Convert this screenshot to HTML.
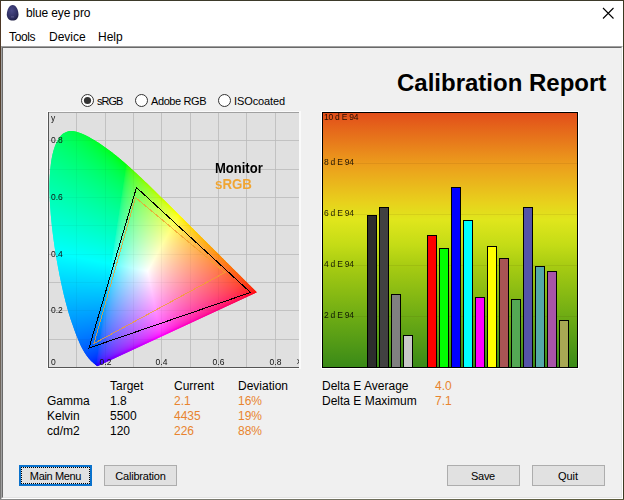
<!DOCTYPE html>
<html><head><meta charset="utf-8">
<style>
html,body{margin:0;padding:0;width:624px;height:500px;overflow:hidden;background:#f0f0f0;font-family:"Liberation Sans",sans-serif;}
.a{position:absolute;white-space:pre;line-height:1;}
.b{position:absolute;}
.t12{font-size:12px;color:#000;}
.or{color:#e8842e;}
.btn{position:absolute;top:465px;height:19px;width:71px;background:#e1e1e1;border:1px solid #adadad;}
.btn span{position:absolute;left:0;right:0;top:5px;text-align:center;font-size:11px;line-height:1;color:#000;}
</style></head><body>
<!-- window chrome -->
<div class="b" style="left:0;top:0;width:624px;height:46px;background:#fff"></div>
<div class="b" style="left:0;top:0;width:1px;height:500px;background:linear-gradient(#4a3422,#6b5a4a 60%,#777)"></div>
<div class="b" style="left:0;top:0;width:624px;height:1px;background:#3d3a2a"></div>
<div class="b" style="left:623px;top:0;width:1px;height:500px;background:#3a3a22"></div>
<div class="b" style="left:0;top:499px;width:624px;height:1px;background:linear-gradient(90deg,#8a8a8a,#5a5a3a)"></div>
<!-- client edge -->
<div class="b" style="left:1px;top:46px;width:621px;height:452px;border-top:1px solid #a0a0a0;border-left:1px solid #a0a0a0;border-right:1px solid #fff;border-bottom:1px solid #fff;box-sizing:border-box;width:622px;height:453px"></div>
<div class="b" style="left:2px;top:47px;box-sizing:border-box;width:620px;height:451px;border-top:1px solid #696969;border-left:1px solid #696969;border-right:1px solid #e3e3e3;border-bottom:1px solid #e3e3e3"></div>

<!-- title -->
<svg class="b" style="left:6px;top:4px" width="14" height="19" viewBox="0 0 14 19">
<defs><radialGradient id="eg" cx="0.42" cy="0.35" r="0.7"><stop offset="0" stop-color="#4a4a88"/><stop offset="0.7" stop-color="#2e2e62"/><stop offset="1" stop-color="#1c1c40"/></radialGradient></defs>
<path d="M6.65 0.9C10 0.9 12.5 6 12.5 10.5C12.5 14.2 10 16.6 6.65 16.6C3.3 16.6 0.8 14.2 0.8 10.5C0.8 6 3.3 0.9 6.65 0.9Z" fill="url(#eg)"/>
<rect x="5" y="12.5" width="3" height="0.8" fill="#8a8ab0" opacity="0.6"/>
</svg>
<div class="a t12" style="left:26px;top:7px;color:#000;letter-spacing:-0.15px">blue eye pro</div>
<svg class="b" style="left:602px;top:7px" width="13" height="13"><path d="M1 1L11.5 11.5M11.5 1L1 11.5" stroke="#000" stroke-width="1.1"/></svg>
<!-- menu -->
<div class="a t12" style="left:9px;top:31px;letter-spacing:-0.35px">Tools</div>
<div class="a t12" style="left:49px;top:31px">Device</div>
<div class="a t12" style="left:98px;top:31px">Help</div>

<!-- heading -->
<div class="a" style="left:397px;top:71px;font-size:24px;font-weight:bold;color:#000">Calibration Report</div>

<!-- radios -->
<svg class="b" style="left:80px;top:93px" width="16" height="16"><circle cx="7.5" cy="7.5" r="6" fill="#fff" stroke="#333" stroke-width="1"/><circle cx="7.5" cy="7.5" r="3.6" fill="#333"/></svg>
<div class="a" style="left:97px;top:96px;font-size:11px;letter-spacing:-1px">sRGB</div>
<svg class="b" style="left:134px;top:93px" width="16" height="16"><circle cx="7.5" cy="7.5" r="6" fill="#fff" stroke="#333" stroke-width="1"/></svg>
<div class="a" style="left:151px;top:96px;font-size:11px;letter-spacing:-0.4px">Adobe RGB</div>
<svg class="b" style="left:217px;top:93px" width="16" height="16"><circle cx="7.5" cy="7.5" r="6" fill="#fff" stroke="#333" stroke-width="1"/></svg>
<div class="a" style="left:234px;top:96px;font-size:11px;letter-spacing:-0.1px">ISOcoated</div>


<!-- CIE chart -->
<div class="b" style="left:47px;top:111px;width:254px;height:258px;background:#fafafa"></div>
<div class="b" style="left:48px;top:112px;width:251px;height:256px;overflow:hidden;background:#e0e0e0">
<svg class="b" style="left:0;top:0" width="251" height="256"><g fill="#cacaca"><rect x="28" y="1" width="1" height="254"/><rect x="1" y="227" width="251" height="1"/><rect x="57" y="1" width="1" height="254"/><rect x="1" y="198" width="251" height="1"/><rect x="85" y="1" width="1" height="254"/><rect x="1" y="170" width="251" height="1"/><rect x="113" y="1" width="1" height="254"/><rect x="1" y="142" width="251" height="1"/><rect x="142" y="1" width="1" height="254"/><rect x="1" y="113" width="251" height="1"/><rect x="170" y="1" width="1" height="254"/><rect x="1" y="85" width="251" height="1"/><rect x="198" y="1" width="1" height="254"/><rect x="1" y="57" width="251" height="1"/><rect x="227" y="1" width="1" height="254"/><rect x="1" y="28" width="251" height="1"/></g></svg>
<svg class="b" style="left:0;top:0" width="251" height="256"><clipPath id="lc"><path d="M49.9 254.1 49.9 254.1 49.8 254.1 49.8 254.1 49.8 254.1 49.8 254.1 49.8 254.1 49.8 254.1 49.8 254.1 49.8 254.1 49.8 254.1 49.8 254.1 49.7 254.1 49.7 254.1 49.7 254.1 49.7 254.1 49.7 254.1 49.7 254.1 49.7 254.1 49.6 254.1 49.6 254.1 49.6 254.1 49.6 254.1 49.6 254.1 49.6 254.1 49.5 254.1 49.5 254.1 49.5 254.1 49.5 254.1 49.5 254.1 49.4 254.1 49.4 254.1 49.4 254.1 49.4 254.1 49.3 254.1 49.3 254.1 49.3 254.1 49.2 254.1 49.2 254.1 49.1 254.1 49.1 254.1 49.0 254.0 49.0 254.0 48.9 254.0 48.9 253.9 48.8 253.9 48.7 253.8 48.6 253.8 48.6 253.7 48.5 253.6 48.4 253.5 48.3 253.5 48.2 253.4 48.1 253.3 48.0 253.2 47.8 253.1 47.7 253.0 47.6 252.8 47.4 252.7 47.3 252.6 47.1 252.4 46.9 252.3 46.7 252.1 46.6 251.9 46.4 251.8 46.1 251.6 45.9 251.4 45.7 251.2 45.4 251.0 45.2 250.7 44.9 250.5 44.6 250.2 44.3 250.0 44.0 249.7 43.7 249.4 43.3 249.2 43.0 248.8 42.6 248.5 42.2 248.1 41.8 247.6 41.3 247.1 40.8 246.5 40.3 245.8 39.7 245.0 39.1 244.2 38.5 243.4 37.9 242.5 37.3 241.7 36.7 240.8 36.2 239.9 35.7 239.1 35.2 238.3 34.8 237.6 34.4 236.8 34.0 236.1 33.6 235.3 33.2 234.5 32.8 233.7 32.4 232.8 32.0 231.9 31.6 230.9 31.1 229.8 30.6 228.7 30.1 227.5 29.6 226.3 29.1 225.1 28.6 223.8 28.1 222.4 27.5 221.0 27.0 219.5 26.4 217.9 25.8 216.2 25.2 214.5 24.6 212.8 23.9 211.0 23.3 209.1 22.6 207.2 22.0 205.1 21.3 203.0 20.6 200.9 20.0 198.6 19.3 196.3 18.7 193.8 18.0 191.3 17.3 188.8 16.7 186.1 16.0 183.4 15.3 180.6 14.7 177.8 14.0 174.8 13.4 171.9 12.7 168.8 12.1 165.7 11.4 162.4 10.8 159.1 10.1 155.7 9.5 152.3 8.9 148.9 8.3 145.4 7.7 142.0 7.2 138.5 6.6 135.0 6.1 131.5 5.6 127.9 5.1 124.3 4.7 120.7 4.2 117.0 3.8 113.4 3.5 109.9 3.1 106.3 2.8 102.9 2.6 99.4 2.3 96.0 2.1 92.6 1.9 89.2 1.8 85.8 1.7 82.5 1.6 79.2 1.5 76.0 1.5 72.9 1.6 69.9 1.7 66.9 1.8 63.9 2.0 61.0 2.2 58.2 2.5 55.4 2.8 52.7 3.1 50.0 3.5 47.5 4.0 45.1 4.4 42.8 5.0 40.6 5.5 38.5 6.2 36.5 6.8 34.6 7.5 32.8 8.3 31.0 9.1 29.4 9.9 27.9 10.7 26.5 11.5 25.3 12.4 24.2 13.3 23.2 14.3 22.3 15.3 21.6 16.3 21.0 17.3 20.4 18.4 20.0 19.4 19.6 20.5 19.3 21.6 19.1 22.6 19.0 23.7 19.0 24.9 19.0 26.0 19.2 27.1 19.4 28.3 19.8 29.4 20.1 30.6 20.5 31.7 20.9 32.9 21.3 34.0 21.7 35.2 22.2 36.3 22.7 37.5 23.3 38.6 23.9 39.8 24.5 41.0 25.1 42.1 25.7 43.2 26.4 44.4 27.0 45.5 27.7 46.6 28.3 47.7 29.0 48.8 29.7 49.8 30.3 50.9 31.0 52.0 31.8 53.1 32.5 54.1 33.2 55.2 33.9 56.2 34.7 57.3 35.4 58.3 36.2 59.4 36.9 60.4 37.7 61.5 38.5 62.5 39.3 63.5 40.0 64.6 40.8 65.6 41.7 66.6 42.5 67.7 43.3 68.7 44.1 69.7 45.0 70.7 45.8 71.8 46.7 72.8 47.5 73.8 48.4 74.8 49.3 75.9 50.2 76.9 51.0 77.9 51.9 78.9 52.8 79.9 53.7 80.9 54.6 82.0 55.5 83.0 56.5 84.0 57.4 85.0 58.3 86.0 59.2 87.0 60.2 88.0 61.1 89.0 62.0 90.1 63.0 91.1 63.9 92.1 64.9 93.1 65.8 94.1 66.8 95.1 67.7 96.1 68.7 97.1 69.7 98.2 70.6 99.2 71.6 100.2 72.6 101.2 73.6 102.2 74.5 103.2 75.5 104.2 76.5 105.3 77.5 106.3 78.5 107.3 79.4 108.3 80.4 109.3 81.4 110.3 82.4 111.3 83.4 112.3 84.4 113.3 85.4 114.4 86.4 115.4 87.4 116.4 88.3 117.4 89.3 118.4 90.3 119.4 91.3 120.4 92.3 121.4 93.3 122.4 94.3 123.4 95.3 124.4 96.3 125.4 97.3 126.4 98.2 127.4 99.2 128.4 100.2 129.4 101.2 130.4 102.2 131.4 103.2 132.3 104.1 133.3 105.1 134.3 106.1 135.3 107.1 136.2 108.0 137.2 109.0 138.2 110.0 139.1 110.9 140.1 111.9 141.1 112.8 142.0 113.8 143.0 114.7 143.9 115.7 144.9 116.6 145.8 117.5 146.7 118.5 147.7 119.4 148.6 120.3 149.5 121.3 150.4 122.2 151.3 123.1 152.3 124.0 153.2 124.9 154.1 125.8 155.0 126.7 155.8 127.6 156.7 128.4 157.6 129.3 158.5 130.2 159.3 131.0 160.2 131.9 161.1 132.7 161.9 133.6 162.7 134.4 163.6 135.2 164.4 136.1 165.2 136.9 166.0 137.7 166.8 138.5 167.6 139.3 168.4 140.1 169.2 140.8 169.9 141.6 170.7 142.4 171.4 143.1 172.2 143.8 172.9 144.5 173.6 145.2 174.3 145.9 175.0 146.6 175.6 147.3 176.3 147.9 177.0 148.6 177.6 149.3 178.3 149.9 178.9 150.5 179.5 151.2 180.2 151.8 180.8 152.4 181.4 153.0 182.0 153.6 182.6 154.2 183.1 154.8 183.7 155.3 184.3 155.9 184.8 156.4 185.3 156.9 185.9 157.5 186.4 158.0 186.9 158.5 187.4 159.0 187.9 159.4 188.3 159.9 188.8 160.4 189.3 160.8 189.7 161.3 190.1 161.7 190.6 162.1 191.0 162.5 191.4 162.9 191.8 163.3 192.2 163.7 192.6 164.1 192.9 164.5 193.3 164.9 193.7 165.2 194.0 165.6 194.4 165.9 194.7 166.2 195.0 166.6 195.3 166.9 195.6 167.2 195.9 167.5 196.2 167.8 196.5 168.1 196.8 168.4 197.1 168.7 197.4 168.9 197.6 169.2 197.9 169.4 198.2 169.7 198.4 169.9 198.6 170.2 198.9 170.4 199.1 170.6 199.3 170.9 199.6 171.1 199.8 171.3 200.0 171.5 200.2 171.7 200.4 171.9 200.6 172.1 200.8 172.3 201.0 172.5 201.2 172.7 201.4 172.9 201.6 173.1 201.7 173.3 201.9 173.4 202.1 173.6 202.3 173.8 202.4 174.0 202.6 174.1 202.8 174.3 202.9 174.4 203.1 174.6 203.2 174.8 203.4 174.9 203.5 175.1 203.7 175.2 203.8 175.3 203.9 175.5 204.1 175.6 204.2 175.7 204.3 175.9 204.5 176.0 204.6 176.1 204.7 176.2 204.8 176.3 204.9 176.5 205.1 176.6 205.2 176.7 205.3 176.8 205.4 176.9 205.5 177.0 205.6 177.1 205.7 177.2 205.8 177.3 205.8 177.3 205.9 177.4 206.0 177.5 206.1 177.6 206.2 177.7 206.2 177.7 206.3 177.8 206.4 177.9 206.5 178.0 206.5 178.0 206.6 178.1 206.7 178.2 206.7 178.2 206.8 178.3 206.9 178.4 206.9 178.4 207.0 178.5 207.0 178.5 207.1 178.6 207.1 178.6 207.2 178.7 207.2 178.7 207.3 178.8 207.3 178.8 207.4 178.9 207.4 178.9 207.5 179.0 207.5 179.0 207.5 179.0 207.6 179.1 207.6 179.1 207.6 179.1 207.7 179.2 207.7 179.2 207.7 179.2 207.7 179.2 207.8 179.3 207.8 179.3 207.8 179.3 207.8 179.3 207.9 179.4 207.9 179.4 207.9 179.4 208.0 179.5 208.0 179.5 208.0 179.5 208.0 179.5 208.0 179.5 208.1 179.6 208.1 179.6 208.1 179.6 208.1 179.6 208.1 179.6 208.2 179.7 208.2 179.7 208.2 179.7 208.2 179.7 208.2 179.7 208.3 179.8 208.3 179.8 208.3 179.8 208.3 179.8 208.3 179.8 208.4 179.9 208.4 179.9 208.4 179.9 208.4 179.9 208.4 179.9 208.5 180.0 208.5 180.0 208.5 180.0 208.5 180.0 208.5 180.0 208.5 180.0 208.6 180.1 208.6 180.1 208.6 180.1 208.6 180.1 208.6 180.1 208.6 180.1 208.6 180.1 208.7 180.2 208.7 180.2 208.7 180.2 208.7 180.2 208.7 180.2 208.7 180.2 208.7 180.2 208.7 180.2 208.7 180.2 208.7 180.2 208.7 180.2 208.7 180.2 208.7 180.2 208.8 180.3 208.8 180.3 208.8 180.3 208.8 180.3 208.8 180.3 208.8 180.3 208.8 180.3 208.8 180.3 208.8 180.3 208.8 180.3 208.8 180.3 208.8 180.3 208.8 180.3Z"/></clipPath><g clip-path="url(#lc)" shape-rendering="crispEdges"><path fill="#0f5" d="M16 18h2v2h-2zM18 18h2v2h-2zM20 18h2v2h-2zM12 20h2v2h-2zM14 20h2v2h-2zM16 20h2v2h-2zM18 20h2v2h-2zM20 20h2v2h-2zM22 20h2v2h-2zM14 22h2v2h-2zM16 22h2v2h-2zM18 22h2v2h-2zM20 22h2v2h-2zM22 22h2v2h-2zM24 22h2v2h-2zM18 24h2v2h-2zM20 24h2v2h-2zM22 24h2v2h-2zM24 24h2v2h-2zM26 24h2v2h-2zM20 26h2v2h-2zM22 26h2v2h-2zM24 26h2v2h-2zM26 26h2v2h-2zM28 26h2v2h-2zM30 26h2v2h-2zM22 28h2v2h-2zM24 28h2v2h-2zM26 28h2v2h-2zM28 28h2v2h-2zM30 28h2v2h-2zM32 28h2v2h-2zM24 30h2v2h-2zM26 30h2v2h-2zM28 30h2v2h-2zM30 30h2v2h-2zM32 30h2v2h-2zM34 30h2v2h-2zM28 32h2v2h-2zM30 32h2v2h-2zM32 32h2v2h-2zM34 32h2v2h-2zM36 32h2v2h-2zM30 34h2v2h-2zM32 34h2v2h-2zM34 34h2v2h-2zM36 34h2v2h-2zM38 34h2v2h-2zM32 36h2v2h-2zM34 36h2v2h-2zM36 36h2v2h-2zM38 36h2v2h-2zM40 36h2v2h-2zM34 38h2v2h-2zM36 38h2v2h-2zM38 38h2v2h-2zM40 38h2v2h-2zM42 38h2v2h-2zM44 38h2v2h-2zM36 40h2v2h-2zM38 40h2v2h-2zM40 40h2v2h-2zM42 40h2v2h-2zM44 40h2v2h-2zM46 40h2v2h-2zM40 42h2v2h-2zM42 42h2v2h-2zM44 42h2v2h-2zM46 42h2v2h-2zM48 42h2v2h-2zM42 44h2v2h-2zM44 44h2v2h-2zM46 44h2v2h-2zM48 44h2v2h-2zM50 44h2v2h-2zM44 46h2v2h-2zM46 46h2v2h-2zM48 46h2v2h-2zM50 46h2v2h-2zM52 46h2v2h-2zM46 48h2v2h-2zM48 48h2v2h-2zM50 48h2v2h-2zM52 48h2v2h-2zM54 48h2v2h-2zM50 50h2v2h-2zM52 50h2v2h-2zM54 50h2v2h-2zM56 50h2v2h-2zM58 50h2v2h-2zM52 52h2v2h-2zM54 52h2v2h-2zM56 52h2v2h-2zM58 52h2v2h-2zM60 52h2v2h-2zM54 54h2v2h-2zM56 54h2v2h-2zM58 54h2v2h-2zM60 54h2v2h-2zM62 54h2v2h-2zM56 56h2v2h-2zM58 56h2v2h-2zM60 56h2v2h-2zM62 56h2v2h-2zM64 56h2v2h-2zM60 58h2v2h-2zM62 58h2v2h-2zM64 58h2v2h-2zM66 58h2v2h-2zM62 60h2v2h-2zM64 60h2v2h-2zM66 60h2v2h-2zM68 60h2v2h-2zM64 62h2v2h-2zM66 62h2v2h-2zM68 62h2v2h-2zM70 62h2v2h-2zM66 64h2v2h-2zM68 64h2v2h-2zM70 64h2v2h-2zM72 64h2v2h-2zM74 64h2v2h-2zM70 66h2v2h-2zM72 66h2v2h-2zM74 66h2v2h-2zM72 68h2v2h-2zM74 68h2v2h-2zM74 70h2v2h-2z"/><path fill="#0f4" d="M22 18h2v2h-2zM24 18h2v2h-2zM26 18h2v2h-2zM28 18h2v2h-2zM30 18h2v2h-2zM24 20h2v2h-2zM26 20h2v2h-2zM28 20h2v2h-2zM30 20h2v2h-2zM32 20h2v2h-2zM26 22h2v2h-2zM28 22h2v2h-2zM30 22h2v2h-2zM32 22h2v2h-2zM34 22h2v2h-2zM28 24h2v2h-2zM30 24h2v2h-2zM32 24h2v2h-2zM34 24h2v2h-2zM36 24h2v2h-2zM32 26h2v2h-2zM34 26h2v2h-2zM36 26h2v2h-2zM38 26h2v2h-2zM34 28h2v2h-2zM36 28h2v2h-2zM38 28h2v2h-2zM40 28h2v2h-2zM36 30h2v2h-2zM38 30h2v2h-2zM40 30h2v2h-2zM42 30h2v2h-2zM38 32h2v2h-2zM40 32h2v2h-2zM42 32h2v2h-2zM44 32h2v2h-2zM40 34h2v2h-2zM42 34h2v2h-2zM44 34h2v2h-2zM46 34h2v2h-2zM42 36h2v2h-2zM44 36h2v2h-2zM46 36h2v2h-2zM48 36h2v2h-2zM46 38h2v2h-2zM48 38h2v2h-2zM50 38h2v2h-2zM52 38h2v2h-2zM48 40h2v2h-2zM50 40h2v2h-2zM52 40h2v2h-2zM54 40h2v2h-2zM50 42h2v2h-2zM52 42h2v2h-2zM54 42h2v2h-2zM56 42h2v2h-2zM52 44h2v2h-2zM54 44h2v2h-2zM56 44h2v2h-2zM58 44h2v2h-2zM54 46h2v2h-2zM56 46h2v2h-2zM58 46h2v2h-2zM60 46h2v2h-2zM56 48h2v2h-2zM58 48h2v2h-2zM60 48h2v2h-2zM62 48h2v2h-2zM60 50h2v2h-2zM62 50h2v2h-2zM64 50h2v2h-2zM62 52h2v2h-2zM64 52h2v2h-2zM66 52h2v2h-2zM64 54h2v2h-2zM66 54h2v2h-2zM68 54h2v2h-2zM66 56h2v2h-2zM68 56h2v2h-2zM70 56h2v2h-2zM68 58h2v2h-2zM70 58h2v2h-2zM72 58h2v2h-2zM74 58h2v2h-2zM70 60h2v2h-2zM72 60h2v2h-2zM74 60h2v2h-2zM76 60h2v2h-2zM72 62h2v2h-2zM74 62h2v2h-2z"/><path fill="#0f3" d="M34 20h2v2h-2zM36 20h2v2h-2zM36 22h2v2h-2zM38 22h2v2h-2zM40 22h2v2h-2zM38 24h2v2h-2zM40 24h2v2h-2zM42 24h2v2h-2zM40 26h2v2h-2zM42 26h2v2h-2zM44 26h2v2h-2zM42 28h2v2h-2zM44 28h2v2h-2zM46 28h2v2h-2zM44 30h2v2h-2zM46 30h2v2h-2zM48 30h2v2h-2zM46 32h2v2h-2zM48 32h2v2h-2zM50 32h2v2h-2zM48 34h2v2h-2zM50 34h2v2h-2zM52 34h2v2h-2zM50 36h2v2h-2zM52 36h2v2h-2zM54 36h2v2h-2zM54 38h2v2h-2zM56 38h2v2h-2zM56 40h2v2h-2zM58 40h2v2h-2zM58 42h2v2h-2zM60 42h2v2h-2zM60 44h2v2h-2zM62 44h2v2h-2zM62 46h2v2h-2zM64 46h2v2h-2zM66 46h2v2h-2zM64 48h2v2h-2zM66 48h2v2h-2zM68 48h2v2h-2zM66 50h2v2h-2zM68 50h2v2h-2zM70 50h2v2h-2zM68 52h2v2h-2zM70 52h2v2h-2zM72 52h2v2h-2zM70 54h2v2h-2zM72 54h2v2h-2zM74 54h2v2h-2zM72 56h2v2h-2zM74 56h2v2h-2zM76 56h2v2h-2zM76 58h2v2h-2z"/><path fill="#0f6" d="M10 22h2v2h-2zM12 22h2v2h-2zM10 24h2v2h-2zM12 24h2v2h-2zM14 24h2v2h-2zM16 24h2v2h-2zM8 26h2v2h-2zM10 26h2v2h-2zM12 26h2v2h-2zM14 26h2v2h-2zM16 26h2v2h-2zM18 26h2v2h-2zM8 28h2v2h-2zM10 28h2v2h-2zM12 28h2v2h-2zM14 28h2v2h-2zM16 28h2v2h-2zM18 28h2v2h-2zM20 28h2v2h-2zM10 30h2v2h-2zM12 30h2v2h-2zM14 30h2v2h-2zM16 30h2v2h-2zM18 30h2v2h-2zM20 30h2v2h-2zM22 30h2v2h-2zM12 32h2v2h-2zM14 32h2v2h-2zM16 32h2v2h-2zM18 32h2v2h-2zM20 32h2v2h-2zM22 32h2v2h-2zM24 32h2v2h-2zM26 32h2v2h-2zM16 34h2v2h-2zM18 34h2v2h-2zM20 34h2v2h-2zM22 34h2v2h-2zM24 34h2v2h-2zM26 34h2v2h-2zM28 34h2v2h-2zM18 36h2v2h-2zM20 36h2v2h-2zM22 36h2v2h-2zM24 36h2v2h-2zM26 36h2v2h-2zM28 36h2v2h-2zM30 36h2v2h-2zM20 38h2v2h-2zM22 38h2v2h-2zM24 38h2v2h-2zM26 38h2v2h-2zM28 38h2v2h-2zM30 38h2v2h-2zM32 38h2v2h-2zM24 40h2v2h-2zM26 40h2v2h-2zM28 40h2v2h-2zM30 40h2v2h-2zM32 40h2v2h-2zM34 40h2v2h-2zM26 42h2v2h-2zM28 42h2v2h-2zM30 42h2v2h-2zM32 42h2v2h-2zM34 42h2v2h-2zM36 42h2v2h-2zM38 42h2v2h-2zM28 44h2v2h-2zM30 44h2v2h-2zM32 44h2v2h-2zM34 44h2v2h-2zM36 44h2v2h-2zM38 44h2v2h-2zM40 44h2v2h-2zM32 46h2v2h-2zM34 46h2v2h-2zM36 46h2v2h-2zM38 46h2v2h-2zM40 46h2v2h-2zM42 46h2v2h-2zM34 48h2v2h-2zM36 48h2v2h-2zM38 48h2v2h-2zM40 48h2v2h-2zM42 48h2v2h-2zM44 48h2v2h-2zM36 50h2v2h-2zM38 50h2v2h-2zM40 50h2v2h-2zM42 50h2v2h-2zM44 50h2v2h-2zM46 50h2v2h-2zM48 50h2v2h-2zM40 52h2v2h-2zM42 52h2v2h-2zM44 52h2v2h-2zM46 52h2v2h-2zM48 52h2v2h-2zM50 52h2v2h-2zM42 54h2v2h-2zM44 54h2v2h-2zM46 54h2v2h-2zM48 54h2v2h-2zM50 54h2v2h-2zM52 54h2v2h-2zM44 56h2v2h-2zM46 56h2v2h-2zM48 56h2v2h-2zM50 56h2v2h-2zM52 56h2v2h-2zM54 56h2v2h-2zM48 58h2v2h-2zM50 58h2v2h-2zM52 58h2v2h-2zM54 58h2v2h-2zM56 58h2v2h-2zM58 58h2v2h-2zM50 60h2v2h-2zM52 60h2v2h-2zM54 60h2v2h-2zM56 60h2v2h-2zM58 60h2v2h-2zM60 60h2v2h-2zM52 62h2v2h-2zM54 62h2v2h-2zM56 62h2v2h-2zM58 62h2v2h-2zM60 62h2v2h-2zM62 62h2v2h-2zM56 64h2v2h-2zM58 64h2v2h-2zM60 64h2v2h-2zM62 64h2v2h-2zM64 64h2v2h-2zM58 66h2v2h-2zM60 66h2v2h-2zM62 66h2v2h-2zM64 66h2v2h-2zM66 66h2v2h-2zM68 66h2v2h-2zM60 68h2v2h-2zM62 68h2v2h-2zM64 68h2v2h-2zM66 68h2v2h-2zM68 68h2v2h-2zM70 68h2v2h-2zM64 70h2v2h-2zM66 70h2v2h-2zM68 70h2v2h-2zM70 70h2v2h-2zM72 70h2v2h-2zM66 72h2v2h-2zM68 72h2v2h-2zM70 72h2v2h-2zM72 72h2v2h-2zM74 72h2v2h-2zM68 74h2v2h-2zM70 74h2v2h-2zM72 74h2v2h-2zM72 76h2v2h-2z"/><path fill="#0f2" d="M44 24h2v2h-2zM46 26h2v2h-2zM48 28h2v2h-2zM50 28h2v2h-2zM50 30h2v2h-2zM52 30h2v2h-2zM52 32h2v2h-2zM54 32h2v2h-2zM54 34h2v2h-2zM56 34h2v2h-2zM56 36h2v2h-2zM58 36h2v2h-2zM58 38h2v2h-2zM60 38h2v2h-2zM60 40h2v2h-2zM62 40h2v2h-2zM62 42h2v2h-2zM64 42h2v2h-2zM64 44h2v2h-2zM66 44h2v2h-2zM68 46h2v2h-2zM70 48h2v2h-2zM72 50h2v2h-2zM74 52h2v2h-2zM76 54h2v2h-2z"/><path fill="#0f7" d="M6 28h2v2h-2zM6 30h2v2h-2zM8 30h2v2h-2zM6 32h2v2h-2zM8 32h2v2h-2zM10 32h2v2h-2zM4 34h2v2h-2zM6 34h2v2h-2zM8 34h2v2h-2zM10 34h2v2h-2zM12 34h2v2h-2zM14 34h2v2h-2zM4 36h2v2h-2zM6 36h2v2h-2zM8 36h2v2h-2zM10 36h2v2h-2zM12 36h2v2h-2zM14 36h2v2h-2zM16 36h2v2h-2zM4 38h2v2h-2zM6 38h2v2h-2zM8 38h2v2h-2zM10 38h2v2h-2zM12 38h2v2h-2zM14 38h2v2h-2zM16 38h2v2h-2zM18 38h2v2h-2zM6 40h2v2h-2zM8 40h2v2h-2zM10 40h2v2h-2zM12 40h2v2h-2zM14 40h2v2h-2zM16 40h2v2h-2zM18 40h2v2h-2zM20 40h2v2h-2zM22 40h2v2h-2zM8 42h2v2h-2zM10 42h2v2h-2zM12 42h2v2h-2zM14 42h2v2h-2zM16 42h2v2h-2zM18 42h2v2h-2zM20 42h2v2h-2zM22 42h2v2h-2zM24 42h2v2h-2zM12 44h2v2h-2zM14 44h2v2h-2zM16 44h2v2h-2zM18 44h2v2h-2zM20 44h2v2h-2zM22 44h2v2h-2zM24 44h2v2h-2zM26 44h2v2h-2zM14 46h2v2h-2zM16 46h2v2h-2zM18 46h2v2h-2zM20 46h2v2h-2zM22 46h2v2h-2zM24 46h2v2h-2zM26 46h2v2h-2zM28 46h2v2h-2zM30 46h2v2h-2zM18 48h2v2h-2zM20 48h2v2h-2zM22 48h2v2h-2zM24 48h2v2h-2zM26 48h2v2h-2zM28 48h2v2h-2zM30 48h2v2h-2zM32 48h2v2h-2zM20 50h2v2h-2zM22 50h2v2h-2zM24 50h2v2h-2zM26 50h2v2h-2zM28 50h2v2h-2zM30 50h2v2h-2zM32 50h2v2h-2zM34 50h2v2h-2zM22 52h2v2h-2zM24 52h2v2h-2zM26 52h2v2h-2zM28 52h2v2h-2zM30 52h2v2h-2zM32 52h2v2h-2zM34 52h2v2h-2zM36 52h2v2h-2zM38 52h2v2h-2zM26 54h2v2h-2zM28 54h2v2h-2zM30 54h2v2h-2zM32 54h2v2h-2zM34 54h2v2h-2zM36 54h2v2h-2zM38 54h2v2h-2zM40 54h2v2h-2zM28 56h2v2h-2zM30 56h2v2h-2zM32 56h2v2h-2zM34 56h2v2h-2zM36 56h2v2h-2zM38 56h2v2h-2zM40 56h2v2h-2zM42 56h2v2h-2zM32 58h2v2h-2zM34 58h2v2h-2zM36 58h2v2h-2zM38 58h2v2h-2zM40 58h2v2h-2zM42 58h2v2h-2zM44 58h2v2h-2zM46 58h2v2h-2zM34 60h2v2h-2zM36 60h2v2h-2zM38 60h2v2h-2zM40 60h2v2h-2zM42 60h2v2h-2zM44 60h2v2h-2zM46 60h2v2h-2zM48 60h2v2h-2zM38 62h2v2h-2zM40 62h2v2h-2zM42 62h2v2h-2zM44 62h2v2h-2zM46 62h2v2h-2zM48 62h2v2h-2zM50 62h2v2h-2zM40 64h2v2h-2zM42 64h2v2h-2zM44 64h2v2h-2zM46 64h2v2h-2zM48 64h2v2h-2zM50 64h2v2h-2zM52 64h2v2h-2zM54 64h2v2h-2zM44 66h2v2h-2zM46 66h2v2h-2zM48 66h2v2h-2zM50 66h2v2h-2zM52 66h2v2h-2zM54 66h2v2h-2zM56 66h2v2h-2zM46 68h2v2h-2zM48 68h2v2h-2zM50 68h2v2h-2zM52 68h2v2h-2zM54 68h2v2h-2zM56 68h2v2h-2zM58 68h2v2h-2zM50 70h2v2h-2zM52 70h2v2h-2zM54 70h2v2h-2zM56 70h2v2h-2zM58 70h2v2h-2zM60 70h2v2h-2zM62 70h2v2h-2zM52 72h2v2h-2zM54 72h2v2h-2zM56 72h2v2h-2zM58 72h2v2h-2zM60 72h2v2h-2zM62 72h2v2h-2zM64 72h2v2h-2zM54 74h2v2h-2zM56 74h2v2h-2zM58 74h2v2h-2zM60 74h2v2h-2zM62 74h2v2h-2zM64 74h2v2h-2zM66 74h2v2h-2zM58 76h2v2h-2zM60 76h2v2h-2zM62 76h2v2h-2zM64 76h2v2h-2zM66 76h2v2h-2zM68 76h2v2h-2zM70 76h2v2h-2zM60 78h2v2h-2zM62 78h2v2h-2zM64 78h2v2h-2zM66 78h2v2h-2zM68 78h2v2h-2zM70 78h2v2h-2zM72 78h2v2h-2zM64 80h2v2h-2zM66 80h2v2h-2zM68 80h2v2h-2zM70 80h2v2h-2zM72 80h2v2h-2zM66 82h2v2h-2zM68 82h2v2h-2zM70 82h2v2h-2zM72 82h2v2h-2zM70 84h2v2h-2zM72 84h2v2h-2zM72 86h2v2h-2z"/><path fill="#0f1" d="M56 32h2v2h-2zM58 34h2v2h-2zM60 36h2v2h-2zM62 38h2v2h-2zM64 40h2v2h-2zM66 42h2v2h-2zM68 44h2v2h-2zM70 46h2v2h-2zM72 48h2v2h-2zM74 50h2v2h-2zM76 52h2v2h-2z"/><path fill="#0f0" d="M62 36h2v2h-2zM64 38h2v2h-2zM66 40h2v2h-2zM68 42h2v2h-2zM70 44h2v2h-2zM72 44h2v2h-2zM72 46h2v2h-2zM74 46h2v2h-2zM74 48h2v2h-2zM76 48h2v2h-2zM76 50h2v2h-2z"/><path fill="#0f8" d="M2 40h2v2h-2zM4 40h2v2h-2zM2 42h2v2h-2zM4 42h2v2h-2zM6 42h2v2h-2zM2 44h2v2h-2zM4 44h2v2h-2zM6 44h2v2h-2zM8 44h2v2h-2zM10 44h2v2h-2zM2 46h2v2h-2zM4 46h2v2h-2zM6 46h2v2h-2zM8 46h2v2h-2zM10 46h2v2h-2zM12 46h2v2h-2zM2 48h2v2h-2zM4 48h2v2h-2zM6 48h2v2h-2zM8 48h2v2h-2zM10 48h2v2h-2zM12 48h2v2h-2zM14 48h2v2h-2zM16 48h2v2h-2zM2 50h2v2h-2zM4 50h2v2h-2zM6 50h2v2h-2zM8 50h2v2h-2zM10 50h2v2h-2zM12 50h2v2h-2zM14 50h2v2h-2zM16 50h2v2h-2zM18 50h2v2h-2zM2 52h2v2h-2zM4 52h2v2h-2zM6 52h2v2h-2zM8 52h2v2h-2zM10 52h2v2h-2zM12 52h2v2h-2zM14 52h2v2h-2zM16 52h2v2h-2zM18 52h2v2h-2zM20 52h2v2h-2zM6 54h2v2h-2zM8 54h2v2h-2zM10 54h2v2h-2zM12 54h2v2h-2zM14 54h2v2h-2zM16 54h2v2h-2zM18 54h2v2h-2zM20 54h2v2h-2zM22 54h2v2h-2zM24 54h2v2h-2zM8 56h2v2h-2zM10 56h2v2h-2zM12 56h2v2h-2zM14 56h2v2h-2zM16 56h2v2h-2zM18 56h2v2h-2zM20 56h2v2h-2zM22 56h2v2h-2zM24 56h2v2h-2zM26 56h2v2h-2zM12 58h2v2h-2zM14 58h2v2h-2zM16 58h2v2h-2zM18 58h2v2h-2zM20 58h2v2h-2zM22 58h2v2h-2zM24 58h2v2h-2zM26 58h2v2h-2zM28 58h2v2h-2zM30 58h2v2h-2zM14 60h2v2h-2zM16 60h2v2h-2zM18 60h2v2h-2zM20 60h2v2h-2zM22 60h2v2h-2zM24 60h2v2h-2zM26 60h2v2h-2zM28 60h2v2h-2zM30 60h2v2h-2zM32 60h2v2h-2zM18 62h2v2h-2zM20 62h2v2h-2zM22 62h2v2h-2zM24 62h2v2h-2zM26 62h2v2h-2zM28 62h2v2h-2zM30 62h2v2h-2zM32 62h2v2h-2zM34 62h2v2h-2zM36 62h2v2h-2zM22 64h2v2h-2zM24 64h2v2h-2zM26 64h2v2h-2zM28 64h2v2h-2zM30 64h2v2h-2zM32 64h2v2h-2zM34 64h2v2h-2zM36 64h2v2h-2zM38 64h2v2h-2zM24 66h2v2h-2zM26 66h2v2h-2zM28 66h2v2h-2zM30 66h2v2h-2zM32 66h2v2h-2zM34 66h2v2h-2zM36 66h2v2h-2zM38 66h2v2h-2zM40 66h2v2h-2zM42 66h2v2h-2zM28 68h2v2h-2zM30 68h2v2h-2zM32 68h2v2h-2zM34 68h2v2h-2zM36 68h2v2h-2zM38 68h2v2h-2zM40 68h2v2h-2zM42 68h2v2h-2zM44 68h2v2h-2zM32 70h2v2h-2zM34 70h2v2h-2zM36 70h2v2h-2zM38 70h2v2h-2zM40 70h2v2h-2zM42 70h2v2h-2zM44 70h2v2h-2zM46 70h2v2h-2zM48 70h2v2h-2zM34 72h2v2h-2zM36 72h2v2h-2zM38 72h2v2h-2zM40 72h2v2h-2zM42 72h2v2h-2zM44 72h2v2h-2zM46 72h2v2h-2zM48 72h2v2h-2zM50 72h2v2h-2zM38 74h2v2h-2zM40 74h2v2h-2zM42 74h2v2h-2zM44 74h2v2h-2zM46 74h2v2h-2zM48 74h2v2h-2zM50 74h2v2h-2zM52 74h2v2h-2zM40 76h2v2h-2zM42 76h2v2h-2zM44 76h2v2h-2zM46 76h2v2h-2zM48 76h2v2h-2zM50 76h2v2h-2zM52 76h2v2h-2zM54 76h2v2h-2zM56 76h2v2h-2zM44 78h2v2h-2zM46 78h2v2h-2zM48 78h2v2h-2zM50 78h2v2h-2zM52 78h2v2h-2zM54 78h2v2h-2zM56 78h2v2h-2zM58 78h2v2h-2zM48 80h2v2h-2zM50 80h2v2h-2zM52 80h2v2h-2zM54 80h2v2h-2zM56 80h2v2h-2zM58 80h2v2h-2zM60 80h2v2h-2zM62 80h2v2h-2zM50 82h2v2h-2zM52 82h2v2h-2zM54 82h2v2h-2zM56 82h2v2h-2zM58 82h2v2h-2zM60 82h2v2h-2zM62 82h2v2h-2zM64 82h2v2h-2zM54 84h2v2h-2zM56 84h2v2h-2zM58 84h2v2h-2zM60 84h2v2h-2zM62 84h2v2h-2zM64 84h2v2h-2zM66 84h2v2h-2zM68 84h2v2h-2zM58 86h2v2h-2zM60 86h2v2h-2zM62 86h2v2h-2zM64 86h2v2h-2zM66 86h2v2h-2zM68 86h2v2h-2zM70 86h2v2h-2zM60 88h2v2h-2zM62 88h2v2h-2zM64 88h2v2h-2zM66 88h2v2h-2zM68 88h2v2h-2zM70 88h2v2h-2zM64 90h2v2h-2zM66 90h2v2h-2zM68 90h2v2h-2zM70 90h2v2h-2zM66 92h2v2h-2zM68 92h2v2h-2zM70 92h2v2h-2zM70 94h2v2h-2z"/><path fill="#1f0" d="M78 50h2v2h-2z"/><path fill="#0f9" d="M0 52h2v2h-2zM0 54h2v2h-2zM2 54h2v2h-2zM4 54h2v2h-2zM0 56h2v2h-2zM2 56h2v2h-2zM4 56h2v2h-2zM6 56h2v2h-2zM0 58h2v2h-2zM2 58h2v2h-2zM4 58h2v2h-2zM6 58h2v2h-2zM8 58h2v2h-2zM10 58h2v2h-2zM0 60h2v2h-2zM2 60h2v2h-2zM4 60h2v2h-2zM6 60h2v2h-2zM8 60h2v2h-2zM10 60h2v2h-2zM12 60h2v2h-2zM0 62h2v2h-2zM2 62h2v2h-2zM4 62h2v2h-2zM6 62h2v2h-2zM8 62h2v2h-2zM10 62h2v2h-2zM12 62h2v2h-2zM14 62h2v2h-2zM16 62h2v2h-2zM0 64h2v2h-2zM2 64h2v2h-2zM4 64h2v2h-2zM6 64h2v2h-2zM8 64h2v2h-2zM10 64h2v2h-2zM12 64h2v2h-2zM14 64h2v2h-2zM16 64h2v2h-2zM18 64h2v2h-2zM20 64h2v2h-2zM0 66h2v2h-2zM2 66h2v2h-2zM4 66h2v2h-2zM6 66h2v2h-2zM8 66h2v2h-2zM10 66h2v2h-2zM12 66h2v2h-2zM14 66h2v2h-2zM16 66h2v2h-2zM18 66h2v2h-2zM20 66h2v2h-2zM22 66h2v2h-2zM4 68h2v2h-2zM6 68h2v2h-2zM8 68h2v2h-2zM10 68h2v2h-2zM12 68h2v2h-2zM14 68h2v2h-2zM16 68h2v2h-2zM18 68h2v2h-2zM20 68h2v2h-2zM22 68h2v2h-2zM24 68h2v2h-2zM26 68h2v2h-2zM8 70h2v2h-2zM10 70h2v2h-2zM12 70h2v2h-2zM14 70h2v2h-2zM16 70h2v2h-2zM18 70h2v2h-2zM20 70h2v2h-2zM22 70h2v2h-2zM24 70h2v2h-2zM26 70h2v2h-2zM28 70h2v2h-2zM30 70h2v2h-2zM12 72h2v2h-2zM14 72h2v2h-2zM16 72h2v2h-2zM18 72h2v2h-2zM20 72h2v2h-2zM22 72h2v2h-2zM24 72h2v2h-2zM26 72h2v2h-2zM28 72h2v2h-2zM30 72h2v2h-2zM32 72h2v2h-2zM16 74h2v2h-2zM18 74h2v2h-2zM20 74h2v2h-2zM22 74h2v2h-2zM24 74h2v2h-2zM26 74h2v2h-2zM28 74h2v2h-2zM30 74h2v2h-2zM32 74h2v2h-2zM34 74h2v2h-2zM36 74h2v2h-2zM20 76h2v2h-2zM22 76h2v2h-2zM24 76h2v2h-2zM26 76h2v2h-2zM28 76h2v2h-2zM30 76h2v2h-2zM32 76h2v2h-2zM34 76h2v2h-2zM36 76h2v2h-2zM38 76h2v2h-2zM22 78h2v2h-2zM24 78h2v2h-2zM26 78h2v2h-2zM28 78h2v2h-2zM30 78h2v2h-2zM32 78h2v2h-2zM34 78h2v2h-2zM36 78h2v2h-2zM38 78h2v2h-2zM40 78h2v2h-2zM42 78h2v2h-2zM26 80h2v2h-2zM28 80h2v2h-2zM30 80h2v2h-2zM32 80h2v2h-2zM34 80h2v2h-2zM36 80h2v2h-2zM38 80h2v2h-2zM40 80h2v2h-2zM42 80h2v2h-2zM44 80h2v2h-2zM46 80h2v2h-2zM30 82h2v2h-2zM32 82h2v2h-2zM34 82h2v2h-2zM36 82h2v2h-2zM38 82h2v2h-2zM40 82h2v2h-2zM42 82h2v2h-2zM44 82h2v2h-2zM46 82h2v2h-2zM48 82h2v2h-2zM34 84h2v2h-2zM36 84h2v2h-2zM38 84h2v2h-2zM40 84h2v2h-2zM42 84h2v2h-2zM44 84h2v2h-2zM46 84h2v2h-2zM48 84h2v2h-2zM50 84h2v2h-2zM52 84h2v2h-2zM38 86h2v2h-2zM40 86h2v2h-2zM42 86h2v2h-2zM44 86h2v2h-2zM46 86h2v2h-2zM48 86h2v2h-2zM50 86h2v2h-2zM52 86h2v2h-2zM54 86h2v2h-2zM56 86h2v2h-2zM42 88h2v2h-2zM44 88h2v2h-2zM46 88h2v2h-2zM48 88h2v2h-2zM50 88h2v2h-2zM52 88h2v2h-2zM54 88h2v2h-2zM56 88h2v2h-2zM58 88h2v2h-2zM44 90h2v2h-2zM46 90h2v2h-2zM48 90h2v2h-2zM50 90h2v2h-2zM52 90h2v2h-2zM54 90h2v2h-2zM56 90h2v2h-2zM58 90h2v2h-2zM60 90h2v2h-2zM62 90h2v2h-2zM48 92h2v2h-2zM50 92h2v2h-2zM52 92h2v2h-2zM54 92h2v2h-2zM56 92h2v2h-2zM58 92h2v2h-2zM60 92h2v2h-2zM62 92h2v2h-2zM64 92h2v2h-2zM52 94h2v2h-2zM54 94h2v2h-2zM56 94h2v2h-2zM58 94h2v2h-2zM60 94h2v2h-2zM62 94h2v2h-2zM64 94h2v2h-2zM66 94h2v2h-2zM68 94h2v2h-2zM56 96h2v2h-2zM58 96h2v2h-2zM60 96h2v2h-2zM62 96h2v2h-2zM64 96h2v2h-2zM66 96h2v2h-2zM68 96h2v2h-2zM70 96h2v2h-2zM60 98h2v2h-2zM62 98h2v2h-2zM64 98h2v2h-2zM66 98h2v2h-2zM68 98h2v2h-2zM70 98h2v2h-2zM64 100h2v2h-2zM66 100h2v2h-2zM68 100h2v2h-2zM68 102h2v2h-2z"/><path fill="#2f0" d="M78 52h2v2h-2z"/><path fill="#3f0" d="M80 52h2v2h-2zM80 54h2v2h-2z"/><path fill="#2f1" d="M78 54h2v2h-2z"/><path fill="#4f0" d="M82 54h2v2h-2zM82 56h2v2h-2z"/><path fill="#2f2" d="M78 56h2v2h-2z"/><path fill="#3f1" d="M80 56h2v2h-2z"/><path fill="#5f0" d="M84 56h2v2h-2zM84 58h2v2h-2zM86 58h2v2h-2zM86 60h2v2h-2z"/><path fill="#2f3" d="M78 58h2v2h-2zM78 60h2v2h-2z"/><path fill="#3f2" d="M80 58h2v2h-2z"/><path fill="#4f1" d="M82 58h2v2h-2z"/><path fill="#3f3" d="M80 60h2v2h-2z"/><path fill="#4f2" d="M82 60h2v2h-2z"/><path fill="#5f1" d="M84 60h2v2h-2z"/><path fill="#6f0" d="M88 60h2v2h-2zM90 60h2v2h-2zM88 62h2v2h-2z"/><path fill="#1f4" d="M76 62h2v2h-2zM76 64h2v2h-2z"/><path fill="#3f4" d="M78 62h2v2h-2zM78 64h2v2h-2zM78 66h2v2h-2z"/><path fill="#4f3" d="M80 62h2v2h-2zM82 62h2v2h-2z"/><path fill="#5f2" d="M84 62h2v2h-2z"/><path fill="#6f2" d="M86 62h2v2h-2zM86 64h2v2h-2zM88 64h2v2h-2zM88 66h2v2h-2z"/><path fill="#7f0" d="M90 62h2v2h-2zM92 62h2v2h-2zM90 64h2v2h-2zM92 64h2v2h-2zM94 64h2v2h-2zM92 66h2v2h-2z"/><path fill="#4f4" d="M80 64h2v2h-2zM80 66h2v2h-2zM80 68h2v2h-2z"/><path fill="#5f3" d="M82 64h2v2h-2zM84 64h2v2h-2zM84 66h2v2h-2z"/><path fill="#2f5" d="M76 66h2v2h-2zM76 68h2v2h-2zM76 70h2v2h-2zM76 72h2v2h-2z"/><path fill="#5f4" d="M82 66h2v2h-2zM82 68h2v2h-2zM84 68h2v2h-2zM82 70h2v2h-2zM84 70h2v2h-2z"/><path fill="#6f3" d="M86 66h2v2h-2zM86 68h2v2h-2zM88 68h2v2h-2zM88 70h2v2h-2z"/><path fill="#7f2" d="M90 66h2v2h-2zM90 68h2v2h-2zM92 68h2v2h-2zM92 70h2v2h-2z"/><path fill="#8f0" d="M94 66h2v2h-2zM96 66h2v2h-2zM94 68h2v2h-2zM96 68h2v2h-2zM98 68h2v2h-2zM96 70h2v2h-2zM98 70h2v2h-2z"/><path fill="#0fa" d="M0 68h2v2h-2zM2 68h2v2h-2zM0 70h2v2h-2zM2 70h2v2h-2zM4 70h2v2h-2zM6 70h2v2h-2zM0 72h2v2h-2zM2 72h2v2h-2zM4 72h2v2h-2zM6 72h2v2h-2zM8 72h2v2h-2zM10 72h2v2h-2zM0 74h2v2h-2zM2 74h2v2h-2zM4 74h2v2h-2zM6 74h2v2h-2zM8 74h2v2h-2zM10 74h2v2h-2zM12 74h2v2h-2zM14 74h2v2h-2zM0 76h2v2h-2zM2 76h2v2h-2zM4 76h2v2h-2zM6 76h2v2h-2zM8 76h2v2h-2zM10 76h2v2h-2zM12 76h2v2h-2zM14 76h2v2h-2zM16 76h2v2h-2zM18 76h2v2h-2zM0 78h2v2h-2zM2 78h2v2h-2zM4 78h2v2h-2zM6 78h2v2h-2zM8 78h2v2h-2zM10 78h2v2h-2zM12 78h2v2h-2zM14 78h2v2h-2zM16 78h2v2h-2zM18 78h2v2h-2zM20 78h2v2h-2zM0 80h2v2h-2zM2 80h2v2h-2zM4 80h2v2h-2zM6 80h2v2h-2zM8 80h2v2h-2zM10 80h2v2h-2zM12 80h2v2h-2zM14 80h2v2h-2zM16 80h2v2h-2zM18 80h2v2h-2zM20 80h2v2h-2zM22 80h2v2h-2zM24 80h2v2h-2zM4 82h2v2h-2zM6 82h2v2h-2zM8 82h2v2h-2zM10 82h2v2h-2zM12 82h2v2h-2zM14 82h2v2h-2zM16 82h2v2h-2zM18 82h2v2h-2zM20 82h2v2h-2zM22 82h2v2h-2zM24 82h2v2h-2zM26 82h2v2h-2zM28 82h2v2h-2zM8 84h2v2h-2zM10 84h2v2h-2zM12 84h2v2h-2zM14 84h2v2h-2zM16 84h2v2h-2zM18 84h2v2h-2zM20 84h2v2h-2zM22 84h2v2h-2zM24 84h2v2h-2zM26 84h2v2h-2zM28 84h2v2h-2zM30 84h2v2h-2zM32 84h2v2h-2zM12 86h2v2h-2zM14 86h2v2h-2zM16 86h2v2h-2zM18 86h2v2h-2zM20 86h2v2h-2zM22 86h2v2h-2zM24 86h2v2h-2zM26 86h2v2h-2zM28 86h2v2h-2zM30 86h2v2h-2zM32 86h2v2h-2zM34 86h2v2h-2zM36 86h2v2h-2zM16 88h2v2h-2zM18 88h2v2h-2zM20 88h2v2h-2zM22 88h2v2h-2zM24 88h2v2h-2zM26 88h2v2h-2zM28 88h2v2h-2zM30 88h2v2h-2zM32 88h2v2h-2zM34 88h2v2h-2zM36 88h2v2h-2zM38 88h2v2h-2zM40 88h2v2h-2zM20 90h2v2h-2zM22 90h2v2h-2zM24 90h2v2h-2zM26 90h2v2h-2zM28 90h2v2h-2zM30 90h2v2h-2zM32 90h2v2h-2zM34 90h2v2h-2zM36 90h2v2h-2zM38 90h2v2h-2zM40 90h2v2h-2zM42 90h2v2h-2zM26 92h2v2h-2zM28 92h2v2h-2zM30 92h2v2h-2zM32 92h2v2h-2zM34 92h2v2h-2zM36 92h2v2h-2zM38 92h2v2h-2zM40 92h2v2h-2zM42 92h2v2h-2zM44 92h2v2h-2zM46 92h2v2h-2zM30 94h2v2h-2zM32 94h2v2h-2zM34 94h2v2h-2zM36 94h2v2h-2zM38 94h2v2h-2zM40 94h2v2h-2zM42 94h2v2h-2zM44 94h2v2h-2zM46 94h2v2h-2zM48 94h2v2h-2zM50 94h2v2h-2zM34 96h2v2h-2zM36 96h2v2h-2zM38 96h2v2h-2zM40 96h2v2h-2zM42 96h2v2h-2zM44 96h2v2h-2zM46 96h2v2h-2zM48 96h2v2h-2zM50 96h2v2h-2zM52 96h2v2h-2zM54 96h2v2h-2zM38 98h2v2h-2zM40 98h2v2h-2zM42 98h2v2h-2zM44 98h2v2h-2zM46 98h2v2h-2zM48 98h2v2h-2zM50 98h2v2h-2zM52 98h2v2h-2zM54 98h2v2h-2zM56 98h2v2h-2zM58 98h2v2h-2zM42 100h2v2h-2zM44 100h2v2h-2zM46 100h2v2h-2zM48 100h2v2h-2zM50 100h2v2h-2zM52 100h2v2h-2zM54 100h2v2h-2zM56 100h2v2h-2zM58 100h2v2h-2zM60 100h2v2h-2zM62 100h2v2h-2zM46 102h2v2h-2zM48 102h2v2h-2zM50 102h2v2h-2zM52 102h2v2h-2zM54 102h2v2h-2zM56 102h2v2h-2zM58 102h2v2h-2zM60 102h2v2h-2zM62 102h2v2h-2zM64 102h2v2h-2zM66 102h2v2h-2zM50 104h2v2h-2zM52 104h2v2h-2zM54 104h2v2h-2zM56 104h2v2h-2zM58 104h2v2h-2zM60 104h2v2h-2zM62 104h2v2h-2zM64 104h2v2h-2zM66 104h2v2h-2zM68 104h2v2h-2zM54 106h2v2h-2zM56 106h2v2h-2zM58 106h2v2h-2zM60 106h2v2h-2zM62 106h2v2h-2zM64 106h2v2h-2zM66 106h2v2h-2zM68 106h2v2h-2zM58 108h2v2h-2zM60 108h2v2h-2zM62 108h2v2h-2zM64 108h2v2h-2zM66 108h2v2h-2zM68 108h2v2h-2zM62 110h2v2h-2zM64 110h2v2h-2zM66 110h2v2h-2zM68 110h2v2h-2zM68 112h2v2h-2z"/><path fill="#3f5" d="M78 68h2v2h-2zM78 70h2v2h-2z"/><path fill="#4f5" d="M80 70h2v2h-2zM78 72h2v2h-2zM80 72h2v2h-2zM78 74h2v2h-2zM80 74h2v2h-2z"/><path fill="#6f4" d="M86 70h2v2h-2zM84 72h2v2h-2zM86 72h2v2h-2zM86 74h2v2h-2z"/><path fill="#7f3" d="M90 70h2v2h-2zM90 72h2v2h-2zM92 72h2v2h-2z"/><path fill="#8f2" d="M94 70h2v2h-2zM94 72h2v2h-2zM96 72h2v2h-2zM96 74h2v2h-2z"/><path fill="#9f0" d="M100 70h2v2h-2zM98 72h2v2h-2zM100 72h2v2h-2zM102 72h2v2h-2zM100 74h2v2h-2zM102 74h2v2h-2z"/><path fill="#5f5" d="M82 72h2v2h-2zM82 74h2v2h-2zM82 76h2v2h-2z"/><path fill="#7f4" d="M88 72h2v2h-2zM88 74h2v2h-2zM90 74h2v2h-2zM90 76h2v2h-2z"/><path fill="#1f6" d="M74 74h2v2h-2zM74 76h2v2h-2z"/><path fill="#3f6" d="M76 74h2v2h-2zM76 76h2v2h-2zM76 78h2v2h-2zM76 80h2v2h-2z"/><path fill="#6f5" d="M84 74h2v2h-2zM84 76h2v2h-2zM86 76h2v2h-2zM84 78h2v2h-2zM86 78h2v2h-2z"/><path fill="#8f3" d="M92 74h2v2h-2zM94 74h2v2h-2zM94 76h2v2h-2zM96 76h2v2h-2z"/><path fill="#9f2" d="M98 74h2v2h-2zM98 76h2v2h-2zM100 76h2v2h-2z"/><path fill="#af0" d="M104 74h2v2h-2zM104 76h2v2h-2zM106 76h2v2h-2zM106 78h2v2h-2zM108 78h2v2h-2z"/><path fill="#4f6" d="M78 76h2v2h-2zM78 78h2v2h-2zM78 80h2v2h-2z"/><path fill="#5f6" d="M80 76h2v2h-2zM80 78h2v2h-2zM82 78h2v2h-2zM80 80h2v2h-2zM82 80h2v2h-2zM80 82h2v2h-2z"/><path fill="#7f5" d="M88 76h2v2h-2zM88 78h2v2h-2zM90 78h2v2h-2zM86 80h2v2h-2zM88 80h2v2h-2zM90 80h2v2h-2zM88 82h2v2h-2z"/><path fill="#8f4" d="M92 76h2v2h-2zM92 78h2v2h-2zM94 78h2v2h-2zM94 80h2v2h-2z"/><path fill="#9f1" d="M102 76h2v2h-2z"/><path fill="#2f6" d="M74 78h2v2h-2z"/><path fill="#9f4" d="M96 78h2v2h-2zM96 80h2v2h-2zM98 80h2v2h-2zM96 82h2v2h-2zM98 82h2v2h-2zM100 82h2v2h-2zM98 84h2v2h-2z"/><path fill="#9f3" d="M98 78h2v2h-2zM100 78h2v2h-2zM100 80h2v2h-2z"/><path fill="#af2" d="M102 78h2v2h-2zM104 80h2v2h-2zM106 82h2v2h-2z"/><path fill="#af1" d="M104 78h2v2h-2zM106 80h2v2h-2z"/><path fill="#2f7" d="M74 80h2v2h-2zM74 82h2v2h-2zM74 84h2v2h-2z"/><path fill="#6f6" d="M84 80h2v2h-2zM82 82h2v2h-2zM84 82h2v2h-2zM82 84h2v2h-2zM84 84h2v2h-2zM84 86h2v2h-2z"/><path fill="#8f5" d="M92 80h2v2h-2zM90 82h2v2h-2zM92 82h2v2h-2zM94 82h2v2h-2zM92 84h2v2h-2zM94 84h2v2h-2z"/><path fill="#af3" d="M102 80h2v2h-2zM102 82h2v2h-2zM104 82h2v2h-2zM104 84h2v2h-2zM106 84h2v2h-2z"/><path fill="#bf0" d="M108 80h2v2h-2zM110 80h2v2h-2zM110 82h2v2h-2zM112 82h2v2h-2zM112 84h2v2h-2z"/><path fill="#0fb" d="M0 82h2v2h-2zM2 82h2v2h-2zM0 84h2v2h-2zM2 84h2v2h-2zM4 84h2v2h-2zM6 84h2v2h-2zM0 86h2v2h-2zM2 86h2v2h-2zM4 86h2v2h-2zM6 86h2v2h-2zM8 86h2v2h-2zM10 86h2v2h-2zM0 88h2v2h-2zM2 88h2v2h-2zM4 88h2v2h-2zM6 88h2v2h-2zM8 88h2v2h-2zM10 88h2v2h-2zM12 88h2v2h-2zM14 88h2v2h-2zM0 90h2v2h-2zM2 90h2v2h-2zM4 90h2v2h-2zM6 90h2v2h-2zM8 90h2v2h-2zM10 90h2v2h-2zM12 90h2v2h-2zM14 90h2v2h-2zM16 90h2v2h-2zM18 90h2v2h-2zM0 92h2v2h-2zM2 92h2v2h-2zM4 92h2v2h-2zM6 92h2v2h-2zM8 92h2v2h-2zM10 92h2v2h-2zM12 92h2v2h-2zM14 92h2v2h-2zM16 92h2v2h-2zM18 92h2v2h-2zM20 92h2v2h-2zM22 92h2v2h-2zM24 92h2v2h-2zM0 94h2v2h-2zM2 94h2v2h-2zM4 94h2v2h-2zM6 94h2v2h-2zM8 94h2v2h-2zM10 94h2v2h-2zM12 94h2v2h-2zM14 94h2v2h-2zM16 94h2v2h-2zM18 94h2v2h-2zM20 94h2v2h-2zM22 94h2v2h-2zM24 94h2v2h-2zM26 94h2v2h-2zM28 94h2v2h-2zM4 96h2v2h-2zM6 96h2v2h-2zM8 96h2v2h-2zM10 96h2v2h-2zM12 96h2v2h-2zM14 96h2v2h-2zM16 96h2v2h-2zM18 96h2v2h-2zM20 96h2v2h-2zM22 96h2v2h-2zM24 96h2v2h-2zM26 96h2v2h-2zM28 96h2v2h-2zM30 96h2v2h-2zM32 96h2v2h-2zM8 98h2v2h-2zM10 98h2v2h-2zM12 98h2v2h-2zM14 98h2v2h-2zM16 98h2v2h-2zM18 98h2v2h-2zM20 98h2v2h-2zM22 98h2v2h-2zM24 98h2v2h-2zM26 98h2v2h-2zM28 98h2v2h-2zM30 98h2v2h-2zM32 98h2v2h-2zM34 98h2v2h-2zM36 98h2v2h-2zM14 100h2v2h-2zM16 100h2v2h-2zM18 100h2v2h-2zM20 100h2v2h-2zM22 100h2v2h-2zM24 100h2v2h-2zM26 100h2v2h-2zM28 100h2v2h-2zM30 100h2v2h-2zM32 100h2v2h-2zM34 100h2v2h-2zM36 100h2v2h-2zM38 100h2v2h-2zM40 100h2v2h-2zM18 102h2v2h-2zM20 102h2v2h-2zM22 102h2v2h-2zM24 102h2v2h-2zM26 102h2v2h-2zM28 102h2v2h-2zM30 102h2v2h-2zM32 102h2v2h-2zM34 102h2v2h-2zM36 102h2v2h-2zM38 102h2v2h-2zM40 102h2v2h-2zM42 102h2v2h-2zM44 102h2v2h-2zM24 104h2v2h-2zM26 104h2v2h-2zM28 104h2v2h-2zM30 104h2v2h-2zM32 104h2v2h-2zM34 104h2v2h-2zM36 104h2v2h-2zM38 104h2v2h-2zM40 104h2v2h-2zM42 104h2v2h-2zM44 104h2v2h-2zM46 104h2v2h-2zM48 104h2v2h-2zM28 106h2v2h-2zM30 106h2v2h-2zM32 106h2v2h-2zM34 106h2v2h-2zM36 106h2v2h-2zM38 106h2v2h-2zM40 106h2v2h-2zM42 106h2v2h-2zM44 106h2v2h-2zM46 106h2v2h-2zM48 106h2v2h-2zM50 106h2v2h-2zM52 106h2v2h-2zM34 108h2v2h-2zM36 108h2v2h-2zM38 108h2v2h-2zM40 108h2v2h-2zM42 108h2v2h-2zM44 108h2v2h-2zM46 108h2v2h-2zM48 108h2v2h-2zM50 108h2v2h-2zM52 108h2v2h-2zM54 108h2v2h-2zM56 108h2v2h-2zM38 110h2v2h-2zM40 110h2v2h-2zM42 110h2v2h-2zM44 110h2v2h-2zM46 110h2v2h-2zM48 110h2v2h-2zM50 110h2v2h-2zM52 110h2v2h-2zM54 110h2v2h-2zM56 110h2v2h-2zM58 110h2v2h-2zM60 110h2v2h-2zM44 112h2v2h-2zM46 112h2v2h-2zM48 112h2v2h-2zM50 112h2v2h-2zM52 112h2v2h-2zM54 112h2v2h-2zM56 112h2v2h-2zM58 112h2v2h-2zM60 112h2v2h-2zM62 112h2v2h-2zM64 112h2v2h-2zM66 112h2v2h-2zM48 114h2v2h-2zM50 114h2v2h-2zM52 114h2v2h-2zM54 114h2v2h-2zM56 114h2v2h-2zM58 114h2v2h-2zM60 114h2v2h-2zM62 114h2v2h-2zM64 114h2v2h-2zM66 114h2v2h-2zM54 116h2v2h-2zM56 116h2v2h-2zM58 116h2v2h-2zM60 116h2v2h-2zM62 116h2v2h-2zM64 116h2v2h-2zM66 116h2v2h-2zM58 118h2v2h-2zM60 118h2v2h-2zM62 118h2v2h-2zM64 118h2v2h-2zM66 118h2v2h-2zM64 120h2v2h-2zM66 120h2v2h-2z"/><path fill="#3f7" d="M76 82h2v2h-2zM74 86h2v2h-2z"/><path fill="#4f7" d="M78 82h2v2h-2zM76 84h2v2h-2zM78 84h2v2h-2zM76 86h2v2h-2zM76 88h2v2h-2z"/><path fill="#7f6" d="M86 82h2v2h-2zM86 84h2v2h-2zM88 84h2v2h-2zM86 86h2v2h-2zM88 86h2v2h-2zM88 88h2v2h-2z"/><path fill="#bf1" d="M108 82h2v2h-2zM110 84h2v2h-2zM112 86h2v2h-2z"/><path fill="#5f7" d="M80 84h2v2h-2zM78 86h2v2h-2zM80 86h2v2h-2zM78 88h2v2h-2zM80 88h2v2h-2zM78 90h2v2h-2z"/><path fill="#8f6" d="M90 84h2v2h-2zM90 86h2v2h-2zM92 86h2v2h-2zM90 88h2v2h-2zM92 88h2v2h-2zM90 90h2v2h-2zM92 90h2v2h-2z"/><path fill="#9f5" d="M96 84h2v2h-2zM94 86h2v2h-2zM96 86h2v2h-2zM98 86h2v2h-2zM96 88h2v2h-2zM98 88h2v2h-2z"/><path fill="#af4" d="M100 84h2v2h-2zM102 84h2v2h-2zM100 86h2v2h-2zM102 86h2v2h-2zM104 86h2v2h-2zM104 88h2v2h-2z"/><path fill="#bf2" d="M108 84h2v2h-2zM110 86h2v2h-2z"/><path fill="#cf0" d="M114 84h2v2h-2zM114 86h2v2h-2zM116 86h2v2h-2zM116 88h2v2h-2zM118 88h2v2h-2z"/><path fill="#6f7" d="M82 86h2v2h-2zM82 88h2v2h-2zM80 90h2v2h-2zM82 90h2v2h-2zM82 92h2v2h-2z"/><path fill="#bf3" d="M106 86h2v2h-2zM108 86h2v2h-2zM108 88h2v2h-2zM110 88h2v2h-2zM110 90h2v2h-2z"/><path fill="#1f8" d="M72 88h2v2h-2zM72 90h2v2h-2z"/><path fill="#3f8" d="M74 88h2v2h-2zM74 90h2v2h-2zM74 92h2v2h-2zM74 94h2v2h-2z"/><path fill="#7f7" d="M84 88h2v2h-2zM86 88h2v2h-2zM84 90h2v2h-2zM86 90h2v2h-2zM84 92h2v2h-2zM86 92h2v2h-2zM84 94h2v2h-2zM86 94h2v2h-2z"/><path fill="#9f6" d="M94 88h2v2h-2zM94 90h2v2h-2zM96 90h2v2h-2zM92 92h2v2h-2zM94 92h2v2h-2zM96 92h2v2h-2zM96 94h2v2h-2z"/><path fill="#af5" d="M100 88h2v2h-2zM102 88h2v2h-2zM98 90h2v2h-2zM100 90h2v2h-2zM102 90h2v2h-2zM102 92h2v2h-2z"/><path fill="#bf4" d="M106 88h2v2h-2zM106 90h2v2h-2zM108 90h2v2h-2zM108 92h2v2h-2z"/><path fill="#cf2" d="M112 88h2v2h-2zM114 90h2v2h-2zM116 92h2v2h-2z"/><path fill="#cf1" d="M114 88h2v2h-2zM116 90h2v2h-2z"/><path fill="#4f8" d="M76 90h2v2h-2zM76 92h2v2h-2zM76 94h2v2h-2zM74 96h2v2h-2z"/><path fill="#8f7" d="M88 90h2v2h-2zM88 92h2v2h-2zM90 92h2v2h-2zM88 94h2v2h-2zM90 94h2v2h-2zM88 96h2v2h-2zM90 96h2v2h-2zM90 98h2v2h-2z"/><path fill="#bf5" d="M104 90h2v2h-2zM104 92h2v2h-2zM106 92h2v2h-2zM104 94h2v2h-2zM106 94h2v2h-2zM108 94h2v2h-2zM106 96h2v2h-2zM108 96h2v2h-2z"/><path fill="#cf3" d="M112 90h2v2h-2zM112 92h2v2h-2zM114 92h2v2h-2zM114 94h2v2h-2z"/><path fill="#df0" d="M118 90h2v2h-2zM120 90h2v2h-2zM120 92h2v2h-2zM122 92h2v2h-2zM122 94h2v2h-2z"/><path fill="#2f8" d="M72 92h2v2h-2zM72 94h2v2h-2z"/><path fill="#5f8" d="M78 92h2v2h-2zM78 94h2v2h-2zM76 96h2v2h-2zM78 96h2v2h-2zM76 98h2v2h-2zM78 98h2v2h-2z"/><path fill="#6f8" d="M80 92h2v2h-2zM80 94h2v2h-2zM82 94h2v2h-2zM80 96h2v2h-2zM82 96h2v2h-2zM80 98h2v2h-2zM80 100h2v2h-2z"/><path fill="#af6" d="M98 92h2v2h-2zM100 92h2v2h-2zM98 94h2v2h-2zM100 94h2v2h-2zM102 94h2v2h-2zM98 96h2v2h-2zM100 96h2v2h-2zM100 98h2v2h-2z"/><path fill="#cf4" d="M110 92h2v2h-2zM110 94h2v2h-2zM112 94h2v2h-2zM112 96h2v2h-2zM114 96h2v2h-2z"/><path fill="#df1" d="M118 92h2v2h-2zM120 94h2v2h-2z"/><path fill="#9f7" d="M92 94h2v2h-2zM94 94h2v2h-2zM92 96h2v2h-2zM94 96h2v2h-2zM96 96h2v2h-2zM92 98h2v2h-2zM94 98h2v2h-2zM92 100h2v2h-2zM94 100h2v2h-2z"/><path fill="#df3" d="M116 94h2v2h-2zM116 96h2v2h-2zM118 96h2v2h-2zM120 98h2v2h-2z"/><path fill="#df2" d="M118 94h2v2h-2zM120 96h2v2h-2z"/><path fill="#ef0" d="M124 94h2v2h-2zM124 96h2v2h-2zM126 96h2v2h-2zM126 98h2v2h-2zM128 98h2v2h-2z"/><path fill="#0fc" d="M0 96h2v2h-2zM2 96h2v2h-2zM0 98h2v2h-2zM2 98h2v2h-2zM4 98h2v2h-2zM6 98h2v2h-2zM0 100h2v2h-2zM2 100h2v2h-2zM4 100h2v2h-2zM6 100h2v2h-2zM8 100h2v2h-2zM10 100h2v2h-2zM12 100h2v2h-2zM2 102h2v2h-2zM4 102h2v2h-2zM6 102h2v2h-2zM8 102h2v2h-2zM10 102h2v2h-2zM12 102h2v2h-2zM14 102h2v2h-2zM16 102h2v2h-2zM2 104h2v2h-2zM4 104h2v2h-2zM6 104h2v2h-2zM8 104h2v2h-2zM10 104h2v2h-2zM12 104h2v2h-2zM14 104h2v2h-2zM16 104h2v2h-2zM18 104h2v2h-2zM20 104h2v2h-2zM22 104h2v2h-2zM2 106h2v2h-2zM4 106h2v2h-2zM6 106h2v2h-2zM8 106h2v2h-2zM10 106h2v2h-2zM12 106h2v2h-2zM14 106h2v2h-2zM16 106h2v2h-2zM18 106h2v2h-2zM20 106h2v2h-2zM22 106h2v2h-2zM24 106h2v2h-2zM26 106h2v2h-2zM2 108h2v2h-2zM4 108h2v2h-2zM6 108h2v2h-2zM8 108h2v2h-2zM10 108h2v2h-2zM12 108h2v2h-2zM14 108h2v2h-2zM16 108h2v2h-2zM18 108h2v2h-2zM20 108h2v2h-2zM22 108h2v2h-2zM24 108h2v2h-2zM26 108h2v2h-2zM28 108h2v2h-2zM30 108h2v2h-2zM32 108h2v2h-2zM6 110h2v2h-2zM8 110h2v2h-2zM10 110h2v2h-2zM12 110h2v2h-2zM14 110h2v2h-2zM16 110h2v2h-2zM18 110h2v2h-2zM20 110h2v2h-2zM22 110h2v2h-2zM24 110h2v2h-2zM26 110h2v2h-2zM28 110h2v2h-2zM30 110h2v2h-2zM32 110h2v2h-2zM34 110h2v2h-2zM36 110h2v2h-2zM12 112h2v2h-2zM14 112h2v2h-2zM16 112h2v2h-2zM18 112h2v2h-2zM20 112h2v2h-2zM22 112h2v2h-2zM24 112h2v2h-2zM26 112h2v2h-2zM28 112h2v2h-2zM30 112h2v2h-2zM32 112h2v2h-2zM34 112h2v2h-2zM36 112h2v2h-2zM38 112h2v2h-2zM40 112h2v2h-2zM42 112h2v2h-2zM18 114h2v2h-2zM20 114h2v2h-2zM22 114h2v2h-2zM24 114h2v2h-2zM26 114h2v2h-2zM28 114h2v2h-2zM30 114h2v2h-2zM32 114h2v2h-2zM34 114h2v2h-2zM36 114h2v2h-2zM38 114h2v2h-2zM40 114h2v2h-2zM42 114h2v2h-2zM44 114h2v2h-2zM46 114h2v2h-2zM24 116h2v2h-2zM26 116h2v2h-2zM28 116h2v2h-2zM30 116h2v2h-2zM32 116h2v2h-2zM34 116h2v2h-2zM36 116h2v2h-2zM38 116h2v2h-2zM40 116h2v2h-2zM42 116h2v2h-2zM44 116h2v2h-2zM46 116h2v2h-2zM48 116h2v2h-2zM50 116h2v2h-2zM52 116h2v2h-2zM30 118h2v2h-2zM32 118h2v2h-2zM34 118h2v2h-2zM36 118h2v2h-2zM38 118h2v2h-2zM40 118h2v2h-2zM42 118h2v2h-2zM44 118h2v2h-2zM46 118h2v2h-2zM48 118h2v2h-2zM50 118h2v2h-2zM52 118h2v2h-2zM54 118h2v2h-2zM56 118h2v2h-2zM36 120h2v2h-2zM38 120h2v2h-2zM40 120h2v2h-2zM42 120h2v2h-2zM44 120h2v2h-2zM46 120h2v2h-2zM48 120h2v2h-2zM50 120h2v2h-2zM52 120h2v2h-2zM54 120h2v2h-2zM56 120h2v2h-2zM58 120h2v2h-2zM60 120h2v2h-2zM62 120h2v2h-2zM40 122h2v2h-2zM42 122h2v2h-2zM44 122h2v2h-2zM46 122h2v2h-2zM48 122h2v2h-2zM50 122h2v2h-2zM52 122h2v2h-2zM54 122h2v2h-2zM56 122h2v2h-2zM58 122h2v2h-2zM60 122h2v2h-2zM62 122h2v2h-2zM64 122h2v2h-2zM66 122h2v2h-2zM46 124h2v2h-2zM48 124h2v2h-2zM50 124h2v2h-2zM52 124h2v2h-2zM54 124h2v2h-2zM56 124h2v2h-2zM58 124h2v2h-2zM60 124h2v2h-2zM62 124h2v2h-2zM64 124h2v2h-2zM66 124h2v2h-2zM52 126h2v2h-2zM54 126h2v2h-2zM56 126h2v2h-2zM58 126h2v2h-2zM60 126h2v2h-2zM62 126h2v2h-2zM64 126h2v2h-2zM58 128h2v2h-2zM60 128h2v2h-2zM62 128h2v2h-2zM64 128h2v2h-2zM64 130h2v2h-2z"/><path fill="#2f9" d="M72 96h2v2h-2zM70 104h2v2h-2z"/><path fill="#7f8" d="M84 96h2v2h-2zM86 96h2v2h-2zM82 98h2v2h-2zM84 98h2v2h-2zM82 100h2v2h-2zM84 100h2v2h-2zM84 102h2v2h-2z"/><path fill="#bf6" d="M102 96h2v2h-2zM104 96h2v2h-2zM102 98h2v2h-2zM104 98h2v2h-2zM106 98h2v2h-2zM104 100h2v2h-2zM106 100h2v2h-2z"/><path fill="#cf5" d="M110 96h2v2h-2zM108 98h2v2h-2zM110 98h2v2h-2zM112 98h2v2h-2zM110 100h2v2h-2zM112 100h2v2h-2z"/><path fill="#ef1" d="M122 96h2v2h-2zM124 98h2v2h-2zM126 100h2v2h-2z"/><path fill="#3f9" d="M72 98h2v2h-2zM72 100h2v2h-2zM72 102h2v2h-2zM72 104h2v2h-2z"/><path fill="#4f9" d="M74 98h2v2h-2zM74 100h2v2h-2zM74 102h2v2h-2zM74 104h2v2h-2zM74 106h2v2h-2z"/><path fill="#8f8" d="M86 98h2v2h-2zM88 98h2v2h-2zM86 100h2v2h-2zM88 100h2v2h-2zM86 102h2v2h-2zM88 102h2v2h-2zM86 104h2v2h-2zM88 104h2v2h-2z"/><path fill="#af7" d="M96 98h2v2h-2zM98 98h2v2h-2zM96 100h2v2h-2zM98 100h2v2h-2zM100 100h2v2h-2zM96 102h2v2h-2zM98 102h2v2h-2zM98 104h2v2h-2z"/><path fill="#df4" d="M114 98h2v2h-2zM116 98h2v2h-2zM118 98h2v2h-2zM116 100h2v2h-2zM118 100h2v2h-2z"/><path fill="#ef2" d="M122 98h2v2h-2zM124 100h2v2h-2zM126 102h2v2h-2z"/><path fill="#1f9" d="M70 100h2v2h-2zM70 102h2v2h-2z"/><path fill="#5f9" d="M76 100h2v2h-2zM76 102h2v2h-2zM76 104h2v2h-2zM76 106h2v2h-2z"/><path fill="#6f9" d="M78 100h2v2h-2zM78 102h2v2h-2zM80 102h2v2h-2zM78 104h2v2h-2zM80 104h2v2h-2zM78 106h2v2h-2zM78 108h2v2h-2z"/><path fill="#9f8" d="M90 100h2v2h-2zM90 102h2v2h-2zM92 102h2v2h-2zM94 102h2v2h-2zM90 104h2v2h-2zM92 104h2v2h-2zM90 106h2v2h-2zM92 106h2v2h-2zM92 108h2v2h-2z"/><path fill="#bf7" d="M102 100h2v2h-2zM100 102h2v2h-2zM102 102h2v2h-2zM104 102h2v2h-2zM100 104h2v2h-2zM102 104h2v2h-2zM104 104h2v2h-2zM102 106h2v2h-2zM104 106h2v2h-2z"/><path fill="#cf6" d="M108 100h2v2h-2zM106 102h2v2h-2zM108 102h2v2h-2zM110 102h2v2h-2zM112 102h2v2h-2zM108 104h2v2h-2zM110 104h2v2h-2z"/><path fill="#df5" d="M114 100h2v2h-2zM114 102h2v2h-2zM116 102h2v2h-2zM118 102h2v2h-2zM116 104h2v2h-2zM118 104h2v2h-2z"/><path fill="#ef4" d="M120 100h2v2h-2zM120 102h2v2h-2zM122 102h2v2h-2zM122 104h2v2h-2zM124 104h2v2h-2zM124 106h2v2h-2z"/><path fill="#ef3" d="M122 100h2v2h-2zM124 102h2v2h-2z"/><path fill="#ff0" d="M128 100h2v2h-2zM130 100h2v2h-2zM130 102h2v2h-2zM132 102h2v2h-2zM132 104h2v2h-2z"/><path fill="#7f9" d="M82 102h2v2h-2zM82 104h2v2h-2zM84 104h2v2h-2zM80 106h2v2h-2zM82 106h2v2h-2zM80 108h2v2h-2zM82 108h2v2h-2zM82 110h2v2h-2z"/><path fill="#ff1" d="M128 102h2v2h-2zM130 104h2v2h-2z"/><path fill="#af8" d="M94 104h2v2h-2zM96 104h2v2h-2zM94 106h2v2h-2zM96 106h2v2h-2zM98 106h2v2h-2zM94 108h2v2h-2zM96 108h2v2h-2zM96 110h2v2h-2z"/><path fill="#cf7" d="M106 104h2v2h-2zM106 106h2v2h-2zM108 106h2v2h-2zM110 106h2v2h-2zM104 108h2v2h-2zM106 108h2v2h-2zM108 108h2v2h-2zM108 110h2v2h-2z"/><path fill="#df6" d="M112 104h2v2h-2zM114 104h2v2h-2zM112 106h2v2h-2zM114 106h2v2h-2zM116 106h2v2h-2zM114 108h2v2h-2zM116 108h2v2h-2z"/><path fill="#ef5" d="M120 104h2v2h-2zM118 106h2v2h-2zM120 106h2v2h-2zM122 106h2v2h-2zM120 108h2v2h-2zM122 108h2v2h-2z"/><path fill="#ff3" d="M126 104h2v2h-2zM128 106h2v2h-2zM130 108h2v2h-2z"/><path fill="#ff2" d="M128 104h2v2h-2zM130 106h2v2h-2z"/><path fill="#fe0" d="M134 104h2v2h-2zM134 106h2v2h-2zM136 106h2v2h-2zM136 108h2v2h-2zM138 108h2v2h-2z"/><path fill="#2fa" d="M70 106h2v2h-2zM70 108h2v2h-2z"/><path fill="#3fa" d="M72 106h2v2h-2zM70 110h2v2h-2zM70 112h2v2h-2z"/><path fill="#8f9" d="M84 106h2v2h-2zM86 106h2v2h-2zM88 106h2v2h-2zM84 108h2v2h-2zM86 108h2v2h-2zM84 110h2v2h-2zM86 110h2v2h-2zM86 112h2v2h-2z"/><path fill="#bf8" d="M100 106h2v2h-2zM98 108h2v2h-2zM100 108h2v2h-2zM102 108h2v2h-2zM98 110h2v2h-2zM100 110h2v2h-2zM102 110h2v2h-2zM100 112h2v2h-2z"/><path fill="#ff4" d="M126 106h2v2h-2zM126 108h2v2h-2zM128 108h2v2h-2zM128 110h2v2h-2z"/><path fill="#fe1" d="M132 106h2v2h-2zM134 108h2v2h-2zM136 110h2v2h-2z"/><path fill="#4fa" d="M72 108h2v2h-2zM72 110h2v2h-2zM72 112h2v2h-2zM72 114h2v2h-2z"/><path fill="#5fa" d="M74 108h2v2h-2zM76 108h2v2h-2zM74 110h2v2h-2zM74 112h2v2h-2zM74 114h2v2h-2z"/><path fill="#9f9" d="M88 108h2v2h-2zM90 108h2v2h-2zM88 110h2v2h-2zM90 110h2v2h-2zM88 112h2v2h-2zM90 112h2v2h-2zM90 114h2v2h-2z"/><path fill="#df7" d="M110 108h2v2h-2zM112 108h2v2h-2zM110 110h2v2h-2zM112 110h2v2h-2zM114 110h2v2h-2zM110 112h2v2h-2zM112 112h2v2h-2zM114 112h2v2h-2z"/><path fill="#ef6" d="M118 108h2v2h-2zM116 110h2v2h-2zM118 110h2v2h-2zM120 110h2v2h-2zM120 112h2v2h-2z"/><path fill="#ff5" d="M124 108h2v2h-2zM124 110h2v2h-2zM126 110h2v2h-2zM126 112h2v2h-2z"/><path fill="#fe2" d="M132 108h2v2h-2zM134 110h2v2h-2z"/><path fill="#0fd" d="M2 110h2v2h-2zM4 110h2v2h-2zM2 112h2v2h-2zM4 112h2v2h-2zM6 112h2v2h-2zM8 112h2v2h-2zM10 112h2v2h-2zM2 114h2v2h-2zM4 114h2v2h-2zM6 114h2v2h-2zM8 114h2v2h-2zM10 114h2v2h-2zM12 114h2v2h-2zM14 114h2v2h-2zM16 114h2v2h-2zM2 116h2v2h-2zM4 116h2v2h-2zM6 116h2v2h-2zM8 116h2v2h-2zM10 116h2v2h-2zM12 116h2v2h-2zM14 116h2v2h-2zM16 116h2v2h-2zM18 116h2v2h-2zM20 116h2v2h-2zM22 116h2v2h-2zM2 118h2v2h-2zM4 118h2v2h-2zM6 118h2v2h-2zM8 118h2v2h-2zM10 118h2v2h-2zM12 118h2v2h-2zM14 118h2v2h-2zM16 118h2v2h-2zM18 118h2v2h-2zM20 118h2v2h-2zM22 118h2v2h-2zM24 118h2v2h-2zM26 118h2v2h-2zM28 118h2v2h-2zM2 120h2v2h-2zM4 120h2v2h-2zM6 120h2v2h-2zM8 120h2v2h-2zM10 120h2v2h-2zM12 120h2v2h-2zM14 120h2v2h-2zM16 120h2v2h-2zM18 120h2v2h-2zM20 120h2v2h-2zM22 120h2v2h-2zM24 120h2v2h-2zM26 120h2v2h-2zM28 120h2v2h-2zM30 120h2v2h-2zM32 120h2v2h-2zM34 120h2v2h-2zM4 122h2v2h-2zM6 122h2v2h-2zM8 122h2v2h-2zM10 122h2v2h-2zM12 122h2v2h-2zM14 122h2v2h-2zM16 122h2v2h-2zM18 122h2v2h-2zM20 122h2v2h-2zM22 122h2v2h-2zM24 122h2v2h-2zM26 122h2v2h-2zM28 122h2v2h-2zM30 122h2v2h-2zM32 122h2v2h-2zM34 122h2v2h-2zM36 122h2v2h-2zM38 122h2v2h-2zM10 124h2v2h-2zM12 124h2v2h-2zM14 124h2v2h-2zM16 124h2v2h-2zM18 124h2v2h-2zM20 124h2v2h-2zM22 124h2v2h-2zM24 124h2v2h-2zM26 124h2v2h-2zM28 124h2v2h-2zM30 124h2v2h-2zM32 124h2v2h-2zM34 124h2v2h-2zM36 124h2v2h-2zM38 124h2v2h-2zM40 124h2v2h-2zM42 124h2v2h-2zM44 124h2v2h-2zM18 126h2v2h-2zM20 126h2v2h-2zM22 126h2v2h-2zM24 126h2v2h-2zM26 126h2v2h-2zM28 126h2v2h-2zM30 126h2v2h-2zM32 126h2v2h-2zM34 126h2v2h-2zM36 126h2v2h-2zM38 126h2v2h-2zM40 126h2v2h-2zM42 126h2v2h-2zM44 126h2v2h-2zM46 126h2v2h-2zM48 126h2v2h-2zM50 126h2v2h-2zM26 128h2v2h-2zM28 128h2v2h-2zM30 128h2v2h-2zM32 128h2v2h-2zM34 128h2v2h-2zM36 128h2v2h-2zM38 128h2v2h-2zM40 128h2v2h-2zM42 128h2v2h-2zM44 128h2v2h-2zM46 128h2v2h-2zM48 128h2v2h-2zM50 128h2v2h-2zM52 128h2v2h-2zM54 128h2v2h-2zM56 128h2v2h-2zM32 130h2v2h-2zM34 130h2v2h-2zM36 130h2v2h-2zM38 130h2v2h-2zM40 130h2v2h-2zM42 130h2v2h-2zM44 130h2v2h-2zM46 130h2v2h-2zM48 130h2v2h-2zM50 130h2v2h-2zM52 130h2v2h-2zM54 130h2v2h-2zM56 130h2v2h-2zM58 130h2v2h-2zM60 130h2v2h-2zM62 130h2v2h-2zM40 132h2v2h-2zM42 132h2v2h-2zM44 132h2v2h-2zM46 132h2v2h-2zM48 132h2v2h-2zM50 132h2v2h-2zM52 132h2v2h-2zM54 132h2v2h-2zM56 132h2v2h-2zM58 132h2v2h-2zM60 132h2v2h-2zM62 132h2v2h-2zM64 132h2v2h-2zM46 134h2v2h-2zM48 134h2v2h-2zM50 134h2v2h-2zM52 134h2v2h-2zM54 134h2v2h-2zM56 134h2v2h-2zM58 134h2v2h-2zM60 134h2v2h-2zM62 134h2v2h-2zM64 134h2v2h-2zM54 136h2v2h-2zM56 136h2v2h-2zM58 136h2v2h-2zM60 136h2v2h-2zM62 136h2v2h-2zM64 136h2v2h-2zM62 138h2v2h-2zM64 138h2v2h-2z"/><path fill="#6fa" d="M76 110h2v2h-2zM78 110h2v2h-2zM76 112h2v2h-2zM78 112h2v2h-2zM76 114h2v2h-2zM78 114h2v2h-2zM76 116h2v2h-2z"/><path fill="#7fa" d="M80 110h2v2h-2zM80 112h2v2h-2zM82 112h2v2h-2zM80 114h2v2h-2zM78 116h2v2h-2zM80 116h2v2h-2zM80 118h2v2h-2z"/><path fill="#af9" d="M92 110h2v2h-2zM94 110h2v2h-2zM92 112h2v2h-2zM94 112h2v2h-2zM96 112h2v2h-2zM92 114h2v2h-2zM94 114h2v2h-2zM92 116h2v2h-2zM94 116h2v2h-2z"/><path fill="#cf8" d="M104 110h2v2h-2zM106 110h2v2h-2zM102 112h2v2h-2zM104 112h2v2h-2zM106 112h2v2h-2zM102 114h2v2h-2zM104 114h2v2h-2zM106 114h2v2h-2zM106 116h2v2h-2z"/><path fill="#ff6" d="M122 110h2v2h-2zM122 112h2v2h-2zM124 112h2v2h-2zM122 114h2v2h-2zM124 114h2v2h-2zM126 114h2v2h-2zM124 116h2v2h-2z"/><path fill="#fe4" d="M130 110h2v2h-2zM130 112h2v2h-2zM132 112h2v2h-2zM132 114h2v2h-2zM134 114h2v2h-2z"/><path fill="#fe3" d="M132 110h2v2h-2zM134 112h2v2h-2z"/><path fill="#fd0" d="M138 110h2v2h-2zM140 110h2v2h-2zM140 112h2v2h-2zM142 112h2v2h-2zM142 114h2v2h-2z"/><path fill="#8fa" d="M84 112h2v2h-2zM82 114h2v2h-2zM84 114h2v2h-2zM82 116h2v2h-2zM84 116h2v2h-2zM82 118h2v2h-2zM84 118h2v2h-2zM84 120h2v2h-2z"/><path fill="#bf9" d="M98 112h2v2h-2zM96 114h2v2h-2zM98 114h2v2h-2zM100 114h2v2h-2zM96 116h2v2h-2zM98 116h2v2h-2zM100 116h2v2h-2zM96 118h2v2h-2zM98 118h2v2h-2z"/><path fill="#df8" d="M108 112h2v2h-2zM108 114h2v2h-2zM110 114h2v2h-2zM112 114h2v2h-2zM108 116h2v2h-2zM110 116h2v2h-2zM112 116h2v2h-2zM110 118h2v2h-2z"/><path fill="#ef7" d="M116 112h2v2h-2zM118 112h2v2h-2zM114 114h2v2h-2zM116 114h2v2h-2zM118 114h2v2h-2zM116 116h2v2h-2zM118 116h2v2h-2z"/><path fill="#fe5" d="M128 112h2v2h-2zM128 114h2v2h-2zM130 114h2v2h-2zM128 116h2v2h-2zM130 116h2v2h-2zM132 116h2v2h-2zM130 118h2v2h-2zM132 118h2v2h-2z"/><path fill="#fd2" d="M136 112h2v2h-2zM138 114h2v2h-2zM140 116h2v2h-2z"/><path fill="#fd1" d="M138 112h2v2h-2zM140 114h2v2h-2zM142 116h2v2h-2z"/><path fill="#1fb" d="M68 114h2v2h-2z"/><path fill="#3fb" d="M70 114h2v2h-2zM70 116h2v2h-2zM68 122h2v2h-2z"/><path fill="#9fa" d="M86 114h2v2h-2zM88 114h2v2h-2zM86 116h2v2h-2zM88 116h2v2h-2zM86 118h2v2h-2zM88 118h2v2h-2zM86 120h2v2h-2zM88 120h2v2h-2z"/><path fill="#ff7" d="M120 114h2v2h-2zM120 116h2v2h-2zM122 116h2v2h-2zM120 118h2v2h-2zM122 118h2v2h-2zM124 118h2v2h-2zM122 120h2v2h-2zM122 122h2v2h-2z"/><path fill="#fd3" d="M136 114h2v2h-2zM138 116h2v2h-2zM140 118h2v2h-2z"/><path fill="#fc0" d="M144 114h2v2h-2zM144 116h2v2h-2zM146 116h2v2h-2zM146 118h2v2h-2zM148 118h2v2h-2zM148 120h2v2h-2zM150 120h2v2h-2z"/><path fill="#2fb" d="M68 116h2v2h-2zM68 118h2v2h-2zM68 120h2v2h-2z"/><path fill="#4fb" d="M72 116h2v2h-2zM70 118h2v2h-2zM70 120h2v2h-2zM70 122h2v2h-2z"/><path fill="#5fb" d="M74 116h2v2h-2zM72 118h2v2h-2zM74 118h2v2h-2zM72 120h2v2h-2zM72 122h2v2h-2zM72 124h2v2h-2z"/><path fill="#afa" d="M90 116h2v2h-2zM90 118h2v2h-2zM92 118h2v2h-2zM94 118h2v2h-2zM90 120h2v2h-2zM92 120h2v2h-2zM88 122h2v2h-2zM90 122h2v2h-2zM92 122h2v2h-2z"/><path fill="#cf9" d="M102 116h2v2h-2zM104 116h2v2h-2zM100 118h2v2h-2zM102 118h2v2h-2zM104 118h2v2h-2zM100 120h2v2h-2zM102 120h2v2h-2zM104 120h2v2h-2z"/><path fill="#ef8" d="M114 116h2v2h-2zM112 118h2v2h-2zM114 118h2v2h-2zM116 118h2v2h-2zM112 120h2v2h-2zM114 120h2v2h-2zM116 120h2v2h-2z"/><path fill="#fe6" d="M126 116h2v2h-2zM126 118h2v2h-2zM128 118h2v2h-2zM126 120h2v2h-2zM128 120h2v2h-2zM130 120h2v2h-2zM128 122h2v2h-2z"/><path fill="#fd4" d="M134 116h2v2h-2zM136 116h2v2h-2zM134 118h2v2h-2zM136 118h2v2h-2zM138 118h2v2h-2zM136 120h2v2h-2zM138 120h2v2h-2zM138 122h2v2h-2z"/><path fill="#6fb" d="M76 118h2v2h-2zM74 120h2v2h-2zM76 120h2v2h-2zM74 122h2v2h-2zM76 122h2v2h-2zM74 124h2v2h-2z"/><path fill="#7fb" d="M78 118h2v2h-2zM78 120h2v2h-2zM80 120h2v2h-2zM78 122h2v2h-2zM76 124h2v2h-2zM78 124h2v2h-2zM78 126h2v2h-2z"/><path fill="#df9" d="M106 118h2v2h-2zM108 118h2v2h-2zM106 120h2v2h-2zM108 120h2v2h-2zM110 120h2v2h-2zM104 122h2v2h-2zM106 122h2v2h-2zM108 122h2v2h-2zM108 124h2v2h-2z"/><path fill="#ff8" d="M118 118h2v2h-2zM118 120h2v2h-2zM120 120h2v2h-2zM116 122h2v2h-2zM118 122h2v2h-2zM120 122h2v2h-2zM118 124h2v2h-2zM120 124h2v2h-2z"/><path fill="#fc2" d="M142 118h2v2h-2zM144 120h2v2h-2zM146 122h2v2h-2z"/><path fill="#fc1" d="M144 118h2v2h-2zM146 120h2v2h-2zM148 122h2v2h-2z"/><path fill="#8fb" d="M82 120h2v2h-2zM80 122h2v2h-2zM82 122h2v2h-2zM80 124h2v2h-2zM82 124h2v2h-2zM80 126h2v2h-2zM82 126h2v2h-2z"/><path fill="#bfa" d="M94 120h2v2h-2zM96 120h2v2h-2zM98 120h2v2h-2zM94 122h2v2h-2zM96 122h2v2h-2zM92 124h2v2h-2zM94 124h2v2h-2zM96 124h2v2h-2zM96 126h2v2h-2z"/><path fill="#fe7" d="M124 120h2v2h-2zM124 122h2v2h-2zM126 122h2v2h-2zM124 124h2v2h-2zM126 124h2v2h-2zM128 124h2v2h-2zM126 126h2v2h-2z"/><path fill="#fd5" d="M132 120h2v2h-2zM134 120h2v2h-2zM134 122h2v2h-2zM136 122h2v2h-2zM136 124h2v2h-2z"/><path fill="#fc3" d="M140 120h2v2h-2zM142 120h2v2h-2zM142 122h2v2h-2zM144 122h2v2h-2zM144 124h2v2h-2zM146 124h2v2h-2z"/><path fill="#9fb" d="M84 122h2v2h-2zM86 122h2v2h-2zM84 124h2v2h-2zM86 124h2v2h-2zM84 126h2v2h-2zM86 126h2v2h-2zM82 128h2v2h-2zM84 128h2v2h-2z"/><path fill="#cfa" d="M98 122h2v2h-2zM100 122h2v2h-2zM102 122h2v2h-2zM98 124h2v2h-2zM100 124h2v2h-2zM102 124h2v2h-2zM98 126h2v2h-2zM100 126h2v2h-2zM100 128h2v2h-2z"/><path fill="#ef9" d="M110 122h2v2h-2zM112 122h2v2h-2zM114 122h2v2h-2zM110 124h2v2h-2zM112 124h2v2h-2zM114 124h2v2h-2zM112 126h2v2h-2z"/><path fill="#fd6" d="M130 122h2v2h-2zM132 122h2v2h-2zM130 124h2v2h-2zM132 124h2v2h-2zM134 124h2v2h-2zM132 126h2v2h-2zM134 126h2v2h-2zM132 128h2v2h-2zM134 128h2v2h-2z"/><path fill="#fc4" d="M140 122h2v2h-2zM140 124h2v2h-2zM142 124h2v2h-2zM142 126h2v2h-2zM144 126h2v2h-2z"/><path fill="#fb0" d="M150 122h2v2h-2zM152 122h2v2h-2zM152 124h2v2h-2zM154 124h2v2h-2zM154 126h2v2h-2zM156 126h2v2h-2z"/><path fill="#0fe" d="M4 124h2v2h-2zM6 124h2v2h-2zM8 124h2v2h-2zM4 126h2v2h-2zM6 126h2v2h-2zM8 126h2v2h-2zM10 126h2v2h-2zM12 126h2v2h-2zM14 126h2v2h-2zM16 126h2v2h-2zM4 128h2v2h-2zM6 128h2v2h-2zM8 128h2v2h-2zM10 128h2v2h-2zM12 128h2v2h-2zM14 128h2v2h-2zM16 128h2v2h-2zM18 128h2v2h-2zM20 128h2v2h-2zM22 128h2v2h-2zM24 128h2v2h-2zM4 130h2v2h-2zM6 130h2v2h-2zM8 130h2v2h-2zM10 130h2v2h-2zM12 130h2v2h-2zM14 130h2v2h-2zM16 130h2v2h-2zM18 130h2v2h-2zM20 130h2v2h-2zM22 130h2v2h-2zM24 130h2v2h-2zM26 130h2v2h-2zM28 130h2v2h-2zM30 130h2v2h-2zM4 132h2v2h-2zM6 132h2v2h-2zM8 132h2v2h-2zM10 132h2v2h-2zM12 132h2v2h-2zM14 132h2v2h-2zM16 132h2v2h-2zM18 132h2v2h-2zM20 132h2v2h-2zM22 132h2v2h-2zM24 132h2v2h-2zM26 132h2v2h-2zM28 132h2v2h-2zM30 132h2v2h-2zM32 132h2v2h-2zM34 132h2v2h-2zM36 132h2v2h-2zM38 132h2v2h-2zM4 134h2v2h-2zM6 134h2v2h-2zM8 134h2v2h-2zM10 134h2v2h-2zM12 134h2v2h-2zM14 134h2v2h-2zM16 134h2v2h-2zM18 134h2v2h-2zM20 134h2v2h-2zM22 134h2v2h-2zM24 134h2v2h-2zM26 134h2v2h-2zM28 134h2v2h-2zM30 134h2v2h-2zM32 134h2v2h-2zM34 134h2v2h-2zM36 134h2v2h-2zM38 134h2v2h-2zM40 134h2v2h-2zM42 134h2v2h-2zM44 134h2v2h-2zM14 136h2v2h-2zM16 136h2v2h-2zM18 136h2v2h-2zM20 136h2v2h-2zM22 136h2v2h-2zM24 136h2v2h-2zM26 136h2v2h-2zM28 136h2v2h-2zM30 136h2v2h-2zM32 136h2v2h-2zM34 136h2v2h-2zM36 136h2v2h-2zM38 136h2v2h-2zM40 136h2v2h-2zM42 136h2v2h-2zM44 136h2v2h-2zM46 136h2v2h-2zM48 136h2v2h-2zM50 136h2v2h-2zM52 136h2v2h-2zM22 138h2v2h-2zM24 138h2v2h-2zM26 138h2v2h-2zM28 138h2v2h-2zM30 138h2v2h-2zM32 138h2v2h-2zM34 138h2v2h-2zM36 138h2v2h-2zM38 138h2v2h-2zM40 138h2v2h-2zM42 138h2v2h-2zM44 138h2v2h-2zM46 138h2v2h-2zM48 138h2v2h-2zM50 138h2v2h-2zM52 138h2v2h-2zM54 138h2v2h-2zM56 138h2v2h-2zM58 138h2v2h-2zM60 138h2v2h-2zM32 140h2v2h-2zM34 140h2v2h-2zM36 140h2v2h-2zM38 140h2v2h-2zM40 140h2v2h-2zM42 140h2v2h-2zM44 140h2v2h-2zM46 140h2v2h-2zM48 140h2v2h-2zM50 140h2v2h-2zM52 140h2v2h-2zM54 140h2v2h-2zM56 140h2v2h-2zM58 140h2v2h-2zM60 140h2v2h-2zM62 140h2v2h-2zM40 142h2v2h-2zM42 142h2v2h-2zM44 142h2v2h-2zM46 142h2v2h-2zM48 142h2v2h-2zM50 142h2v2h-2zM52 142h2v2h-2zM54 142h2v2h-2zM56 142h2v2h-2zM58 142h2v2h-2zM60 142h2v2h-2zM62 142h2v2h-2zM50 144h2v2h-2zM52 144h2v2h-2zM54 144h2v2h-2zM56 144h2v2h-2zM58 144h2v2h-2zM60 144h2v2h-2zM62 144h2v2h-2zM58 146h2v2h-2zM60 146h2v2h-2zM62 146h2v2h-2z"/><path fill="#3fc" d="M68 124h2v2h-2zM68 126h2v2h-2zM68 128h2v2h-2z"/><path fill="#4fc" d="M70 124h2v2h-2zM70 126h2v2h-2zM68 130h2v2h-2z"/><path fill="#afb" d="M88 124h2v2h-2zM90 124h2v2h-2zM88 126h2v2h-2zM90 126h2v2h-2zM86 128h2v2h-2zM88 128h2v2h-2zM90 128h2v2h-2zM88 130h2v2h-2z"/><path fill="#dfa" d="M104 124h2v2h-2zM106 124h2v2h-2zM102 126h2v2h-2zM104 126h2v2h-2zM106 126h2v2h-2zM102 128h2v2h-2zM104 128h2v2h-2zM106 128h2v2h-2z"/><path fill="#ff9" d="M116 124h2v2h-2zM114 126h2v2h-2zM116 126h2v2h-2zM118 126h2v2h-2zM114 128h2v2h-2zM116 128h2v2h-2zM118 128h2v2h-2zM116 130h2v2h-2z"/><path fill="#fe8" d="M122 124h2v2h-2zM120 126h2v2h-2zM122 126h2v2h-2zM124 126h2v2h-2zM122 128h2v2h-2zM124 128h2v2h-2zM122 130h2v2h-2zM124 130h2v2h-2z"/><path fill="#fc5" d="M138 124h2v2h-2zM136 126h2v2h-2zM138 126h2v2h-2zM140 126h2v2h-2zM138 128h2v2h-2zM140 128h2v2h-2zM142 128h2v2h-2zM140 130h2v2h-2zM142 130h2v2h-2z"/><path fill="#fb2" d="M148 124h2v2h-2zM150 126h2v2h-2zM152 128h2v2h-2z"/><path fill="#fb1" d="M150 124h2v2h-2zM152 126h2v2h-2zM154 128h2v2h-2z"/><path fill="#1fc" d="M66 126h2v2h-2zM66 128h2v2h-2z"/><path fill="#5fc" d="M72 126h2v2h-2zM70 128h2v2h-2zM72 128h2v2h-2zM70 130h2v2h-2zM70 132h2v2h-2z"/><path fill="#6fc" d="M74 126h2v2h-2zM74 128h2v2h-2zM72 130h2v2h-2zM74 130h2v2h-2zM72 132h2v2h-2z"/><path fill="#7fc" d="M76 126h2v2h-2zM76 128h2v2h-2zM78 128h2v2h-2zM76 130h2v2h-2zM74 132h2v2h-2zM76 132h2v2h-2zM76 134h2v2h-2z"/><path fill="#bfb" d="M92 126h2v2h-2zM94 126h2v2h-2zM92 128h2v2h-2zM94 128h2v2h-2zM90 130h2v2h-2zM92 130h2v2h-2zM94 130h2v2h-2zM92 132h2v2h-2z"/><path fill="#efa" d="M108 126h2v2h-2zM110 126h2v2h-2zM108 128h2v2h-2zM110 128h2v2h-2zM112 128h2v2h-2zM106 130h2v2h-2zM108 130h2v2h-2zM110 130h2v2h-2zM110 132h2v2h-2z"/><path fill="#fd7" d="M128 126h2v2h-2zM130 126h2v2h-2zM126 128h2v2h-2zM128 128h2v2h-2zM130 128h2v2h-2zM128 130h2v2h-2zM130 130h2v2h-2zM132 130h2v2h-2zM130 132h2v2h-2z"/><path fill="#fb3" d="M146 126h2v2h-2zM148 126h2v2h-2zM148 128h2v2h-2zM150 128h2v2h-2zM150 130h2v2h-2zM152 130h2v2h-2z"/><path fill="#8fc" d="M80 128h2v2h-2zM78 130h2v2h-2zM80 130h2v2h-2zM78 132h2v2h-2zM80 132h2v2h-2zM78 134h2v2h-2zM80 134h2v2h-2z"/><path fill="#cfb" d="M96 128h2v2h-2zM98 128h2v2h-2zM96 130h2v2h-2zM98 130h2v2h-2zM94 132h2v2h-2zM96 132h2v2h-2zM98 132h2v2h-2zM98 134h2v2h-2z"/><path fill="#fe9" d="M120 128h2v2h-2zM118 130h2v2h-2zM120 130h2v2h-2zM118 132h2v2h-2zM120 132h2v2h-2zM122 132h2v2h-2zM118 134h2v2h-2zM120 134h2v2h-2zM120 136h2v2h-2z"/><path fill="#fc6" d="M136 128h2v2h-2zM134 130h2v2h-2zM136 130h2v2h-2zM138 130h2v2h-2zM136 132h2v2h-2zM138 132h2v2h-2zM140 132h2v2h-2zM136 134h2v2h-2zM138 134h2v2h-2z"/><path fill="#fb4" d="M144 128h2v2h-2zM146 128h2v2h-2zM146 130h2v2h-2zM148 130h2v2h-2zM146 132h2v2h-2zM148 132h2v2h-2zM150 132h2v2h-2zM148 134h2v2h-2zM150 134h2v2h-2z"/><path fill="#fa0" d="M156 128h2v2h-2zM158 128h2v2h-2zM158 130h2v2h-2zM160 130h2v2h-2zM160 132h2v2h-2zM162 132h2v2h-2zM162 134h2v2h-2z"/><path fill="#2fc" d="M66 130h2v2h-2z"/><path fill="#9fc" d="M82 130h2v2h-2zM84 130h2v2h-2zM82 132h2v2h-2zM84 132h2v2h-2zM82 134h2v2h-2zM84 134h2v2h-2zM82 136h2v2h-2z"/><path fill="#afc" d="M86 130h2v2h-2zM86 132h2v2h-2zM88 132h2v2h-2zM86 134h2v2h-2zM88 134h2v2h-2zM84 136h2v2h-2zM86 136h2v2h-2z"/><path fill="#dfb" d="M100 130h2v2h-2zM102 130h2v2h-2zM104 130h2v2h-2zM100 132h2v2h-2zM102 132h2v2h-2zM104 132h2v2h-2zM100 134h2v2h-2zM102 134h2v2h-2zM102 136h2v2h-2z"/><path fill="#ffa" d="M112 130h2v2h-2zM114 130h2v2h-2zM112 132h2v2h-2zM114 132h2v2h-2zM116 132h2v2h-2zM114 134h2v2h-2z"/><path fill="#fd8" d="M126 130h2v2h-2zM124 132h2v2h-2zM126 132h2v2h-2zM128 132h2v2h-2zM124 134h2v2h-2zM126 134h2v2h-2zM128 134h2v2h-2zM126 136h2v2h-2zM128 136h2v2h-2zM126 138h2v2h-2z"/><path fill="#fb5" d="M144 130h2v2h-2zM142 132h2v2h-2zM144 132h2v2h-2zM142 134h2v2h-2zM144 134h2v2h-2zM146 134h2v2h-2zM144 136h2v2h-2zM146 136h2v2h-2zM148 136h2v2h-2zM146 138h2v2h-2z"/><path fill="#fa2" d="M154 130h2v2h-2zM156 132h2v2h-2zM158 134h2v2h-2zM160 136h2v2h-2z"/><path fill="#fa1" d="M156 130h2v2h-2zM158 132h2v2h-2zM160 134h2v2h-2z"/><path fill="#2fd" d="M66 132h2v2h-2z"/><path fill="#4fd" d="M68 132h2v2h-2zM68 134h2v2h-2zM68 136h2v2h-2zM68 138h2v2h-2z"/><path fill="#bfc" d="M90 132h2v2h-2zM90 134h2v2h-2zM92 134h2v2h-2zM88 136h2v2h-2zM90 136h2v2h-2zM92 136h2v2h-2zM88 138h2v2h-2zM90 138h2v2h-2z"/><path fill="#efb" d="M106 132h2v2h-2zM108 132h2v2h-2zM104 134h2v2h-2zM106 134h2v2h-2zM108 134h2v2h-2zM104 136h2v2h-2zM106 136h2v2h-2zM108 136h2v2h-2z"/><path fill="#fc7" d="M132 132h2v2h-2zM134 132h2v2h-2zM130 134h2v2h-2zM132 134h2v2h-2zM134 134h2v2h-2zM132 136h2v2h-2zM134 136h2v2h-2zM136 136h2v2h-2zM132 138h2v2h-2zM134 138h2v2h-2zM136 138h2v2h-2zM134 140h2v2h-2z"/><path fill="#fa3" d="M152 132h2v2h-2zM154 132h2v2h-2zM154 134h2v2h-2zM156 134h2v2h-2zM156 136h2v2h-2zM158 136h2v2h-2zM158 138h2v2h-2z"/><path fill="#3fd" d="M66 134h2v2h-2zM66 136h2v2h-2zM66 138h2v2h-2z"/><path fill="#5fd" d="M70 134h2v2h-2zM70 136h2v2h-2zM70 138h2v2h-2zM68 140h2v2h-2z"/><path fill="#6fd" d="M72 134h2v2h-2zM72 136h2v2h-2zM72 138h2v2h-2zM70 140h2v2h-2zM72 140h2v2h-2z"/><path fill="#7fd" d="M74 134h2v2h-2zM74 136h2v2h-2zM76 136h2v2h-2zM74 138h2v2h-2zM74 140h2v2h-2z"/><path fill="#cfc" d="M94 134h2v2h-2zM96 134h2v2h-2zM94 136h2v2h-2zM96 136h2v2h-2zM92 138h2v2h-2zM94 138h2v2h-2zM96 138h2v2h-2zM94 140h2v2h-2z"/><path fill="#ffb" d="M110 134h2v2h-2zM112 134h2v2h-2zM110 136h2v2h-2zM112 136h2v2h-2zM108 138h2v2h-2zM110 138h2v2h-2zM112 138h2v2h-2zM110 140h2v2h-2z"/><path fill="#fea" d="M116 134h2v2h-2zM114 136h2v2h-2zM116 136h2v2h-2zM118 136h2v2h-2zM114 138h2v2h-2zM116 138h2v2h-2zM118 138h2v2h-2zM116 140h2v2h-2zM118 140h2v2h-2zM116 142h2v2h-2z"/><path fill="#fd9" d="M122 134h2v2h-2zM122 136h2v2h-2zM124 136h2v2h-2zM120 138h2v2h-2zM122 138h2v2h-2zM124 138h2v2h-2zM122 140h2v2h-2zM124 140h2v2h-2zM122 142h2v2h-2zM124 142h2v2h-2z"/><path fill="#fb6" d="M140 134h2v2h-2zM138 136h2v2h-2zM140 136h2v2h-2zM142 136h2v2h-2zM140 138h2v2h-2zM142 138h2v2h-2zM144 138h2v2h-2zM140 140h2v2h-2zM142 140h2v2h-2zM144 140h2v2h-2zM142 142h2v2h-2z"/><path fill="#fa4" d="M152 134h2v2h-2zM150 136h2v2h-2zM152 136h2v2h-2zM154 136h2v2h-2zM152 138h2v2h-2zM154 138h2v2h-2zM156 138h2v2h-2zM154 140h2v2h-2zM156 140h2v2h-2z"/><path fill="#f90" d="M164 134h2v2h-2zM164 136h2v2h-2zM166 136h2v2h-2zM166 138h2v2h-2zM168 138h2v2h-2zM168 140h2v2h-2zM170 140h2v2h-2z"/><path fill="#0ff" d="M6 136h2v2h-2zM8 136h2v2h-2zM10 136h2v2h-2zM12 136h2v2h-2zM6 138h2v2h-2zM8 138h2v2h-2zM10 138h2v2h-2zM12 138h2v2h-2zM14 138h2v2h-2zM16 138h2v2h-2zM18 138h2v2h-2zM20 138h2v2h-2zM6 140h2v2h-2zM8 140h2v2h-2zM10 140h2v2h-2zM12 140h2v2h-2zM14 140h2v2h-2zM16 140h2v2h-2zM18 140h2v2h-2zM20 140h2v2h-2zM22 140h2v2h-2zM24 140h2v2h-2zM26 140h2v2h-2zM28 140h2v2h-2zM30 140h2v2h-2zM6 142h2v2h-2zM8 142h2v2h-2zM10 142h2v2h-2zM12 142h2v2h-2zM14 142h2v2h-2zM16 142h2v2h-2zM18 142h2v2h-2zM20 142h2v2h-2zM22 142h2v2h-2zM24 142h2v2h-2zM26 142h2v2h-2zM28 142h2v2h-2zM30 142h2v2h-2zM32 142h2v2h-2zM34 142h2v2h-2zM36 142h2v2h-2zM38 142h2v2h-2zM6 144h2v2h-2zM8 144h2v2h-2zM10 144h2v2h-2zM12 144h2v2h-2zM14 144h2v2h-2zM16 144h2v2h-2zM18 144h2v2h-2zM20 144h2v2h-2zM22 144h2v2h-2zM24 144h2v2h-2zM26 144h2v2h-2zM28 144h2v2h-2zM30 144h2v2h-2zM32 144h2v2h-2zM34 144h2v2h-2zM36 144h2v2h-2zM38 144h2v2h-2zM40 144h2v2h-2zM42 144h2v2h-2zM44 144h2v2h-2zM46 144h2v2h-2zM48 144h2v2h-2zM10 146h2v2h-2zM12 146h2v2h-2zM14 146h2v2h-2zM16 146h2v2h-2zM18 146h2v2h-2zM20 146h2v2h-2zM22 146h2v2h-2zM24 146h2v2h-2zM26 146h2v2h-2zM28 146h2v2h-2zM30 146h2v2h-2zM32 146h2v2h-2zM34 146h2v2h-2zM36 146h2v2h-2zM38 146h2v2h-2zM40 146h2v2h-2zM42 146h2v2h-2zM44 146h2v2h-2zM46 146h2v2h-2zM48 146h2v2h-2zM50 146h2v2h-2zM52 146h2v2h-2zM54 146h2v2h-2zM56 146h2v2h-2zM22 148h2v2h-2zM24 148h2v2h-2zM26 148h2v2h-2zM28 148h2v2h-2zM30 148h2v2h-2zM32 148h2v2h-2zM34 148h2v2h-2zM36 148h2v2h-2zM38 148h2v2h-2zM40 148h2v2h-2zM42 148h2v2h-2zM44 148h2v2h-2zM46 148h2v2h-2zM48 148h2v2h-2zM50 148h2v2h-2zM52 148h2v2h-2zM54 148h2v2h-2zM56 148h2v2h-2zM58 148h2v2h-2zM60 148h2v2h-2zM62 148h2v2h-2zM34 150h2v2h-2zM36 150h2v2h-2zM38 150h2v2h-2zM40 150h2v2h-2zM42 150h2v2h-2zM44 150h2v2h-2zM46 150h2v2h-2zM48 150h2v2h-2zM50 150h2v2h-2zM52 150h2v2h-2zM54 150h2v2h-2zM56 150h2v2h-2zM58 150h2v2h-2zM60 150h2v2h-2zM62 150h2v2h-2zM46 152h2v2h-2zM48 152h2v2h-2zM50 152h2v2h-2zM52 152h2v2h-2zM54 152h2v2h-2zM56 152h2v2h-2zM58 152h2v2h-2zM60 152h2v2h-2zM58 154h2v2h-2zM60 154h2v2h-2z"/><path fill="#8fd" d="M78 136h2v2h-2zM76 138h2v2h-2zM78 138h2v2h-2zM76 140h2v2h-2zM78 140h2v2h-2zM76 142h2v2h-2z"/><path fill="#9fd" d="M80 136h2v2h-2zM80 138h2v2h-2zM82 138h2v2h-2zM80 140h2v2h-2zM82 140h2v2h-2zM78 142h2v2h-2zM80 142h2v2h-2z"/><path fill="#dfc" d="M98 136h2v2h-2zM100 136h2v2h-2zM98 138h2v2h-2zM100 138h2v2h-2zM96 140h2v2h-2zM98 140h2v2h-2zM100 140h2v2h-2z"/><path fill="#fc8" d="M130 136h2v2h-2zM128 138h2v2h-2zM130 138h2v2h-2zM128 140h2v2h-2zM130 140h2v2h-2zM132 140h2v2h-2zM128 142h2v2h-2zM130 142h2v2h-2zM132 142h2v2h-2zM130 144h2v2h-2z"/><path fill="#f91" d="M162 136h2v2h-2zM164 138h2v2h-2zM166 140h2v2h-2zM168 142h2v2h-2z"/><path fill="#afd" d="M84 138h2v2h-2zM86 138h2v2h-2zM84 140h2v2h-2zM86 140h2v2h-2zM82 142h2v2h-2zM84 142h2v2h-2zM82 144h2v2h-2zM84 144h2v2h-2z"/><path fill="#efc" d="M102 138h2v2h-2zM104 138h2v2h-2zM106 138h2v2h-2zM102 140h2v2h-2zM104 140h2v2h-2zM106 140h2v2h-2zM100 142h2v2h-2zM102 142h2v2h-2zM104 142h2v2h-2z"/><path fill="#fb7" d="M138 138h2v2h-2zM136 140h2v2h-2zM138 140h2v2h-2zM136 142h2v2h-2zM138 142h2v2h-2zM140 142h2v2h-2zM136 144h2v2h-2zM138 144h2v2h-2zM140 144h2v2h-2zM138 146h2v2h-2z"/><path fill="#fa5" d="M148 138h2v2h-2zM150 138h2v2h-2zM148 140h2v2h-2zM150 140h2v2h-2zM152 140h2v2h-2zM150 142h2v2h-2zM152 142h2v2h-2zM154 142h2v2h-2zM150 144h2v2h-2zM152 144h2v2h-2z"/><path fill="#f93" d="M160 138h2v2h-2zM160 140h2v2h-2zM162 140h2v2h-2zM160 142h2v2h-2zM162 142h2v2h-2zM164 142h2v2h-2zM162 144h2v2h-2zM164 144h2v2h-2zM166 144h2v2h-2zM164 146h2v2h-2z"/><path fill="#f92" d="M162 138h2v2h-2zM164 140h2v2h-2zM166 142h2v2h-2z"/><path fill="#1fe" d="M64 140h2v2h-2z"/><path fill="#3fe" d="M66 140h2v2h-2z"/><path fill="#bfd" d="M88 140h2v2h-2zM90 140h2v2h-2zM86 142h2v2h-2zM88 142h2v2h-2zM90 142h2v2h-2zM86 144h2v2h-2zM88 144h2v2h-2z"/><path fill="#cfd" d="M92 140h2v2h-2zM92 142h2v2h-2zM94 142h2v2h-2zM90 144h2v2h-2zM92 144h2v2h-2zM90 146h2v2h-2zM92 146h2v2h-2z"/><path fill="#ffc" d="M108 140h2v2h-2zM106 142h2v2h-2zM108 142h2v2h-2zM110 142h2v2h-2zM106 144h2v2h-2zM108 144h2v2h-2zM108 146h2v2h-2z"/><path fill="#feb" d="M112 140h2v2h-2zM114 140h2v2h-2zM112 142h2v2h-2zM114 142h2v2h-2zM112 144h2v2h-2zM114 144h2v2h-2zM112 146h2v2h-2zM114 146h2v2h-2z"/><path fill="#fda" d="M120 140h2v2h-2zM118 142h2v2h-2zM120 142h2v2h-2zM118 144h2v2h-2zM120 144h2v2h-2zM122 144h2v2h-2zM118 146h2v2h-2zM120 146h2v2h-2z"/><path fill="#fc9" d="M126 140h2v2h-2zM126 142h2v2h-2zM124 144h2v2h-2zM126 144h2v2h-2zM128 144h2v2h-2zM124 146h2v2h-2zM126 146h2v2h-2zM128 146h2v2h-2zM126 148h2v2h-2zM128 148h2v2h-2zM126 150h2v2h-2z"/><path fill="#fa6" d="M146 140h2v2h-2zM144 142h2v2h-2zM146 142h2v2h-2zM148 142h2v2h-2zM144 144h2v2h-2zM146 144h2v2h-2zM148 144h2v2h-2zM146 146h2v2h-2zM148 146h2v2h-2zM150 146h2v2h-2zM146 148h2v2h-2zM148 148h2v2h-2z"/><path fill="#f94" d="M158 140h2v2h-2zM156 142h2v2h-2zM158 142h2v2h-2zM158 144h2v2h-2zM160 144h2v2h-2zM158 146h2v2h-2zM160 146h2v2h-2zM162 146h2v2h-2zM160 148h2v2h-2z"/><path fill="#2fe" d="M64 142h2v2h-2zM64 144h2v2h-2zM64 146h2v2h-2z"/><path fill="#4fe" d="M66 142h2v2h-2zM66 144h2v2h-2zM66 146h2v2h-2z"/><path fill="#5fe" d="M68 142h2v2h-2zM68 144h2v2h-2zM68 146h2v2h-2zM68 148h2v2h-2z"/><path fill="#6fe" d="M70 142h2v2h-2zM70 144h2v2h-2zM70 146h2v2h-2zM70 148h2v2h-2z"/><path fill="#7fe" d="M72 142h2v2h-2zM74 142h2v2h-2zM72 144h2v2h-2zM74 144h2v2h-2zM72 146h2v2h-2zM72 148h2v2h-2z"/><path fill="#dfd" d="M96 142h2v2h-2zM98 142h2v2h-2zM94 144h2v2h-2zM96 144h2v2h-2zM98 144h2v2h-2zM94 146h2v2h-2zM96 146h2v2h-2zM96 148h2v2h-2z"/><path fill="#fb8" d="M134 142h2v2h-2zM132 144h2v2h-2zM134 144h2v2h-2zM132 146h2v2h-2zM134 146h2v2h-2zM136 146h2v2h-2zM132 148h2v2h-2zM134 148h2v2h-2zM136 148h2v2h-2zM134 150h2v2h-2zM136 150h2v2h-2zM134 152h2v2h-2z"/><path fill="#f80" d="M170 142h2v2h-2zM172 142h2v2h-2zM172 144h2v2h-2zM174 144h2v2h-2zM174 146h2v2h-2zM176 146h2v2h-2zM176 148h2v2h-2z"/><path fill="#8fe" d="M76 144h2v2h-2zM74 146h2v2h-2zM76 146h2v2h-2zM74 148h2v2h-2zM76 148h2v2h-2z"/><path fill="#9fe" d="M78 144h2v2h-2zM80 144h2v2h-2zM78 146h2v2h-2zM80 146h2v2h-2zM78 148h2v2h-2zM76 150h2v2h-2zM78 150h2v2h-2z"/><path fill="#efd" d="M100 144h2v2h-2zM102 144h2v2h-2zM98 146h2v2h-2zM100 146h2v2h-2zM102 146h2v2h-2zM98 148h2v2h-2zM100 148h2v2h-2z"/><path fill="#ffd" d="M104 144h2v2h-2zM104 146h2v2h-2zM106 146h2v2h-2zM102 148h2v2h-2zM104 148h2v2h-2zM106 148h2v2h-2zM104 150h2v2h-2zM104 152h2v2h-2z"/><path fill="#fec" d="M110 144h2v2h-2zM110 146h2v2h-2zM108 148h2v2h-2zM110 148h2v2h-2zM112 148h2v2h-2zM108 150h2v2h-2zM110 150h2v2h-2zM110 152h2v2h-2z"/><path fill="#fdb" d="M116 144h2v2h-2zM116 146h2v2h-2zM114 148h2v2h-2zM116 148h2v2h-2zM118 148h2v2h-2zM114 150h2v2h-2zM116 150h2v2h-2zM118 150h2v2h-2zM114 152h2v2h-2zM116 152h2v2h-2z"/><path fill="#fa7" d="M142 144h2v2h-2zM140 146h2v2h-2zM142 146h2v2h-2zM144 146h2v2h-2zM140 148h2v2h-2zM142 148h2v2h-2zM144 148h2v2h-2zM140 150h2v2h-2zM142 150h2v2h-2zM144 150h2v2h-2zM146 150h2v2h-2zM142 152h2v2h-2zM144 152h2v2h-2z"/><path fill="#f95" d="M154 144h2v2h-2zM156 144h2v2h-2zM152 146h2v2h-2zM154 146h2v2h-2zM156 146h2v2h-2zM154 148h2v2h-2zM156 148h2v2h-2zM158 148h2v2h-2zM156 150h2v2h-2zM158 150h2v2h-2zM156 152h2v2h-2z"/><path fill="#f82" d="M168 144h2v2h-2zM170 146h2v2h-2zM172 148h2v2h-2zM172 150h2v2h-2z"/><path fill="#f81" d="M170 144h2v2h-2zM172 146h2v2h-2zM174 148h2v2h-2z"/><path fill="#0ef" d="M6 146h2v2h-2zM8 146h2v2h-2zM6 148h2v2h-2zM8 148h2v2h-2zM10 148h2v2h-2zM12 148h2v2h-2zM14 148h2v2h-2zM16 148h2v2h-2zM18 148h2v2h-2zM20 148h2v2h-2zM8 150h2v2h-2zM10 150h2v2h-2zM12 150h2v2h-2zM14 150h2v2h-2zM16 150h2v2h-2zM18 150h2v2h-2zM20 150h2v2h-2zM22 150h2v2h-2zM24 150h2v2h-2zM26 150h2v2h-2zM28 150h2v2h-2zM30 150h2v2h-2zM32 150h2v2h-2zM8 152h2v2h-2zM10 152h2v2h-2zM12 152h2v2h-2zM14 152h2v2h-2zM16 152h2v2h-2zM18 152h2v2h-2zM20 152h2v2h-2zM22 152h2v2h-2zM24 152h2v2h-2zM26 152h2v2h-2zM28 152h2v2h-2zM30 152h2v2h-2zM32 152h2v2h-2zM34 152h2v2h-2zM36 152h2v2h-2zM38 152h2v2h-2zM40 152h2v2h-2zM42 152h2v2h-2zM44 152h2v2h-2zM8 154h2v2h-2zM10 154h2v2h-2zM12 154h2v2h-2zM14 154h2v2h-2zM16 154h2v2h-2zM18 154h2v2h-2zM20 154h2v2h-2zM22 154h2v2h-2zM24 154h2v2h-2zM26 154h2v2h-2zM28 154h2v2h-2zM30 154h2v2h-2zM32 154h2v2h-2zM34 154h2v2h-2zM36 154h2v2h-2zM38 154h2v2h-2zM40 154h2v2h-2zM42 154h2v2h-2zM44 154h2v2h-2zM46 154h2v2h-2zM48 154h2v2h-2zM50 154h2v2h-2zM52 154h2v2h-2zM54 154h2v2h-2zM56 154h2v2h-2zM8 156h2v2h-2zM10 156h2v2h-2zM12 156h2v2h-2zM14 156h2v2h-2zM16 156h2v2h-2zM18 156h2v2h-2zM20 156h2v2h-2zM22 156h2v2h-2zM24 156h2v2h-2zM26 156h2v2h-2zM28 156h2v2h-2zM30 156h2v2h-2zM32 156h2v2h-2zM34 156h2v2h-2zM36 156h2v2h-2zM38 156h2v2h-2zM40 156h2v2h-2zM42 156h2v2h-2zM44 156h2v2h-2zM46 156h2v2h-2zM48 156h2v2h-2zM50 156h2v2h-2zM52 156h2v2h-2zM54 156h2v2h-2zM56 156h2v2h-2zM58 156h2v2h-2zM60 156h2v2h-2zM16 158h2v2h-2zM18 158h2v2h-2zM20 158h2v2h-2zM22 158h2v2h-2zM24 158h2v2h-2zM26 158h2v2h-2zM28 158h2v2h-2zM30 158h2v2h-2zM32 158h2v2h-2zM34 158h2v2h-2zM36 158h2v2h-2zM38 158h2v2h-2zM40 158h2v2h-2zM42 158h2v2h-2zM44 158h2v2h-2zM46 158h2v2h-2zM48 158h2v2h-2zM50 158h2v2h-2zM52 158h2v2h-2zM54 158h2v2h-2zM56 158h2v2h-2zM58 158h2v2h-2zM60 158h2v2h-2zM34 160h2v2h-2zM36 160h2v2h-2zM38 160h2v2h-2zM40 160h2v2h-2zM42 160h2v2h-2zM44 160h2v2h-2zM46 160h2v2h-2zM48 160h2v2h-2zM50 160h2v2h-2zM52 160h2v2h-2zM54 160h2v2h-2zM56 160h2v2h-2zM58 160h2v2h-2zM60 160h2v2h-2zM52 162h2v2h-2zM54 162h2v2h-2zM56 162h2v2h-2zM58 162h2v2h-2zM60 162h2v2h-2z"/><path fill="#afe" d="M82 146h2v2h-2zM84 146h2v2h-2zM80 148h2v2h-2zM82 148h2v2h-2zM80 150h2v2h-2zM82 150h2v2h-2z"/><path fill="#bfe" d="M86 146h2v2h-2zM88 146h2v2h-2zM84 148h2v2h-2zM86 148h2v2h-2zM84 150h2v2h-2zM86 150h2v2h-2zM86 152h2v2h-2z"/><path fill="#fca" d="M122 146h2v2h-2zM120 148h2v2h-2zM122 148h2v2h-2zM124 148h2v2h-2zM120 150h2v2h-2zM122 150h2v2h-2zM124 150h2v2h-2zM120 152h2v2h-2zM122 152h2v2h-2zM124 152h2v2h-2zM122 154h2v2h-2z"/><path fill="#fb9" d="M130 146h2v2h-2zM130 148h2v2h-2zM128 150h2v2h-2zM130 150h2v2h-2zM132 150h2v2h-2zM128 152h2v2h-2zM130 152h2v2h-2zM132 152h2v2h-2zM128 154h2v2h-2zM130 154h2v2h-2zM132 154h2v2h-2zM130 156h2v2h-2z"/><path fill="#f83" d="M166 146h2v2h-2zM168 146h2v2h-2zM166 148h2v2h-2zM168 148h2v2h-2zM170 148h2v2h-2zM168 150h2v2h-2zM170 150h2v2h-2zM170 152h2v2h-2z"/><path fill="#3ff" d="M64 148h2v2h-2zM64 150h2v2h-2zM64 152h2v2h-2z"/><path fill="#4ff" d="M66 148h2v2h-2zM64 154h2v2h-2z"/><path fill="#cfe" d="M88 148h2v2h-2zM90 148h2v2h-2zM92 148h2v2h-2zM88 150h2v2h-2zM90 150h2v2h-2zM88 152h2v2h-2zM90 152h2v2h-2z"/><path fill="#dfe" d="M94 148h2v2h-2zM92 150h2v2h-2zM94 150h2v2h-2zM92 152h2v2h-2zM94 152h2v2h-2z"/><path fill="#fa8" d="M138 148h2v2h-2zM138 150h2v2h-2zM136 152h2v2h-2zM138 152h2v2h-2zM140 152h2v2h-2zM136 154h2v2h-2zM138 154h2v2h-2zM140 154h2v2h-2zM142 154h2v2h-2zM136 156h2v2h-2zM138 156h2v2h-2zM140 156h2v2h-2zM138 158h2v2h-2z"/><path fill="#f96" d="M150 148h2v2h-2zM152 148h2v2h-2zM148 150h2v2h-2zM150 150h2v2h-2zM152 150h2v2h-2zM154 150h2v2h-2zM150 152h2v2h-2zM152 152h2v2h-2zM154 152h2v2h-2zM150 154h2v2h-2zM152 154h2v2h-2zM154 154h2v2h-2zM152 156h2v2h-2z"/><path fill="#f84" d="M162 148h2v2h-2zM164 148h2v2h-2zM162 150h2v2h-2zM164 150h2v2h-2zM166 150h2v2h-2zM164 152h2v2h-2zM166 152h2v2h-2zM168 152h2v2h-2zM166 154h2v2h-2zM168 154h2v2h-2z"/><path fill="#f70" d="M178 148h2v2h-2zM178 150h2v2h-2zM180 150h2v2h-2zM180 152h2v2h-2zM182 152h2v2h-2zM182 154h2v2h-2zM184 154h2v2h-2z"/><path fill="#5ff" d="M66 150h2v2h-2zM66 152h2v2h-2zM66 154h2v2h-2z"/><path fill="#6ff" d="M68 150h2v2h-2zM68 152h2v2h-2zM68 154h2v2h-2z"/><path fill="#7ff" d="M70 150h2v2h-2zM72 150h2v2h-2zM70 152h2v2h-2zM72 152h2v2h-2zM70 154h2v2h-2zM70 156h2v2h-2z"/><path fill="#8ff" d="M74 150h2v2h-2zM74 152h2v2h-2zM72 154h2v2h-2zM74 154h2v2h-2zM72 156h2v2h-2zM74 156h2v2h-2z"/><path fill="#efe" d="M96 150h2v2h-2zM98 150h2v2h-2zM100 150h2v2h-2zM96 152h2v2h-2zM98 152h2v2h-2zM94 154h2v2h-2zM96 154h2v2h-2zM98 154h2v2h-2z"/><path fill="#ffe" d="M102 150h2v2h-2zM100 152h2v2h-2zM102 152h2v2h-2zM100 154h2v2h-2zM102 154h2v2h-2zM102 156h2v2h-2z"/><path fill="#fed" d="M106 150h2v2h-2zM106 152h2v2h-2zM108 152h2v2h-2zM106 154h2v2h-2zM108 154h2v2h-2zM106 156h2v2h-2zM106 158h2v2h-2z"/><path fill="#fdc" d="M112 150h2v2h-2zM112 152h2v2h-2zM110 154h2v2h-2zM112 154h2v2h-2zM114 154h2v2h-2zM110 156h2v2h-2zM112 156h2v2h-2zM114 156h2v2h-2zM112 158h2v2h-2z"/><path fill="#f85" d="M160 150h2v2h-2zM158 152h2v2h-2zM160 152h2v2h-2zM162 152h2v2h-2zM158 154h2v2h-2zM160 154h2v2h-2zM162 154h2v2h-2zM164 154h2v2h-2zM160 156h2v2h-2zM162 156h2v2h-2zM164 156h2v2h-2zM166 156h2v2h-2zM162 158h2v2h-2z"/><path fill="#f72" d="M174 150h2v2h-2zM174 152h2v2h-2zM176 152h2v2h-2zM176 154h2v2h-2zM178 154h2v2h-2zM178 156h2v2h-2zM180 156h2v2h-2z"/><path fill="#f71" d="M176 150h2v2h-2zM178 152h2v2h-2zM180 154h2v2h-2z"/><path fill="#1ff" d="M62 152h2v2h-2zM62 154h2v2h-2z"/><path fill="#9ff" d="M76 152h2v2h-2zM78 152h2v2h-2zM76 154h2v2h-2zM76 156h2v2h-2z"/><path fill="#aff" d="M80 152h2v2h-2zM82 152h2v2h-2zM78 154h2v2h-2zM80 154h2v2h-2zM78 156h2v2h-2zM80 156h2v2h-2z"/><path fill="#bff" d="M84 152h2v2h-2zM82 154h2v2h-2zM84 154h2v2h-2zM82 156h2v2h-2zM84 156h2v2h-2zM82 158h2v2h-2zM84 158h2v2h-2z"/><path fill="#fcb" d="M118 152h2v2h-2zM116 154h2v2h-2zM118 154h2v2h-2zM120 154h2v2h-2zM116 156h2v2h-2zM118 156h2v2h-2zM120 156h2v2h-2zM118 158h2v2h-2zM120 158h2v2h-2zM118 160h2v2h-2z"/><path fill="#fba" d="M126 152h2v2h-2zM124 154h2v2h-2zM126 154h2v2h-2zM122 156h2v2h-2zM124 156h2v2h-2zM126 156h2v2h-2zM128 156h2v2h-2zM124 158h2v2h-2zM126 158h2v2h-2zM128 158h2v2h-2zM124 160h2v2h-2zM126 160h2v2h-2z"/><path fill="#f97" d="M146 152h2v2h-2zM148 152h2v2h-2zM144 154h2v2h-2zM146 154h2v2h-2zM148 154h2v2h-2zM144 156h2v2h-2zM146 156h2v2h-2zM148 156h2v2h-2zM150 156h2v2h-2zM146 158h2v2h-2zM148 158h2v2h-2zM150 158h2v2h-2zM146 160h2v2h-2zM148 160h2v2h-2z"/><path fill="#f73" d="M172 152h2v2h-2zM172 154h2v2h-2zM174 154h2v2h-2zM174 156h2v2h-2zM176 156h2v2h-2zM176 158h2v2h-2zM178 158h2v2h-2z"/><path fill="#cff" d="M86 154h2v2h-2zM88 154h2v2h-2zM86 156h2v2h-2zM88 156h2v2h-2zM86 158h2v2h-2zM88 158h2v2h-2z"/><path fill="#dff" d="M90 154h2v2h-2zM92 154h2v2h-2zM90 156h2v2h-2zM92 156h2v2h-2zM90 158h2v2h-2zM92 158h2v2h-2z"/><path fill="#fee" d="M104 154h2v2h-2zM104 156h2v2h-2zM102 158h2v2h-2zM104 158h2v2h-2zM102 160h2v2h-2zM104 160h2v2h-2zM102 162h2v2h-2zM104 162h2v2h-2z"/><path fill="#fa9" d="M134 154h2v2h-2zM132 156h2v2h-2zM134 156h2v2h-2zM130 158h2v2h-2zM132 158h2v2h-2zM134 158h2v2h-2zM136 158h2v2h-2zM132 160h2v2h-2zM134 160h2v2h-2zM136 160h2v2h-2zM132 162h2v2h-2zM134 162h2v2h-2z"/><path fill="#f86" d="M156 154h2v2h-2zM154 156h2v2h-2zM156 156h2v2h-2zM158 156h2v2h-2zM154 158h2v2h-2zM156 158h2v2h-2zM158 158h2v2h-2zM160 158h2v2h-2zM156 160h2v2h-2zM158 160h2v2h-2zM160 160h2v2h-2zM156 162h2v2h-2zM158 162h2v2h-2z"/><path fill="#f74" d="M170 154h2v2h-2zM168 156h2v2h-2zM170 156h2v2h-2zM172 156h2v2h-2zM168 158h2v2h-2zM170 158h2v2h-2zM172 158h2v2h-2zM174 158h2v2h-2zM170 160h2v2h-2zM172 160h2v2h-2zM174 160h2v2h-2zM172 162h2v2h-2z"/><path fill="#2ef" d="M62 156h2v2h-2zM62 158h2v2h-2z"/><path fill="#4ef" d="M64 156h2v2h-2zM64 158h2v2h-2zM64 160h2v2h-2zM64 162h2v2h-2z"/><path fill="#5ef" d="M66 156h2v2h-2zM66 158h2v2h-2zM66 160h2v2h-2zM66 162h2v2h-2z"/><path fill="#6ef" d="M68 156h2v2h-2zM68 158h2v2h-2zM68 160h2v2h-2zM68 162h2v2h-2z"/><path fill="#eff" d="M94 156h2v2h-2zM96 156h2v2h-2zM94 158h2v2h-2zM96 158h2v2h-2zM94 160h2v2h-2zM96 160h2v2h-2z"/><path fill="#fff" d="M98 156h2v2h-2zM100 156h2v2h-2zM98 158h2v2h-2zM100 158h2v2h-2zM98 160h2v2h-2zM100 160h2v2h-2z"/><path fill="#fdd" d="M108 156h2v2h-2zM108 158h2v2h-2zM110 158h2v2h-2zM106 160h2v2h-2zM108 160h2v2h-2zM110 160h2v2h-2zM108 162h2v2h-2zM110 162h2v2h-2zM108 164h2v2h-2z"/><path fill="#f98" d="M142 156h2v2h-2zM140 158h2v2h-2zM142 158h2v2h-2zM144 158h2v2h-2zM138 160h2v2h-2zM140 160h2v2h-2zM142 160h2v2h-2zM144 160h2v2h-2zM140 162h2v2h-2zM142 162h2v2h-2zM144 162h2v2h-2zM146 162h2v2h-2zM142 164h2v2h-2zM144 164h2v2h-2z"/><path fill="#f61" d="M182 156h2v2h-2zM184 158h2v2h-2zM186 160h2v2h-2z"/><path fill="#f60" d="M184 156h2v2h-2zM186 156h2v2h-2zM186 158h2v2h-2zM188 158h2v2h-2zM188 160h2v2h-2zM190 160h2v2h-2z"/><path fill="#0df" d="M8 158h2v2h-2zM10 158h2v2h-2zM12 158h2v2h-2zM14 158h2v2h-2zM10 160h2v2h-2zM12 160h2v2h-2zM14 160h2v2h-2zM16 160h2v2h-2zM18 160h2v2h-2zM20 160h2v2h-2zM22 160h2v2h-2zM24 160h2v2h-2zM26 160h2v2h-2zM28 160h2v2h-2zM30 160h2v2h-2zM32 160h2v2h-2zM10 162h2v2h-2zM12 162h2v2h-2zM14 162h2v2h-2zM16 162h2v2h-2zM18 162h2v2h-2zM20 162h2v2h-2zM22 162h2v2h-2zM24 162h2v2h-2zM26 162h2v2h-2zM28 162h2v2h-2zM30 162h2v2h-2zM32 162h2v2h-2zM34 162h2v2h-2zM36 162h2v2h-2zM38 162h2v2h-2zM40 162h2v2h-2zM42 162h2v2h-2zM44 162h2v2h-2zM46 162h2v2h-2zM48 162h2v2h-2zM50 162h2v2h-2zM10 164h2v2h-2zM12 164h2v2h-2zM14 164h2v2h-2zM16 164h2v2h-2zM18 164h2v2h-2zM20 164h2v2h-2zM22 164h2v2h-2zM24 164h2v2h-2zM26 164h2v2h-2zM28 164h2v2h-2zM30 164h2v2h-2zM32 164h2v2h-2zM34 164h2v2h-2zM36 164h2v2h-2zM38 164h2v2h-2zM40 164h2v2h-2zM42 164h2v2h-2zM44 164h2v2h-2zM46 164h2v2h-2zM48 164h2v2h-2zM50 164h2v2h-2zM52 164h2v2h-2zM54 164h2v2h-2zM56 164h2v2h-2zM58 164h2v2h-2zM60 164h2v2h-2zM10 166h2v2h-2zM12 166h2v2h-2zM14 166h2v2h-2zM16 166h2v2h-2zM18 166h2v2h-2zM20 166h2v2h-2zM22 166h2v2h-2zM24 166h2v2h-2zM26 166h2v2h-2zM28 166h2v2h-2zM30 166h2v2h-2zM32 166h2v2h-2zM34 166h2v2h-2zM36 166h2v2h-2zM38 166h2v2h-2zM40 166h2v2h-2zM42 166h2v2h-2zM44 166h2v2h-2zM46 166h2v2h-2zM48 166h2v2h-2zM50 166h2v2h-2zM52 166h2v2h-2zM54 166h2v2h-2zM56 166h2v2h-2zM58 166h2v2h-2zM10 168h2v2h-2zM12 168h2v2h-2zM14 168h2v2h-2zM16 168h2v2h-2zM18 168h2v2h-2zM20 168h2v2h-2zM22 168h2v2h-2zM24 168h2v2h-2zM26 168h2v2h-2zM28 168h2v2h-2zM30 168h2v2h-2zM32 168h2v2h-2zM34 168h2v2h-2zM36 168h2v2h-2zM38 168h2v2h-2zM40 168h2v2h-2zM42 168h2v2h-2zM44 168h2v2h-2zM46 168h2v2h-2zM48 168h2v2h-2zM50 168h2v2h-2zM52 168h2v2h-2zM54 168h2v2h-2zM56 168h2v2h-2zM58 168h2v2h-2zM32 170h2v2h-2zM34 170h2v2h-2zM36 170h2v2h-2zM38 170h2v2h-2zM40 170h2v2h-2zM42 170h2v2h-2zM44 170h2v2h-2zM46 170h2v2h-2zM48 170h2v2h-2zM50 170h2v2h-2zM52 170h2v2h-2zM54 170h2v2h-2zM56 170h2v2h-2zM58 170h2v2h-2z"/><path fill="#7ef" d="M70 158h2v2h-2zM70 160h2v2h-2zM70 162h2v2h-2zM70 164h2v2h-2z"/><path fill="#8ef" d="M72 158h2v2h-2zM74 158h2v2h-2zM72 160h2v2h-2zM74 160h2v2h-2zM72 162h2v2h-2zM74 162h2v2h-2zM72 164h2v2h-2zM74 164h2v2h-2z"/><path fill="#9ef" d="M76 158h2v2h-2zM76 160h2v2h-2zM76 162h2v2h-2zM76 164h2v2h-2z"/><path fill="#aef" d="M78 158h2v2h-2zM80 158h2v2h-2zM78 160h2v2h-2zM80 160h2v2h-2zM78 162h2v2h-2zM80 162h2v2h-2zM78 164h2v2h-2zM80 164h2v2h-2z"/><path fill="#fcc" d="M114 158h2v2h-2zM116 158h2v2h-2zM112 160h2v2h-2zM114 160h2v2h-2zM116 160h2v2h-2zM112 162h2v2h-2zM114 162h2v2h-2zM116 162h2v2h-2zM114 164h2v2h-2zM114 166h2v2h-2z"/><path fill="#fbb" d="M122 158h2v2h-2zM120 160h2v2h-2zM122 160h2v2h-2zM118 162h2v2h-2zM120 162h2v2h-2zM122 162h2v2h-2zM124 162h2v2h-2zM120 164h2v2h-2zM122 164h2v2h-2zM120 166h2v2h-2zM122 166h2v2h-2zM120 168h2v2h-2z"/><path fill="#f87" d="M152 158h2v2h-2zM150 160h2v2h-2zM152 160h2v2h-2zM154 160h2v2h-2zM148 162h2v2h-2zM150 162h2v2h-2zM152 162h2v2h-2zM154 162h2v2h-2zM150 164h2v2h-2zM152 164h2v2h-2zM154 164h2v2h-2zM156 164h2v2h-2zM150 166h2v2h-2zM152 166h2v2h-2z"/><path fill="#f75" d="M164 158h2v2h-2zM166 158h2v2h-2zM164 160h2v2h-2zM166 160h2v2h-2zM168 160h2v2h-2zM164 162h2v2h-2zM166 162h2v2h-2zM168 162h2v2h-2zM170 162h2v2h-2zM166 164h2v2h-2zM168 164h2v2h-2zM170 164h2v2h-2z"/><path fill="#f62" d="M180 158h2v2h-2zM182 158h2v2h-2zM182 160h2v2h-2zM184 160h2v2h-2zM184 162h2v2h-2zM186 162h2v2h-2z"/><path fill="#3ef" d="M62 160h2v2h-2zM62 162h2v2h-2z"/><path fill="#bef" d="M82 160h2v2h-2zM84 160h2v2h-2zM82 162h2v2h-2zM84 162h2v2h-2zM82 164h2v2h-2zM84 164h2v2h-2z"/><path fill="#cef" d="M86 160h2v2h-2zM88 160h2v2h-2zM86 162h2v2h-2zM88 162h2v2h-2zM86 164h2v2h-2zM88 164h2v2h-2zM88 166h2v2h-2z"/><path fill="#def" d="M90 160h2v2h-2zM92 160h2v2h-2zM90 162h2v2h-2zM92 162h2v2h-2zM90 164h2v2h-2zM92 164h2v2h-2zM90 166h2v2h-2zM92 166h2v2h-2z"/><path fill="#faa" d="M128 160h2v2h-2zM130 160h2v2h-2zM126 162h2v2h-2zM128 162h2v2h-2zM130 162h2v2h-2zM126 164h2v2h-2zM128 164h2v2h-2zM130 164h2v2h-2zM132 164h2v2h-2zM126 166h2v2h-2zM128 166h2v2h-2zM130 166h2v2h-2zM128 168h2v2h-2z"/><path fill="#f76" d="M162 160h2v2h-2zM160 162h2v2h-2zM162 162h2v2h-2zM158 164h2v2h-2zM160 164h2v2h-2zM162 164h2v2h-2zM164 164h2v2h-2zM160 166h2v2h-2zM162 166h2v2h-2zM164 166h2v2h-2zM166 166h2v2h-2zM160 168h2v2h-2zM162 168h2v2h-2zM164 168h2v2h-2z"/><path fill="#f64" d="M176 160h2v2h-2zM174 162h2v2h-2zM176 162h2v2h-2zM178 162h2v2h-2zM174 164h2v2h-2zM176 164h2v2h-2zM178 164h2v2h-2zM176 166h2v2h-2zM178 166h2v2h-2zM180 166h2v2h-2zM178 168h2v2h-2z"/><path fill="#f63" d="M178 160h2v2h-2zM180 160h2v2h-2zM180 162h2v2h-2zM182 162h2v2h-2zM180 164h2v2h-2zM182 164h2v2h-2zM184 164h2v2h-2z"/><path fill="#eef" d="M94 162h2v2h-2zM96 162h2v2h-2zM94 164h2v2h-2zM96 164h2v2h-2zM94 166h2v2h-2zM96 166h2v2h-2zM98 166h2v2h-2z"/><path fill="#fef" d="M98 162h2v2h-2zM100 162h2v2h-2zM98 164h2v2h-2zM100 164h2v2h-2zM102 164h2v2h-2zM100 166h2v2h-2z"/><path fill="#fde" d="M106 162h2v2h-2zM104 164h2v2h-2zM106 164h2v2h-2zM104 166h2v2h-2zM106 166h2v2h-2zM104 168h2v2h-2zM104 170h2v2h-2z"/><path fill="#f99" d="M136 162h2v2h-2zM138 162h2v2h-2zM134 164h2v2h-2zM136 164h2v2h-2zM138 164h2v2h-2zM140 164h2v2h-2zM134 166h2v2h-2zM136 166h2v2h-2zM138 166h2v2h-2zM140 166h2v2h-2zM136 168h2v2h-2zM138 168h2v2h-2zM136 170h2v2h-2z"/><path fill="#f51" d="M188 162h2v2h-2zM190 164h2v2h-2zM192 166h2v2h-2z"/><path fill="#f50" d="M190 162h2v2h-2zM192 162h2v2h-2zM192 164h2v2h-2zM194 164h2v2h-2zM194 166h2v2h-2zM196 166h2v2h-2z"/><path fill="#3df" d="M62 164h2v2h-2zM62 166h2v2h-2zM62 168h2v2h-2z"/><path fill="#4df" d="M64 164h2v2h-2zM62 170h2v2h-2z"/><path fill="#5df" d="M66 164h2v2h-2zM64 166h2v2h-2zM64 168h2v2h-2zM64 170h2v2h-2z"/><path fill="#6df" d="M68 164h2v2h-2zM66 166h2v2h-2zM68 166h2v2h-2zM66 168h2v2h-2zM68 168h2v2h-2zM66 170h2v2h-2z"/><path fill="#fcd" d="M110 164h2v2h-2zM112 164h2v2h-2zM108 166h2v2h-2zM110 166h2v2h-2zM112 166h2v2h-2zM108 168h2v2h-2zM110 168h2v2h-2zM112 168h2v2h-2zM110 170h2v2h-2z"/><path fill="#fbc" d="M116 164h2v2h-2zM118 164h2v2h-2zM116 166h2v2h-2zM118 166h2v2h-2zM114 168h2v2h-2zM116 168h2v2h-2zM118 168h2v2h-2zM116 170h2v2h-2zM118 170h2v2h-2zM116 172h2v2h-2z"/><path fill="#fab" d="M124 164h2v2h-2zM124 166h2v2h-2zM122 168h2v2h-2zM124 168h2v2h-2zM126 168h2v2h-2zM122 170h2v2h-2zM124 170h2v2h-2zM126 170h2v2h-2zM122 172h2v2h-2zM124 172h2v2h-2zM122 174h2v2h-2z"/><path fill="#f88" d="M146 164h2v2h-2zM148 164h2v2h-2zM142 166h2v2h-2zM144 166h2v2h-2zM146 166h2v2h-2zM148 166h2v2h-2zM144 168h2v2h-2zM146 168h2v2h-2zM148 168h2v2h-2zM150 168h2v2h-2zM144 170h2v2h-2zM146 170h2v2h-2zM148 170h2v2h-2zM146 172h2v2h-2z"/><path fill="#f65" d="M172 164h2v2h-2zM168 166h2v2h-2zM170 166h2v2h-2zM172 166h2v2h-2zM174 166h2v2h-2zM170 168h2v2h-2zM172 168h2v2h-2zM174 168h2v2h-2zM176 168h2v2h-2zM170 170h2v2h-2zM172 170h2v2h-2zM174 170h2v2h-2zM172 172h2v2h-2z"/><path fill="#f52" d="M186 164h2v2h-2zM188 164h2v2h-2zM188 166h2v2h-2zM190 166h2v2h-2zM190 168h2v2h-2zM192 168h2v2h-2z"/><path fill="#1df" d="M60 166h2v2h-2zM60 168h2v2h-2z"/><path fill="#7df" d="M70 166h2v2h-2zM70 168h2v2h-2zM68 170h2v2h-2zM70 170h2v2h-2zM70 172h2v2h-2z"/><path fill="#8df" d="M72 166h2v2h-2zM74 166h2v2h-2zM72 168h2v2h-2zM74 168h2v2h-2zM72 170h2v2h-2zM74 170h2v2h-2zM72 172h2v2h-2zM74 172h2v2h-2z"/><path fill="#9df" d="M76 166h2v2h-2zM76 168h2v2h-2zM76 170h2v2h-2zM76 172h2v2h-2z"/><path fill="#adf" d="M78 166h2v2h-2zM80 166h2v2h-2zM78 168h2v2h-2zM80 168h2v2h-2zM78 170h2v2h-2zM80 170h2v2h-2zM78 172h2v2h-2zM80 172h2v2h-2z"/><path fill="#bdf" d="M82 166h2v2h-2zM84 166h2v2h-2zM82 168h2v2h-2zM84 168h2v2h-2zM82 170h2v2h-2zM84 170h2v2h-2zM82 172h2v2h-2zM84 172h2v2h-2z"/><path fill="#cdf" d="M86 166h2v2h-2zM86 168h2v2h-2zM88 168h2v2h-2zM86 170h2v2h-2zM88 170h2v2h-2zM90 170h2v2h-2zM86 172h2v2h-2zM88 172h2v2h-2zM90 172h2v2h-2z"/><path fill="#fdf" d="M102 166h2v2h-2zM100 168h2v2h-2zM102 168h2v2h-2zM100 170h2v2h-2zM102 170h2v2h-2zM100 172h2v2h-2zM102 172h2v2h-2z"/><path fill="#f9a" d="M132 166h2v2h-2zM130 168h2v2h-2zM132 168h2v2h-2zM134 168h2v2h-2zM128 170h2v2h-2zM130 170h2v2h-2zM132 170h2v2h-2zM134 170h2v2h-2zM130 172h2v2h-2zM132 172h2v2h-2zM134 172h2v2h-2zM130 174h2v2h-2zM132 174h2v2h-2z"/><path fill="#f77" d="M154 166h2v2h-2zM156 166h2v2h-2zM158 166h2v2h-2zM152 168h2v2h-2zM154 168h2v2h-2zM156 168h2v2h-2zM158 168h2v2h-2zM154 170h2v2h-2zM156 170h2v2h-2zM158 170h2v2h-2zM160 170h2v2h-2zM154 172h2v2h-2zM156 172h2v2h-2zM158 172h2v2h-2zM156 174h2v2h-2z"/><path fill="#f53" d="M182 166h2v2h-2zM184 166h2v2h-2zM186 166h2v2h-2zM184 168h2v2h-2zM186 168h2v2h-2zM188 168h2v2h-2zM186 170h2v2h-2zM188 170h2v2h-2z"/><path fill="#ddf" d="M90 168h2v2h-2zM92 168h2v2h-2zM94 168h2v2h-2zM92 170h2v2h-2zM94 170h2v2h-2zM92 172h2v2h-2zM94 172h2v2h-2z"/><path fill="#edf" d="M96 168h2v2h-2zM98 168h2v2h-2zM96 170h2v2h-2zM98 170h2v2h-2zM96 172h2v2h-2zM98 172h2v2h-2z"/><path fill="#fce" d="M106 168h2v2h-2zM106 170h2v2h-2zM108 170h2v2h-2zM104 172h2v2h-2zM106 172h2v2h-2zM108 172h2v2h-2zM106 174h2v2h-2zM106 176h2v2h-2z"/><path fill="#f89" d="M140 168h2v2h-2zM142 168h2v2h-2zM138 170h2v2h-2zM140 170h2v2h-2zM142 170h2v2h-2zM138 172h2v2h-2zM140 172h2v2h-2zM142 172h2v2h-2zM144 172h2v2h-2zM138 174h2v2h-2zM140 174h2v2h-2zM142 174h2v2h-2zM140 176h2v2h-2z"/><path fill="#f66" d="M166 168h2v2h-2zM168 168h2v2h-2zM162 170h2v2h-2zM164 170h2v2h-2zM166 170h2v2h-2zM168 170h2v2h-2zM164 172h2v2h-2zM166 172h2v2h-2zM168 172h2v2h-2zM170 172h2v2h-2zM164 174h2v2h-2zM166 174h2v2h-2zM168 174h2v2h-2z"/><path fill="#f54" d="M180 168h2v2h-2zM182 168h2v2h-2zM180 170h2v2h-2zM182 170h2v2h-2zM184 170h2v2h-2zM180 172h2v2h-2zM182 172h2v2h-2zM184 172h2v2h-2zM182 174h2v2h-2z"/><path fill="#f41" d="M194 168h2v2h-2zM196 170h2v2h-2zM198 172h2v2h-2z"/><path fill="#f40" d="M196 168h2v2h-2zM198 168h2v2h-2zM198 170h2v2h-2zM200 170h2v2h-2z"/><path fill="#0cf" d="M12 170h2v2h-2zM14 170h2v2h-2zM16 170h2v2h-2zM18 170h2v2h-2zM20 170h2v2h-2zM22 170h2v2h-2zM24 170h2v2h-2zM26 170h2v2h-2zM28 170h2v2h-2zM30 170h2v2h-2zM12 172h2v2h-2zM14 172h2v2h-2zM16 172h2v2h-2zM18 172h2v2h-2zM20 172h2v2h-2zM22 172h2v2h-2zM24 172h2v2h-2zM26 172h2v2h-2zM28 172h2v2h-2zM30 172h2v2h-2zM32 172h2v2h-2zM34 172h2v2h-2zM36 172h2v2h-2zM38 172h2v2h-2zM40 172h2v2h-2zM42 172h2v2h-2zM44 172h2v2h-2zM46 172h2v2h-2zM48 172h2v2h-2zM50 172h2v2h-2zM52 172h2v2h-2zM54 172h2v2h-2zM56 172h2v2h-2zM58 172h2v2h-2zM12 174h2v2h-2zM14 174h2v2h-2zM16 174h2v2h-2zM18 174h2v2h-2zM20 174h2v2h-2zM22 174h2v2h-2zM24 174h2v2h-2zM26 174h2v2h-2zM28 174h2v2h-2zM30 174h2v2h-2zM32 174h2v2h-2zM34 174h2v2h-2zM36 174h2v2h-2zM38 174h2v2h-2zM40 174h2v2h-2zM42 174h2v2h-2zM44 174h2v2h-2zM46 174h2v2h-2zM48 174h2v2h-2zM50 174h2v2h-2zM52 174h2v2h-2zM54 174h2v2h-2zM56 174h2v2h-2zM58 174h2v2h-2zM12 176h2v2h-2zM14 176h2v2h-2zM16 176h2v2h-2zM18 176h2v2h-2zM20 176h2v2h-2zM22 176h2v2h-2zM24 176h2v2h-2zM26 176h2v2h-2zM28 176h2v2h-2zM30 176h2v2h-2zM32 176h2v2h-2zM34 176h2v2h-2zM36 176h2v2h-2zM38 176h2v2h-2zM40 176h2v2h-2zM42 176h2v2h-2zM44 176h2v2h-2zM46 176h2v2h-2zM48 176h2v2h-2zM50 176h2v2h-2zM52 176h2v2h-2zM54 176h2v2h-2zM56 176h2v2h-2zM58 176h2v2h-2zM12 178h2v2h-2zM14 178h2v2h-2zM16 178h2v2h-2zM18 178h2v2h-2zM20 178h2v2h-2zM22 178h2v2h-2zM24 178h2v2h-2zM26 178h2v2h-2zM28 178h2v2h-2zM30 178h2v2h-2zM32 178h2v2h-2zM34 178h2v2h-2zM36 178h2v2h-2zM38 178h2v2h-2zM40 178h2v2h-2zM42 178h2v2h-2zM44 178h2v2h-2zM46 178h2v2h-2zM48 178h2v2h-2zM50 178h2v2h-2zM52 178h2v2h-2zM54 178h2v2h-2zM56 178h2v2h-2zM58 178h2v2h-2zM14 180h2v2h-2zM16 180h2v2h-2zM18 180h2v2h-2zM20 180h2v2h-2zM22 180h2v2h-2zM24 180h2v2h-2zM26 180h2v2h-2zM28 180h2v2h-2zM30 180h2v2h-2zM32 180h2v2h-2zM34 180h2v2h-2zM36 180h2v2h-2zM38 180h2v2h-2zM40 180h2v2h-2zM42 180h2v2h-2zM44 180h2v2h-2zM46 180h2v2h-2zM48 180h2v2h-2zM50 180h2v2h-2zM52 180h2v2h-2zM54 180h2v2h-2zM56 180h2v2h-2z"/><path fill="#2df" d="M60 170h2v2h-2z"/><path fill="#fbd" d="M112 170h2v2h-2zM114 170h2v2h-2zM110 172h2v2h-2zM112 172h2v2h-2zM114 172h2v2h-2zM110 174h2v2h-2zM112 174h2v2h-2zM114 174h2v2h-2zM112 176h2v2h-2z"/><path fill="#fac" d="M120 170h2v2h-2zM118 172h2v2h-2zM120 172h2v2h-2zM116 174h2v2h-2zM118 174h2v2h-2zM120 174h2v2h-2zM116 176h2v2h-2zM118 176h2v2h-2zM120 176h2v2h-2zM118 178h2v2h-2z"/><path fill="#f78" d="M150 170h2v2h-2zM152 170h2v2h-2zM148 172h2v2h-2zM150 172h2v2h-2zM152 172h2v2h-2zM146 174h2v2h-2zM148 174h2v2h-2zM150 174h2v2h-2zM152 174h2v2h-2zM154 174h2v2h-2zM148 176h2v2h-2zM150 176h2v2h-2zM152 176h2v2h-2zM148 178h2v2h-2zM150 178h2v2h-2z"/><path fill="#f55" d="M176 170h2v2h-2zM178 170h2v2h-2zM174 172h2v2h-2zM176 172h2v2h-2zM178 172h2v2h-2zM174 174h2v2h-2zM176 174h2v2h-2zM178 174h2v2h-2zM180 174h2v2h-2zM176 176h2v2h-2zM178 176h2v2h-2z"/><path fill="#f43" d="M190 170h2v2h-2zM188 172h2v2h-2zM190 172h2v2h-2zM192 172h2v2h-2zM190 174h2v2h-2zM192 174h2v2h-2zM194 174h2v2h-2z"/><path fill="#f42" d="M192 170h2v2h-2zM194 170h2v2h-2zM194 172h2v2h-2zM196 172h2v2h-2z"/><path fill="#2cf" d="M60 172h2v2h-2z"/><path fill="#4cf" d="M62 172h2v2h-2zM62 174h2v2h-2zM62 176h2v2h-2zM62 178h2v2h-2zM62 180h2v2h-2z"/><path fill="#5cf" d="M64 172h2v2h-2zM64 174h2v2h-2zM64 176h2v2h-2zM64 178h2v2h-2zM64 180h2v2h-2z"/><path fill="#6cf" d="M66 172h2v2h-2zM66 174h2v2h-2zM66 176h2v2h-2zM66 178h2v2h-2zM66 180h2v2h-2z"/><path fill="#7cf" d="M68 172h2v2h-2zM68 174h2v2h-2zM70 174h2v2h-2zM68 176h2v2h-2zM70 176h2v2h-2zM68 178h2v2h-2zM70 178h2v2h-2zM68 180h2v2h-2zM70 180h2v2h-2z"/><path fill="#f9b" d="M126 172h2v2h-2zM128 172h2v2h-2zM124 174h2v2h-2zM126 174h2v2h-2zM128 174h2v2h-2zM124 176h2v2h-2zM126 176h2v2h-2zM128 176h2v2h-2zM130 176h2v2h-2zM124 178h2v2h-2zM126 178h2v2h-2zM128 178h2v2h-2zM126 180h2v2h-2z"/><path fill="#f8a" d="M136 172h2v2h-2zM134 174h2v2h-2zM136 174h2v2h-2zM132 176h2v2h-2zM134 176h2v2h-2zM136 176h2v2h-2zM138 176h2v2h-2zM132 178h2v2h-2zM134 178h2v2h-2zM136 178h2v2h-2zM138 178h2v2h-2zM132 180h2v2h-2zM134 180h2v2h-2zM136 180h2v2h-2zM134 182h2v2h-2z"/><path fill="#f67" d="M160 172h2v2h-2zM162 172h2v2h-2zM158 174h2v2h-2zM160 174h2v2h-2zM162 174h2v2h-2zM156 176h2v2h-2zM158 176h2v2h-2zM160 176h2v2h-2zM162 176h2v2h-2zM164 176h2v2h-2zM158 178h2v2h-2zM160 178h2v2h-2zM162 178h2v2h-2z"/><path fill="#f44" d="M186 172h2v2h-2zM184 174h2v2h-2zM186 174h2v2h-2zM188 174h2v2h-2zM184 176h2v2h-2zM186 176h2v2h-2zM188 176h2v2h-2zM190 176h2v2h-2zM186 178h2v2h-2z"/><path fill="#f30" d="M200 172h2v2h-2zM202 172h2v2h-2zM202 174h2v2h-2zM204 174h2v2h-2z"/><path fill="#3cf" d="M60 174h2v2h-2zM60 176h2v2h-2zM60 178h2v2h-2zM60 180h2v2h-2z"/><path fill="#8cf" d="M72 174h2v2h-2zM74 174h2v2h-2zM72 176h2v2h-2zM74 176h2v2h-2zM72 178h2v2h-2zM74 178h2v2h-2zM72 180h2v2h-2z"/><path fill="#9cf" d="M76 174h2v2h-2zM76 176h2v2h-2zM76 178h2v2h-2zM74 180h2v2h-2zM76 180h2v2h-2z"/><path fill="#acf" d="M78 174h2v2h-2zM80 174h2v2h-2zM78 176h2v2h-2zM80 176h2v2h-2zM78 178h2v2h-2zM80 178h2v2h-2zM82 178h2v2h-2zM78 180h2v2h-2zM80 180h2v2h-2zM82 180h2v2h-2z"/><path fill="#bcf" d="M82 174h2v2h-2zM84 174h2v2h-2zM86 174h2v2h-2zM82 176h2v2h-2zM84 176h2v2h-2zM86 176h2v2h-2zM84 178h2v2h-2zM86 178h2v2h-2zM84 180h2v2h-2zM86 180h2v2h-2z"/><path fill="#ccf" d="M88 174h2v2h-2zM90 174h2v2h-2zM88 176h2v2h-2zM90 176h2v2h-2zM88 178h2v2h-2zM90 178h2v2h-2zM88 180h2v2h-2zM90 180h2v2h-2z"/><path fill="#dcf" d="M92 174h2v2h-2zM94 174h2v2h-2zM92 176h2v2h-2zM94 176h2v2h-2zM92 178h2v2h-2zM94 178h2v2h-2zM92 180h2v2h-2zM94 180h2v2h-2z"/><path fill="#ecf" d="M96 174h2v2h-2zM98 174h2v2h-2zM96 176h2v2h-2zM98 176h2v2h-2zM100 176h2v2h-2zM96 178h2v2h-2zM98 178h2v2h-2zM100 178h2v2h-2zM96 180h2v2h-2zM98 180h2v2h-2zM100 180h2v2h-2z"/><path fill="#fcf" d="M100 174h2v2h-2zM102 174h2v2h-2zM104 174h2v2h-2zM102 176h2v2h-2zM104 176h2v2h-2zM102 178h2v2h-2zM104 178h2v2h-2z"/><path fill="#fbe" d="M108 174h2v2h-2zM108 176h2v2h-2zM110 176h2v2h-2zM106 178h2v2h-2zM108 178h2v2h-2zM110 178h2v2h-2zM106 180h2v2h-2zM108 180h2v2h-2zM108 182h2v2h-2z"/><path fill="#f79" d="M144 174h2v2h-2zM142 176h2v2h-2zM144 176h2v2h-2zM146 176h2v2h-2zM140 178h2v2h-2zM142 178h2v2h-2zM144 178h2v2h-2zM146 178h2v2h-2zM142 180h2v2h-2zM144 180h2v2h-2zM146 180h2v2h-2zM142 182h2v2h-2zM144 182h2v2h-2z"/><path fill="#f56" d="M170 174h2v2h-2zM172 174h2v2h-2zM166 176h2v2h-2zM168 176h2v2h-2zM170 176h2v2h-2zM172 176h2v2h-2zM174 176h2v2h-2zM168 178h2v2h-2zM170 178h2v2h-2zM172 178h2v2h-2zM174 178h2v2h-2zM170 180h2v2h-2z"/><path fill="#f32" d="M196 174h2v2h-2zM198 174h2v2h-2zM198 176h2v2h-2zM200 176h2v2h-2z"/><path fill="#f31" d="M200 174h2v2h-2z"/><path fill="#fad" d="M114 176h2v2h-2zM112 178h2v2h-2zM114 178h2v2h-2zM116 178h2v2h-2zM112 180h2v2h-2zM114 180h2v2h-2zM116 180h2v2h-2zM112 182h2v2h-2zM114 182h2v2h-2z"/><path fill="#f9c" d="M122 176h2v2h-2zM120 178h2v2h-2zM122 178h2v2h-2zM118 180h2v2h-2zM120 180h2v2h-2zM122 180h2v2h-2zM124 180h2v2h-2zM118 182h2v2h-2zM120 182h2v2h-2zM122 182h2v2h-2zM124 182h2v2h-2zM120 184h2v2h-2z"/><path fill="#f68" d="M154 176h2v2h-2zM152 178h2v2h-2zM154 178h2v2h-2zM156 178h2v2h-2zM150 180h2v2h-2zM152 180h2v2h-2zM154 180h2v2h-2zM156 180h2v2h-2zM158 180h2v2h-2zM152 182h2v2h-2zM154 182h2v2h-2zM156 182h2v2h-2zM152 184h2v2h-2z"/><path fill="#f45" d="M180 176h2v2h-2zM182 176h2v2h-2zM178 178h2v2h-2zM180 178h2v2h-2zM182 178h2v2h-2zM184 178h2v2h-2zM178 180h2v2h-2zM180 180h2v2h-2zM182 180h2v2h-2z"/><path fill="#f33" d="M192 176h2v2h-2zM194 176h2v2h-2zM196 176h2v2h-2zM194 178h2v2h-2zM196 178h2v2h-2z"/><path fill="#f21" d="M202 176h2v2h-2zM204 178h2v2h-2z"/><path fill="#f20" d="M204 176h2v2h-2zM206 176h2v2h-2z"/><path fill="#f8b" d="M130 178h2v2h-2zM128 180h2v2h-2zM130 180h2v2h-2zM126 182h2v2h-2zM128 182h2v2h-2zM130 182h2v2h-2zM132 182h2v2h-2zM126 184h2v2h-2zM128 184h2v2h-2zM130 184h2v2h-2zM128 186h2v2h-2z"/><path fill="#f57" d="M164 178h2v2h-2zM166 178h2v2h-2zM160 180h2v2h-2zM162 180h2v2h-2zM164 180h2v2h-2zM166 180h2v2h-2zM168 180h2v2h-2zM160 182h2v2h-2zM162 182h2v2h-2zM164 182h2v2h-2zM166 182h2v2h-2zM168 182h2v2h-2zM162 184h2v2h-2zM164 184h2v2h-2z"/><path fill="#f46" d="M176 178h2v2h-2zM172 180h2v2h-2zM174 180h2v2h-2zM176 180h2v2h-2zM170 182h2v2h-2zM172 182h2v2h-2zM174 182h2v2h-2zM176 182h2v2h-2zM178 182h2v2h-2zM172 184h2v2h-2zM174 184h2v2h-2z"/><path fill="#f34" d="M188 178h2v2h-2zM190 178h2v2h-2zM192 178h2v2h-2zM188 180h2v2h-2zM190 180h2v2h-2zM192 180h2v2h-2z"/><path fill="#f23" d="M198 178h2v2h-2zM196 180h2v2h-2zM198 180h2v2h-2zM200 180h2v2h-2z"/><path fill="#f22" d="M200 178h2v2h-2zM202 178h2v2h-2z"/><path fill="#f10" d="M206 178h2v2h-2zM208 178h2v2h-2z"/><path fill="#1cf" d="M58 180h2v2h-2z"/><path fill="#fbf" d="M102 180h2v2h-2zM104 180h2v2h-2zM102 182h2v2h-2zM104 182h2v2h-2zM106 182h2v2h-2zM102 184h2v2h-2zM104 184h2v2h-2zM106 184h2v2h-2zM102 186h2v2h-2zM104 186h2v2h-2z"/><path fill="#fae" d="M110 180h2v2h-2zM110 182h2v2h-2zM108 184h2v2h-2zM110 184h2v2h-2zM112 184h2v2h-2zM108 186h2v2h-2zM110 186h2v2h-2zM108 188h2v2h-2z"/><path fill="#f7a" d="M138 180h2v2h-2zM140 180h2v2h-2zM136 182h2v2h-2zM138 182h2v2h-2zM140 182h2v2h-2zM134 184h2v2h-2zM136 184h2v2h-2zM138 184h2v2h-2zM140 184h2v2h-2zM142 184h2v2h-2zM136 186h2v2h-2zM138 186h2v2h-2zM136 188h2v2h-2z"/><path fill="#f69" d="M148 180h2v2h-2zM146 182h2v2h-2zM148 182h2v2h-2zM150 182h2v2h-2zM144 184h2v2h-2zM146 184h2v2h-2zM148 184h2v2h-2zM150 184h2v2h-2zM144 186h2v2h-2zM146 186h2v2h-2zM148 186h2v2h-2zM150 186h2v2h-2zM144 188h2v2h-2zM146 188h2v2h-2z"/><path fill="#f35" d="M184 180h2v2h-2zM186 180h2v2h-2zM180 182h2v2h-2zM182 182h2v2h-2zM184 182h2v2h-2zM186 182h2v2h-2zM188 182h2v2h-2zM182 184h2v2h-2zM184 184h2v2h-2z"/><path fill="#f24" d="M194 180h2v2h-2zM190 182h2v2h-2zM192 182h2v2h-2zM194 182h2v2h-2zM196 182h2v2h-2z"/><path fill="#f12" d="M202 180h2v2h-2zM204 180h2v2h-2z"/><path fill="#f01" d="M206 180h2v2h-2z"/><path fill="#f00" d="M208 180h2v2h-2z"/><path fill="#0bf" d="M14 182h2v2h-2zM16 182h2v2h-2zM18 182h2v2h-2zM20 182h2v2h-2zM22 182h2v2h-2zM24 182h2v2h-2zM26 182h2v2h-2zM28 182h2v2h-2zM30 182h2v2h-2zM32 182h2v2h-2zM34 182h2v2h-2zM36 182h2v2h-2zM38 182h2v2h-2zM40 182h2v2h-2zM42 182h2v2h-2zM44 182h2v2h-2zM46 182h2v2h-2zM48 182h2v2h-2zM50 182h2v2h-2zM52 182h2v2h-2zM54 182h2v2h-2zM56 182h2v2h-2zM14 184h2v2h-2zM16 184h2v2h-2zM18 184h2v2h-2zM20 184h2v2h-2zM22 184h2v2h-2zM24 184h2v2h-2zM26 184h2v2h-2zM28 184h2v2h-2zM30 184h2v2h-2zM32 184h2v2h-2zM34 184h2v2h-2zM36 184h2v2h-2zM38 184h2v2h-2zM40 184h2v2h-2zM42 184h2v2h-2zM44 184h2v2h-2zM46 184h2v2h-2zM48 184h2v2h-2zM50 184h2v2h-2zM52 184h2v2h-2zM54 184h2v2h-2zM56 184h2v2h-2zM14 186h2v2h-2zM16 186h2v2h-2zM18 186h2v2h-2zM20 186h2v2h-2zM22 186h2v2h-2zM24 186h2v2h-2zM26 186h2v2h-2zM28 186h2v2h-2zM30 186h2v2h-2zM32 186h2v2h-2zM34 186h2v2h-2zM36 186h2v2h-2zM38 186h2v2h-2zM40 186h2v2h-2zM42 186h2v2h-2zM44 186h2v2h-2zM46 186h2v2h-2zM48 186h2v2h-2zM50 186h2v2h-2zM52 186h2v2h-2zM54 186h2v2h-2zM56 186h2v2h-2zM16 188h2v2h-2zM18 188h2v2h-2zM20 188h2v2h-2zM22 188h2v2h-2zM24 188h2v2h-2zM26 188h2v2h-2zM28 188h2v2h-2zM30 188h2v2h-2zM32 188h2v2h-2zM34 188h2v2h-2zM36 188h2v2h-2zM38 188h2v2h-2zM40 188h2v2h-2zM42 188h2v2h-2zM44 188h2v2h-2zM46 188h2v2h-2zM48 188h2v2h-2zM50 188h2v2h-2zM52 188h2v2h-2zM54 188h2v2h-2zM56 188h2v2h-2zM16 190h2v2h-2zM18 190h2v2h-2zM20 190h2v2h-2zM22 190h2v2h-2zM24 190h2v2h-2zM26 190h2v2h-2zM28 190h2v2h-2zM30 190h2v2h-2zM32 190h2v2h-2zM34 190h2v2h-2zM36 190h2v2h-2zM38 190h2v2h-2zM40 190h2v2h-2zM42 190h2v2h-2zM44 190h2v2h-2zM46 190h2v2h-2zM16 192h2v2h-2z"/><path fill="#2bf" d="M58 182h2v2h-2zM58 184h2v2h-2zM58 186h2v2h-2zM58 188h2v2h-2z"/><path fill="#3bf" d="M60 182h2v2h-2z"/><path fill="#4bf" d="M62 182h2v2h-2zM60 184h2v2h-2zM60 186h2v2h-2zM60 188h2v2h-2z"/><path fill="#5bf" d="M64 182h2v2h-2zM62 184h2v2h-2zM64 184h2v2h-2zM62 186h2v2h-2zM62 188h2v2h-2z"/><path fill="#6bf" d="M66 182h2v2h-2zM66 184h2v2h-2zM64 186h2v2h-2zM66 186h2v2h-2zM64 188h2v2h-2zM66 188h2v2h-2z"/><path fill="#7bf" d="M68 182h2v2h-2zM70 182h2v2h-2zM68 184h2v2h-2zM70 184h2v2h-2zM68 186h2v2h-2zM70 186h2v2h-2zM68 188h2v2h-2z"/><path fill="#8bf" d="M72 182h2v2h-2zM72 184h2v2h-2zM72 186h2v2h-2zM70 188h2v2h-2zM72 188h2v2h-2z"/><path fill="#9bf" d="M74 182h2v2h-2zM76 182h2v2h-2zM74 184h2v2h-2zM76 184h2v2h-2zM74 186h2v2h-2zM76 186h2v2h-2zM74 188h2v2h-2zM76 188h2v2h-2z"/><path fill="#abf" d="M78 182h2v2h-2zM80 182h2v2h-2zM82 182h2v2h-2zM78 184h2v2h-2zM80 184h2v2h-2zM82 184h2v2h-2zM78 186h2v2h-2zM80 186h2v2h-2zM82 186h2v2h-2z"/><path fill="#bbf" d="M84 182h2v2h-2zM86 182h2v2h-2zM84 184h2v2h-2zM86 184h2v2h-2zM84 186h2v2h-2zM86 186h2v2h-2z"/><path fill="#cbf" d="M88 182h2v2h-2zM90 182h2v2h-2zM88 184h2v2h-2zM90 184h2v2h-2zM88 186h2v2h-2zM90 186h2v2h-2z"/><path fill="#dbf" d="M92 182h2v2h-2zM94 182h2v2h-2zM96 182h2v2h-2zM92 184h2v2h-2zM94 184h2v2h-2zM96 184h2v2h-2zM92 186h2v2h-2zM94 186h2v2h-2zM96 186h2v2h-2z"/><path fill="#ebf" d="M98 182h2v2h-2zM100 182h2v2h-2zM98 184h2v2h-2zM100 184h2v2h-2zM98 186h2v2h-2zM100 186h2v2h-2z"/><path fill="#f9d" d="M116 182h2v2h-2zM114 184h2v2h-2zM116 184h2v2h-2zM118 184h2v2h-2zM114 186h2v2h-2zM116 186h2v2h-2zM118 186h2v2h-2zM114 188h2v2h-2zM116 188h2v2h-2zM114 190h2v2h-2z"/><path fill="#f58" d="M158 182h2v2h-2zM154 184h2v2h-2zM156 184h2v2h-2zM158 184h2v2h-2zM160 184h2v2h-2zM154 186h2v2h-2zM156 186h2v2h-2zM158 186h2v2h-2zM160 186h2v2h-2zM154 188h2v2h-2zM156 188h2v2h-2z"/><path fill="#f13" d="M198 182h2v2h-2zM200 182h2v2h-2z"/><path fill="#f03" d="M202 182h2v2h-2zM200 184h2v2h-2zM202 184h2v2h-2z"/><path fill="#f02" d="M204 182h2v2h-2zM206 182h2v2h-2z"/><path fill="#f8c" d="M122 184h2v2h-2zM124 184h2v2h-2zM120 186h2v2h-2zM122 186h2v2h-2zM124 186h2v2h-2zM126 186h2v2h-2zM120 188h2v2h-2zM122 188h2v2h-2zM124 188h2v2h-2zM126 188h2v2h-2zM122 190h2v2h-2zM124 190h2v2h-2z"/><path fill="#f7b" d="M132 184h2v2h-2zM130 186h2v2h-2zM132 186h2v2h-2zM134 186h2v2h-2zM128 188h2v2h-2zM130 188h2v2h-2zM132 188h2v2h-2zM134 188h2v2h-2zM128 190h2v2h-2zM130 190h2v2h-2zM132 190h2v2h-2zM130 192h2v2h-2z"/><path fill="#f47" d="M166 184h2v2h-2zM168 184h2v2h-2zM170 184h2v2h-2zM164 186h2v2h-2zM166 186h2v2h-2zM168 186h2v2h-2zM170 186h2v2h-2zM164 188h2v2h-2zM166 188h2v2h-2zM168 188h2v2h-2z"/><path fill="#f36" d="M176 184h2v2h-2zM178 184h2v2h-2zM180 184h2v2h-2zM174 186h2v2h-2zM176 186h2v2h-2zM178 186h2v2h-2zM180 186h2v2h-2zM174 188h2v2h-2zM176 188h2v2h-2z"/><path fill="#f25" d="M186 184h2v2h-2zM188 184h2v2h-2zM190 184h2v2h-2zM184 186h2v2h-2zM186 186h2v2h-2z"/><path fill="#f14" d="M192 184h2v2h-2zM194 184h2v2h-2z"/><path fill="#f04" d="M196 184h2v2h-2zM198 184h2v2h-2zM192 186h2v2h-2zM194 186h2v2h-2zM196 186h2v2h-2zM198 186h2v2h-2z"/><path fill="#faf" d="M106 186h2v2h-2zM104 188h2v2h-2zM106 188h2v2h-2zM104 190h2v2h-2zM106 190h2v2h-2zM104 192h2v2h-2z"/><path fill="#f9e" d="M112 186h2v2h-2zM110 188h2v2h-2zM112 188h2v2h-2zM108 190h2v2h-2zM110 190h2v2h-2zM112 190h2v2h-2zM110 192h2v2h-2zM112 192h2v2h-2zM110 194h2v2h-2z"/><path fill="#f6a" d="M140 186h2v2h-2zM142 186h2v2h-2zM138 188h2v2h-2zM140 188h2v2h-2zM142 188h2v2h-2zM136 190h2v2h-2zM138 190h2v2h-2zM140 190h2v2h-2zM142 190h2v2h-2zM138 192h2v2h-2zM140 192h2v2h-2z"/><path fill="#f59" d="M152 186h2v2h-2zM148 188h2v2h-2zM150 188h2v2h-2zM152 188h2v2h-2zM146 190h2v2h-2zM148 190h2v2h-2zM150 190h2v2h-2zM152 190h2v2h-2zM154 190h2v2h-2zM146 192h2v2h-2zM148 192h2v2h-2zM150 192h2v2h-2z"/><path fill="#f48" d="M162 186h2v2h-2zM158 188h2v2h-2zM160 188h2v2h-2zM162 188h2v2h-2zM156 190h2v2h-2zM158 190h2v2h-2zM160 190h2v2h-2zM162 190h2v2h-2zM164 190h2v2h-2zM156 192h2v2h-2zM158 192h2v2h-2zM160 192h2v2h-2z"/><path fill="#f37" d="M172 186h2v2h-2zM170 188h2v2h-2zM172 188h2v2h-2zM166 190h2v2h-2zM168 190h2v2h-2zM170 190h2v2h-2zM172 190h2v2h-2zM168 192h2v2h-2z"/><path fill="#f26" d="M182 186h2v2h-2zM178 188h2v2h-2zM180 188h2v2h-2zM182 188h2v2h-2zM176 190h2v2h-2zM178 190h2v2h-2z"/><path fill="#f15" d="M188 186h2v2h-2zM190 186h2v2h-2zM184 188h2v2h-2zM186 188h2v2h-2z"/><path fill="#aaf" d="M78 188h2v2h-2zM80 188h2v2h-2zM82 188h2v2h-2zM78 190h2v2h-2zM80 190h2v2h-2zM82 190h2v2h-2zM78 192h2v2h-2zM80 192h2v2h-2zM82 192h2v2h-2zM78 194h2v2h-2zM80 194h2v2h-2zM82 194h2v2h-2z"/><path fill="#baf" d="M84 188h2v2h-2zM86 188h2v2h-2zM84 190h2v2h-2zM86 190h2v2h-2zM84 192h2v2h-2zM86 192h2v2h-2zM84 194h2v2h-2zM86 194h2v2h-2z"/><path fill="#caf" d="M88 188h2v2h-2zM90 188h2v2h-2zM92 188h2v2h-2zM88 190h2v2h-2zM90 190h2v2h-2zM92 190h2v2h-2zM88 192h2v2h-2zM90 192h2v2h-2zM92 192h2v2h-2zM88 194h2v2h-2zM90 194h2v2h-2z"/><path fill="#daf" d="M94 188h2v2h-2zM96 188h2v2h-2zM94 190h2v2h-2zM96 190h2v2h-2zM94 192h2v2h-2zM96 192h2v2h-2z"/><path fill="#eaf" d="M98 188h2v2h-2zM100 188h2v2h-2zM102 188h2v2h-2zM98 190h2v2h-2zM100 190h2v2h-2zM102 190h2v2h-2zM98 192h2v2h-2zM100 192h2v2h-2zM102 192h2v2h-2z"/><path fill="#f8d" d="M118 188h2v2h-2zM116 190h2v2h-2zM118 190h2v2h-2zM120 190h2v2h-2zM116 192h2v2h-2zM118 192h2v2h-2zM120 192h2v2h-2zM116 194h2v2h-2zM118 194h2v2h-2zM116 196h2v2h-2z"/><path fill="#f05" d="M188 188h2v2h-2zM190 188h2v2h-2zM192 188h2v2h-2zM186 190h2v2h-2zM188 190h2v2h-2z"/><path fill="#0af" d="M48 190h2v2h-2zM50 190h2v2h-2zM52 190h2v2h-2zM54 190h2v2h-2zM56 190h2v2h-2zM18 192h2v2h-2zM20 192h2v2h-2zM22 192h2v2h-2zM24 192h2v2h-2zM26 192h2v2h-2zM28 192h2v2h-2zM30 192h2v2h-2zM32 192h2v2h-2zM34 192h2v2h-2zM36 192h2v2h-2zM38 192h2v2h-2zM40 192h2v2h-2zM42 192h2v2h-2zM44 192h2v2h-2zM46 192h2v2h-2zM48 192h2v2h-2zM50 192h2v2h-2zM52 192h2v2h-2zM54 192h2v2h-2zM16 194h2v2h-2zM18 194h2v2h-2zM20 194h2v2h-2zM22 194h2v2h-2zM24 194h2v2h-2zM26 194h2v2h-2zM28 194h2v2h-2zM30 194h2v2h-2zM32 194h2v2h-2zM34 194h2v2h-2zM36 194h2v2h-2zM38 194h2v2h-2zM40 194h2v2h-2zM42 194h2v2h-2zM44 194h2v2h-2zM46 194h2v2h-2zM48 194h2v2h-2zM50 194h2v2h-2zM52 194h2v2h-2zM54 194h2v2h-2zM18 196h2v2h-2zM20 196h2v2h-2zM22 196h2v2h-2zM24 196h2v2h-2zM26 196h2v2h-2zM28 196h2v2h-2zM30 196h2v2h-2zM32 196h2v2h-2zM34 196h2v2h-2zM36 196h2v2h-2zM38 196h2v2h-2zM40 196h2v2h-2zM42 196h2v2h-2zM44 196h2v2h-2zM46 196h2v2h-2zM48 196h2v2h-2zM50 196h2v2h-2zM52 196h2v2h-2zM54 196h2v2h-2zM18 198h2v2h-2zM20 198h2v2h-2zM22 198h2v2h-2zM24 198h2v2h-2zM26 198h2v2h-2zM28 198h2v2h-2zM30 198h2v2h-2zM32 198h2v2h-2zM34 198h2v2h-2zM36 198h2v2h-2zM38 198h2v2h-2zM40 198h2v2h-2zM42 198h2v2h-2zM44 198h2v2h-2zM46 198h2v2h-2zM48 198h2v2h-2zM50 198h2v2h-2zM52 198h2v2h-2zM54 198h2v2h-2zM18 200h2v2h-2zM20 200h2v2h-2zM22 200h2v2h-2zM24 200h2v2h-2zM26 200h2v2h-2zM28 200h2v2h-2zM30 200h2v2h-2zM32 200h2v2h-2zM34 200h2v2h-2zM36 200h2v2h-2zM38 200h2v2h-2zM40 200h2v2h-2zM42 200h2v2h-2zM20 202h2v2h-2zM22 202h2v2h-2zM24 202h2v2h-2zM26 202h2v2h-2z"/><path fill="#3af" d="M58 190h2v2h-2zM58 192h2v2h-2zM58 194h2v2h-2zM58 196h2v2h-2zM58 198h2v2h-2z"/><path fill="#4af" d="M60 190h2v2h-2zM60 192h2v2h-2zM60 194h2v2h-2zM60 196h2v2h-2z"/><path fill="#5af" d="M62 190h2v2h-2zM62 192h2v2h-2zM62 194h2v2h-2zM62 196h2v2h-2z"/><path fill="#6af" d="M64 190h2v2h-2zM66 190h2v2h-2zM64 192h2v2h-2zM66 192h2v2h-2zM64 194h2v2h-2zM66 194h2v2h-2zM64 196h2v2h-2zM66 196h2v2h-2z"/><path fill="#7af" d="M68 190h2v2h-2zM68 192h2v2h-2zM68 194h2v2h-2zM68 196h2v2h-2z"/><path fill="#8af" d="M70 190h2v2h-2zM72 190h2v2h-2zM70 192h2v2h-2zM72 192h2v2h-2zM70 194h2v2h-2zM72 194h2v2h-2zM70 196h2v2h-2zM72 196h2v2h-2z"/><path fill="#9af" d="M74 190h2v2h-2zM76 190h2v2h-2zM74 192h2v2h-2zM76 192h2v2h-2zM74 194h2v2h-2zM76 194h2v2h-2zM74 196h2v2h-2z"/><path fill="#f7c" d="M126 190h2v2h-2zM122 192h2v2h-2zM124 192h2v2h-2zM126 192h2v2h-2zM128 192h2v2h-2zM122 194h2v2h-2zM124 194h2v2h-2zM126 194h2v2h-2zM128 194h2v2h-2zM124 196h2v2h-2z"/><path fill="#f6b" d="M134 190h2v2h-2zM132 192h2v2h-2zM134 192h2v2h-2zM136 192h2v2h-2zM130 194h2v2h-2zM132 194h2v2h-2zM134 194h2v2h-2zM136 194h2v2h-2zM130 196h2v2h-2zM132 196h2v2h-2zM134 196h2v2h-2z"/><path fill="#f5a" d="M144 190h2v2h-2zM142 192h2v2h-2zM144 192h2v2h-2zM138 194h2v2h-2zM140 194h2v2h-2zM142 194h2v2h-2zM144 194h2v2h-2zM146 194h2v2h-2zM140 196h2v2h-2zM142 196h2v2h-2zM140 198h2v2h-2z"/><path fill="#f27" d="M174 190h2v2h-2zM170 192h2v2h-2zM172 192h2v2h-2zM174 192h2v2h-2zM168 194h2v2h-2zM170 194h2v2h-2z"/><path fill="#f16" d="M180 190h2v2h-2zM182 190h2v2h-2zM178 192h2v2h-2z"/><path fill="#f06" d="M184 190h2v2h-2zM180 192h2v2h-2zM182 192h2v2h-2zM184 192h2v2h-2zM180 194h2v2h-2z"/><path fill="#1af" d="M56 192h2v2h-2zM56 194h2v2h-2z"/><path fill="#f9f" d="M106 192h2v2h-2zM108 192h2v2h-2zM104 194h2v2h-2zM106 194h2v2h-2zM108 194h2v2h-2zM104 196h2v2h-2zM106 196h2v2h-2zM108 196h2v2h-2z"/><path fill="#f8e" d="M114 192h2v2h-2zM112 194h2v2h-2zM114 194h2v2h-2zM110 196h2v2h-2zM112 196h2v2h-2zM114 196h2v2h-2zM110 198h2v2h-2zM112 198h2v2h-2zM114 198h2v2h-2z"/><path fill="#f49" d="M152 192h2v2h-2zM154 192h2v2h-2zM148 194h2v2h-2zM150 194h2v2h-2zM152 194h2v2h-2zM154 194h2v2h-2zM156 194h2v2h-2zM148 196h2v2h-2zM150 196h2v2h-2zM152 196h2v2h-2z"/><path fill="#f38" d="M162 192h2v2h-2zM164 192h2v2h-2zM166 192h2v2h-2zM158 194h2v2h-2zM160 194h2v2h-2zM162 194h2v2h-2zM164 194h2v2h-2zM158 196h2v2h-2zM160 196h2v2h-2z"/><path fill="#f17" d="M176 192h2v2h-2zM172 194h2v2h-2z"/><path fill="#c9f" d="M92 194h2v2h-2zM88 196h2v2h-2zM90 196h2v2h-2zM92 196h2v2h-2zM88 198h2v2h-2zM90 198h2v2h-2zM92 198h2v2h-2zM90 200h2v2h-2zM92 200h2v2h-2z"/><path fill="#d9f" d="M94 194h2v2h-2zM96 194h2v2h-2zM94 196h2v2h-2zM96 196h2v2h-2zM98 196h2v2h-2zM94 198h2v2h-2zM96 198h2v2h-2zM98 198h2v2h-2zM94 200h2v2h-2z"/><path fill="#e9f" d="M98 194h2v2h-2zM100 194h2v2h-2zM102 194h2v2h-2zM100 196h2v2h-2zM102 196h2v2h-2zM100 198h2v2h-2zM102 198h2v2h-2zM104 198h2v2h-2z"/><path fill="#f7d" d="M120 194h2v2h-2zM118 196h2v2h-2zM120 196h2v2h-2zM122 196h2v2h-2zM116 198h2v2h-2zM118 198h2v2h-2zM120 198h2v2h-2zM122 198h2v2h-2zM118 200h2v2h-2z"/><path fill="#f28" d="M166 194h2v2h-2zM162 196h2v2h-2zM164 196h2v2h-2zM166 196h2v2h-2zM160 198h2v2h-2z"/><path fill="#f07" d="M174 194h2v2h-2zM176 194h2v2h-2zM178 194h2v2h-2zM170 196h2v2h-2zM172 196h2v2h-2zM174 196h2v2h-2zM176 196h2v2h-2zM170 198h2v2h-2zM172 198h2v2h-2z"/><path fill="#2af" d="M56 196h2v2h-2zM56 198h2v2h-2z"/><path fill="#99f" d="M76 196h2v2h-2zM74 198h2v2h-2zM76 198h2v2h-2zM74 200h2v2h-2zM76 200h2v2h-2zM74 202h2v2h-2zM76 202h2v2h-2zM78 202h2v2h-2z"/><path fill="#a9f" d="M78 196h2v2h-2zM80 196h2v2h-2zM82 196h2v2h-2zM78 198h2v2h-2zM80 198h2v2h-2zM82 198h2v2h-2zM78 200h2v2h-2zM80 200h2v2h-2zM82 200h2v2h-2zM80 202h2v2h-2zM82 202h2v2h-2z"/><path fill="#b9f" d="M84 196h2v2h-2zM86 196h2v2h-2zM84 198h2v2h-2zM86 198h2v2h-2zM84 200h2v2h-2zM86 200h2v2h-2zM88 200h2v2h-2z"/><path fill="#f6c" d="M126 196h2v2h-2zM128 196h2v2h-2zM124 198h2v2h-2zM126 198h2v2h-2zM128 198h2v2h-2zM130 198h2v2h-2zM124 200h2v2h-2zM126 200h2v2h-2zM128 200h2v2h-2z"/><path fill="#f5b" d="M136 196h2v2h-2zM138 196h2v2h-2zM132 198h2v2h-2zM134 198h2v2h-2zM136 198h2v2h-2zM138 198h2v2h-2zM132 200h2v2h-2zM134 200h2v2h-2zM136 200h2v2h-2z"/><path fill="#f4a" d="M144 196h2v2h-2zM146 196h2v2h-2zM142 198h2v2h-2zM144 198h2v2h-2zM146 198h2v2h-2zM148 198h2v2h-2zM142 200h2v2h-2zM144 200h2v2h-2z"/><path fill="#f39" d="M154 196h2v2h-2zM156 196h2v2h-2zM150 198h2v2h-2zM152 198h2v2h-2zM154 198h2v2h-2zM156 198h2v2h-2zM150 200h2v2h-2zM152 200h2v2h-2z"/><path fill="#f18" d="M168 196h2v2h-2zM162 198h2v2h-2zM164 198h2v2h-2z"/><path fill="#49f" d="M60 198h2v2h-2zM58 200h2v2h-2zM58 202h2v2h-2zM58 204h2v2h-2zM58 206h2v2h-2z"/><path fill="#59f" d="M62 198h2v2h-2zM60 200h2v2h-2zM62 200h2v2h-2zM60 202h2v2h-2zM62 202h2v2h-2zM60 204h2v2h-2zM62 204h2v2h-2zM60 206h2v2h-2z"/><path fill="#69f" d="M64 198h2v2h-2zM64 200h2v2h-2zM64 202h2v2h-2zM64 204h2v2h-2z"/><path fill="#79f" d="M66 198h2v2h-2zM68 198h2v2h-2zM66 200h2v2h-2zM68 200h2v2h-2zM66 202h2v2h-2zM68 202h2v2h-2zM66 204h2v2h-2zM68 204h2v2h-2z"/><path fill="#89f" d="M70 198h2v2h-2zM72 198h2v2h-2zM70 200h2v2h-2zM72 200h2v2h-2zM70 202h2v2h-2zM72 202h2v2h-2zM70 204h2v2h-2zM72 204h2v2h-2z"/><path fill="#f8f" d="M106 198h2v2h-2zM108 198h2v2h-2zM106 200h2v2h-2zM108 200h2v2h-2zM110 200h2v2h-2zM106 202h2v2h-2zM108 202h2v2h-2z"/><path fill="#f29" d="M158 198h2v2h-2zM154 200h2v2h-2zM156 200h2v2h-2zM152 202h2v2h-2z"/><path fill="#f08" d="M166 198h2v2h-2zM168 198h2v2h-2zM162 200h2v2h-2zM164 200h2v2h-2zM166 200h2v2h-2zM168 200h2v2h-2zM162 202h2v2h-2z"/><path fill="#09f" d="M44 200h2v2h-2zM46 200h2v2h-2zM48 200h2v2h-2zM50 200h2v2h-2zM52 200h2v2h-2zM54 200h2v2h-2zM28 202h2v2h-2zM30 202h2v2h-2zM32 202h2v2h-2zM34 202h2v2h-2zM36 202h2v2h-2zM38 202h2v2h-2zM40 202h2v2h-2zM42 202h2v2h-2zM44 202h2v2h-2zM46 202h2v2h-2zM48 202h2v2h-2zM50 202h2v2h-2zM52 202h2v2h-2zM54 202h2v2h-2zM20 204h2v2h-2zM22 204h2v2h-2zM24 204h2v2h-2zM26 204h2v2h-2zM28 204h2v2h-2zM30 204h2v2h-2zM32 204h2v2h-2zM34 204h2v2h-2zM36 204h2v2h-2zM38 204h2v2h-2zM40 204h2v2h-2zM42 204h2v2h-2zM44 204h2v2h-2zM46 204h2v2h-2zM48 204h2v2h-2zM50 204h2v2h-2zM52 204h2v2h-2zM54 204h2v2h-2zM20 206h2v2h-2zM22 206h2v2h-2zM24 206h2v2h-2zM26 206h2v2h-2zM28 206h2v2h-2zM30 206h2v2h-2zM32 206h2v2h-2zM34 206h2v2h-2zM36 206h2v2h-2zM38 206h2v2h-2zM40 206h2v2h-2zM42 206h2v2h-2zM44 206h2v2h-2zM46 206h2v2h-2zM48 206h2v2h-2zM50 206h2v2h-2zM52 206h2v2h-2zM22 208h2v2h-2zM24 208h2v2h-2zM26 208h2v2h-2zM28 208h2v2h-2zM30 208h2v2h-2zM32 208h2v2h-2zM34 208h2v2h-2zM36 208h2v2h-2zM38 208h2v2h-2zM40 208h2v2h-2zM42 208h2v2h-2zM44 208h2v2h-2zM46 208h2v2h-2zM48 208h2v2h-2zM50 208h2v2h-2zM22 210h2v2h-2zM24 210h2v2h-2zM26 210h2v2h-2zM28 210h2v2h-2zM30 210h2v2h-2zM32 210h2v2h-2zM34 210h2v2h-2zM36 210h2v2h-2zM38 210h2v2h-2zM22 212h2v2h-2zM24 212h2v2h-2zM26 212h2v2h-2zM28 212h2v2h-2z"/><path fill="#29f" d="M56 200h2v2h-2zM56 202h2v2h-2z"/><path fill="#d8f" d="M96 200h2v2h-2zM98 200h2v2h-2zM94 202h2v2h-2zM96 202h2v2h-2zM98 202h2v2h-2zM94 204h2v2h-2zM96 204h2v2h-2zM98 204h2v2h-2z"/><path fill="#e8f" d="M100 200h2v2h-2zM102 200h2v2h-2zM104 200h2v2h-2zM100 202h2v2h-2zM102 202h2v2h-2zM104 202h2v2h-2zM100 204h2v2h-2zM102 204h2v2h-2z"/><path fill="#f7e" d="M112 200h2v2h-2zM114 200h2v2h-2zM116 200h2v2h-2zM112 202h2v2h-2zM114 202h2v2h-2zM116 202h2v2h-2zM112 204h2v2h-2zM114 204h2v2h-2z"/><path fill="#f6d" d="M120 200h2v2h-2zM122 200h2v2h-2zM118 202h2v2h-2zM120 202h2v2h-2zM122 202h2v2h-2zM124 202h2v2h-2zM118 204h2v2h-2zM120 204h2v2h-2zM118 206h2v2h-2z"/><path fill="#f5c" d="M130 200h2v2h-2zM126 202h2v2h-2zM128 202h2v2h-2zM130 202h2v2h-2zM132 202h2v2h-2zM126 204h2v2h-2zM128 204h2v2h-2zM130 204h2v2h-2zM126 206h2v2h-2z"/><path fill="#f4b" d="M138 200h2v2h-2zM140 200h2v2h-2zM134 202h2v2h-2zM136 202h2v2h-2zM138 202h2v2h-2zM140 202h2v2h-2zM134 204h2v2h-2zM136 204h2v2h-2z"/><path fill="#f3a" d="M146 200h2v2h-2zM148 200h2v2h-2zM142 202h2v2h-2zM144 202h2v2h-2zM146 202h2v2h-2zM148 202h2v2h-2zM142 204h2v2h-2zM144 204h2v2h-2z"/><path fill="#f19" d="M158 200h2v2h-2zM160 200h2v2h-2zM154 202h2v2h-2zM156 202h2v2h-2z"/><path fill="#b8f" d="M84 202h2v2h-2zM86 202h2v2h-2zM88 202h2v2h-2zM84 204h2v2h-2zM86 204h2v2h-2zM88 204h2v2h-2zM84 206h2v2h-2zM86 206h2v2h-2zM88 206h2v2h-2zM84 208h2v2h-2zM86 208h2v2h-2z"/><path fill="#c8f" d="M90 202h2v2h-2zM92 202h2v2h-2zM90 204h2v2h-2zM92 204h2v2h-2zM90 206h2v2h-2zM92 206h2v2h-2zM94 206h2v2h-2z"/><path fill="#f7f" d="M110 202h2v2h-2zM106 204h2v2h-2zM108 204h2v2h-2zM110 204h2v2h-2zM106 206h2v2h-2zM108 206h2v2h-2zM110 206h2v2h-2zM106 208h2v2h-2z"/><path fill="#f2a" d="M150 202h2v2h-2zM146 204h2v2h-2zM148 204h2v2h-2zM144 206h2v2h-2z"/><path fill="#f09" d="M158 202h2v2h-2zM160 202h2v2h-2zM152 204h2v2h-2zM154 204h2v2h-2zM156 204h2v2h-2zM158 204h2v2h-2zM154 206h2v2h-2z"/><path fill="#39f" d="M56 204h2v2h-2zM56 206h2v2h-2z"/><path fill="#98f" d="M74 204h2v2h-2zM76 204h2v2h-2zM78 204h2v2h-2zM74 206h2v2h-2zM76 206h2v2h-2zM78 206h2v2h-2zM74 208h2v2h-2zM76 208h2v2h-2zM78 208h2v2h-2zM74 210h2v2h-2zM76 210h2v2h-2zM78 210h2v2h-2z"/><path fill="#a8f" d="M80 204h2v2h-2zM82 204h2v2h-2zM80 206h2v2h-2zM82 206h2v2h-2zM80 208h2v2h-2zM82 208h2v2h-2z"/><path fill="#e7f" d="M104 204h2v2h-2zM100 206h2v2h-2zM102 206h2v2h-2zM104 206h2v2h-2zM102 208h2v2h-2zM104 208h2v2h-2z"/><path fill="#f6e" d="M116 204h2v2h-2zM112 206h2v2h-2zM114 206h2v2h-2zM116 206h2v2h-2zM112 208h2v2h-2zM114 208h2v2h-2z"/><path fill="#f5d" d="M122 204h2v2h-2zM124 204h2v2h-2zM120 206h2v2h-2zM122 206h2v2h-2zM124 206h2v2h-2zM120 208h2v2h-2zM122 208h2v2h-2z"/><path fill="#f4c" d="M132 204h2v2h-2zM128 206h2v2h-2zM130 206h2v2h-2zM132 206h2v2h-2zM126 208h2v2h-2zM128 208h2v2h-2zM130 208h2v2h-2z"/><path fill="#f3b" d="M138 204h2v2h-2zM140 204h2v2h-2zM134 206h2v2h-2zM136 206h2v2h-2zM138 206h2v2h-2zM140 206h2v2h-2zM136 208h2v2h-2z"/><path fill="#f1a" d="M150 204h2v2h-2zM146 206h2v2h-2z"/><path fill="#19f" d="M54 206h2v2h-2z"/><path fill="#68f" d="M62 206h2v2h-2zM64 206h2v2h-2zM62 208h2v2h-2zM64 208h2v2h-2zM62 210h2v2h-2zM64 210h2v2h-2zM62 212h2v2h-2zM64 212h2v2h-2z"/><path fill="#78f" d="M66 206h2v2h-2zM68 206h2v2h-2zM66 208h2v2h-2zM68 208h2v2h-2zM66 210h2v2h-2zM68 210h2v2h-2zM66 212h2v2h-2zM68 212h2v2h-2z"/><path fill="#88f" d="M70 206h2v2h-2zM72 206h2v2h-2zM70 208h2v2h-2zM72 208h2v2h-2zM70 210h2v2h-2zM72 210h2v2h-2z"/><path fill="#d7f" d="M96 206h2v2h-2zM98 206h2v2h-2zM96 208h2v2h-2zM98 208h2v2h-2zM100 208h2v2h-2zM96 210h2v2h-2zM98 210h2v2h-2zM100 210h2v2h-2z"/><path fill="#f2b" d="M142 206h2v2h-2zM138 208h2v2h-2zM140 208h2v2h-2zM136 210h2v2h-2z"/><path fill="#f0a" d="M148 206h2v2h-2zM150 206h2v2h-2zM152 206h2v2h-2zM144 208h2v2h-2zM146 208h2v2h-2zM148 208h2v2h-2zM150 208h2v2h-2zM146 210h2v2h-2z"/><path fill="#08f" d="M52 208h2v2h-2zM40 210h2v2h-2zM42 210h2v2h-2zM44 210h2v2h-2zM46 210h2v2h-2zM48 210h2v2h-2zM50 210h2v2h-2zM52 210h2v2h-2zM30 212h2v2h-2zM32 212h2v2h-2zM34 212h2v2h-2zM36 212h2v2h-2zM38 212h2v2h-2zM40 212h2v2h-2zM42 212h2v2h-2zM44 212h2v2h-2zM46 212h2v2h-2zM48 212h2v2h-2zM50 212h2v2h-2zM52 212h2v2h-2zM24 214h2v2h-2zM26 214h2v2h-2zM28 214h2v2h-2zM30 214h2v2h-2zM32 214h2v2h-2zM34 214h2v2h-2zM36 214h2v2h-2zM38 214h2v2h-2zM40 214h2v2h-2zM42 214h2v2h-2zM44 214h2v2h-2zM46 214h2v2h-2zM48 214h2v2h-2zM50 214h2v2h-2zM52 214h2v2h-2zM24 216h2v2h-2zM26 216h2v2h-2zM28 216h2v2h-2zM30 216h2v2h-2zM32 216h2v2h-2zM34 216h2v2h-2zM36 216h2v2h-2zM38 216h2v2h-2zM40 216h2v2h-2zM42 216h2v2h-2zM44 216h2v2h-2zM46 216h2v2h-2zM48 216h2v2h-2zM50 216h2v2h-2zM52 216h2v2h-2zM24 218h2v2h-2zM26 218h2v2h-2zM28 218h2v2h-2zM30 218h2v2h-2zM32 218h2v2h-2zM34 218h2v2h-2zM36 218h2v2h-2zM38 218h2v2h-2zM40 218h2v2h-2zM42 218h2v2h-2zM44 218h2v2h-2zM26 220h2v2h-2zM28 220h2v2h-2zM30 220h2v2h-2zM32 220h2v2h-2zM34 220h2v2h-2zM36 220h2v2h-2zM26 222h2v2h-2z"/><path fill="#18f" d="M54 208h2v2h-2z"/><path fill="#38f" d="M56 208h2v2h-2zM56 210h2v2h-2zM56 212h2v2h-2zM56 214h2v2h-2z"/><path fill="#48f" d="M58 208h2v2h-2zM58 210h2v2h-2zM58 212h2v2h-2zM58 214h2v2h-2z"/><path fill="#58f" d="M60 208h2v2h-2zM60 210h2v2h-2zM60 212h2v2h-2zM60 214h2v2h-2z"/><path fill="#b7f" d="M88 208h2v2h-2zM84 210h2v2h-2zM86 210h2v2h-2zM88 210h2v2h-2zM84 212h2v2h-2zM86 212h2v2h-2zM88 212h2v2h-2zM84 214h2v2h-2zM86 214h2v2h-2z"/><path fill="#c7f" d="M90 208h2v2h-2zM92 208h2v2h-2zM94 208h2v2h-2zM90 210h2v2h-2zM92 210h2v2h-2zM94 210h2v2h-2zM90 212h2v2h-2zM92 212h2v2h-2z"/><path fill="#f6f" d="M108 208h2v2h-2zM110 208h2v2h-2zM108 210h2v2h-2zM110 210h2v2h-2zM112 210h2v2h-2zM108 212h2v2h-2z"/><path fill="#f5e" d="M116 208h2v2h-2zM118 208h2v2h-2zM114 210h2v2h-2zM116 210h2v2h-2zM118 210h2v2h-2zM114 212h2v2h-2zM116 212h2v2h-2z"/><path fill="#f4d" d="M124 208h2v2h-2zM120 210h2v2h-2zM122 210h2v2h-2zM124 210h2v2h-2zM126 210h2v2h-2zM120 212h2v2h-2zM122 212h2v2h-2z"/><path fill="#f3c" d="M132 208h2v2h-2zM134 208h2v2h-2zM128 210h2v2h-2zM130 210h2v2h-2zM132 210h2v2h-2z"/><path fill="#f1b" d="M142 208h2v2h-2zM138 210h2v2h-2z"/><path fill="#28f" d="M54 210h2v2h-2zM54 212h2v2h-2zM54 214h2v2h-2z"/><path fill="#a7f" d="M80 210h2v2h-2zM82 210h2v2h-2zM80 212h2v2h-2zM82 212h2v2h-2zM80 214h2v2h-2zM82 214h2v2h-2zM80 216h2v2h-2z"/><path fill="#e6f" d="M102 210h2v2h-2zM104 210h2v2h-2zM106 210h2v2h-2zM102 212h2v2h-2zM104 212h2v2h-2zM106 212h2v2h-2zM102 214h2v2h-2z"/><path fill="#f2c" d="M134 210h2v2h-2zM128 212h2v2h-2zM130 212h2v2h-2zM132 212h2v2h-2z"/><path fill="#f0b" d="M140 210h2v2h-2zM142 210h2v2h-2zM144 210h2v2h-2zM136 212h2v2h-2zM138 212h2v2h-2zM140 212h2v2h-2zM142 212h2v2h-2z"/><path fill="#87f" d="M70 212h2v2h-2zM72 212h2v2h-2zM70 214h2v2h-2zM72 214h2v2h-2zM70 216h2v2h-2zM72 216h2v2h-2zM70 218h2v2h-2zM72 218h2v2h-2z"/><path fill="#97f" d="M74 212h2v2h-2zM76 212h2v2h-2zM78 212h2v2h-2zM74 214h2v2h-2zM76 214h2v2h-2zM78 214h2v2h-2zM74 216h2v2h-2zM76 216h2v2h-2zM78 216h2v2h-2z"/><path fill="#c6f" d="M94 212h2v2h-2zM90 214h2v2h-2zM92 214h2v2h-2zM94 214h2v2h-2zM90 216h2v2h-2zM92 216h2v2h-2zM94 216h2v2h-2zM90 218h2v2h-2z"/><path fill="#d6f" d="M96 212h2v2h-2zM98 212h2v2h-2zM100 212h2v2h-2zM96 214h2v2h-2zM98 214h2v2h-2zM100 214h2v2h-2zM96 216h2v2h-2z"/><path fill="#f5f" d="M110 212h2v2h-2zM112 212h2v2h-2zM108 214h2v2h-2zM110 214h2v2h-2zM112 214h2v2h-2zM108 216h2v2h-2z"/><path fill="#f4e" d="M118 212h2v2h-2zM114 214h2v2h-2zM116 214h2v2h-2zM118 214h2v2h-2zM114 216h2v2h-2z"/><path fill="#f3d" d="M124 212h2v2h-2zM126 212h2v2h-2zM122 214h2v2h-2z"/><path fill="#f1c" d="M134 212h2v2h-2zM128 214h2v2h-2zM130 214h2v2h-2z"/><path fill="#67f" d="M62 214h2v2h-2zM64 214h2v2h-2zM62 216h2v2h-2zM64 216h2v2h-2zM62 218h2v2h-2zM64 218h2v2h-2zM62 220h2v2h-2zM64 220h2v2h-2z"/><path fill="#77f" d="M66 214h2v2h-2zM68 214h2v2h-2zM66 216h2v2h-2zM68 216h2v2h-2zM66 218h2v2h-2zM68 218h2v2h-2zM66 220h2v2h-2z"/><path fill="#b6f" d="M88 214h2v2h-2zM84 216h2v2h-2zM86 216h2v2h-2zM88 216h2v2h-2zM84 218h2v2h-2zM86 218h2v2h-2zM88 218h2v2h-2zM84 220h2v2h-2z"/><path fill="#e5f" d="M104 214h2v2h-2zM106 214h2v2h-2zM102 216h2v2h-2zM104 216h2v2h-2zM106 216h2v2h-2zM102 218h2v2h-2z"/><path fill="#f3e" d="M120 214h2v2h-2zM116 216h2v2h-2zM118 216h2v2h-2z"/><path fill="#f2d" d="M124 214h2v2h-2zM126 214h2v2h-2zM122 216h2v2h-2z"/><path fill="#f0c" d="M132 214h2v2h-2zM134 214h2v2h-2zM136 214h2v2h-2zM130 216h2v2h-2zM132 216h2v2h-2z"/><path fill="#27f" d="M54 216h2v2h-2zM52 224h2v2h-2z"/><path fill="#47f" d="M56 216h2v2h-2zM58 216h2v2h-2zM56 218h2v2h-2zM56 220h2v2h-2zM56 222h2v2h-2z"/><path fill="#57f" d="M60 216h2v2h-2zM58 218h2v2h-2zM60 218h2v2h-2zM58 220h2v2h-2zM60 220h2v2h-2zM58 222h2v2h-2z"/><path fill="#a6f" d="M82 216h2v2h-2zM80 218h2v2h-2zM82 218h2v2h-2zM80 220h2v2h-2zM82 220h2v2h-2z"/><path fill="#d5f" d="M98 216h2v2h-2zM100 216h2v2h-2zM96 218h2v2h-2zM98 218h2v2h-2zM100 218h2v2h-2zM96 220h2v2h-2z"/><path fill="#f4f" d="M110 216h2v2h-2zM112 216h2v2h-2zM108 218h2v2h-2zM110 218h2v2h-2z"/><path fill="#f2e" d="M120 216h2v2h-2zM116 218h2v2h-2zM118 218h2v2h-2z"/><path fill="#f1d" d="M124 216h2v2h-2z"/><path fill="#f0d" d="M126 216h2v2h-2zM128 216h2v2h-2zM122 218h2v2h-2zM124 218h2v2h-2zM126 218h2v2h-2zM128 218h2v2h-2zM122 220h2v2h-2zM124 220h2v2h-2z"/><path fill="#07f" d="M46 218h2v2h-2zM48 218h2v2h-2zM50 218h2v2h-2zM52 218h2v2h-2zM38 220h2v2h-2zM40 220h2v2h-2zM42 220h2v2h-2zM44 220h2v2h-2zM46 220h2v2h-2zM48 220h2v2h-2zM50 220h2v2h-2zM28 222h2v2h-2zM30 222h2v2h-2zM32 222h2v2h-2zM34 222h2v2h-2zM36 222h2v2h-2zM38 222h2v2h-2zM40 222h2v2h-2zM42 222h2v2h-2zM44 222h2v2h-2zM46 222h2v2h-2zM48 222h2v2h-2zM50 222h2v2h-2zM26 224h2v2h-2zM28 224h2v2h-2zM30 224h2v2h-2zM32 224h2v2h-2zM34 224h2v2h-2zM36 224h2v2h-2zM38 224h2v2h-2zM40 224h2v2h-2zM42 224h2v2h-2zM44 224h2v2h-2zM46 224h2v2h-2zM48 224h2v2h-2zM50 224h2v2h-2zM28 226h2v2h-2zM30 226h2v2h-2zM32 226h2v2h-2zM34 226h2v2h-2zM36 226h2v2h-2zM38 226h2v2h-2zM40 226h2v2h-2zM42 226h2v2h-2zM44 226h2v2h-2zM28 228h2v2h-2zM30 228h2v2h-2zM32 228h2v2h-2zM34 228h2v2h-2zM36 228h2v2h-2zM38 228h2v2h-2zM30 230h2v2h-2z"/><path fill="#37f" d="M54 218h2v2h-2zM54 220h2v2h-2zM54 222h2v2h-2z"/><path fill="#96f" d="M74 218h2v2h-2zM76 218h2v2h-2zM78 218h2v2h-2zM74 220h2v2h-2zM76 220h2v2h-2zM78 220h2v2h-2zM74 222h2v2h-2zM76 222h2v2h-2zM78 222h2v2h-2z"/><path fill="#c5f" d="M92 218h2v2h-2zM94 218h2v2h-2zM90 220h2v2h-2zM92 220h2v2h-2zM94 220h2v2h-2zM90 222h2v2h-2zM92 222h2v2h-2z"/><path fill="#e4f" d="M104 218h2v2h-2zM106 218h2v2h-2zM102 220h2v2h-2zM104 220h2v2h-2zM106 220h2v2h-2z"/><path fill="#f3f" d="M112 218h2v2h-2zM114 218h2v2h-2zM110 220h2v2h-2z"/><path fill="#f1e" d="M120 218h2v2h-2zM116 220h2v2h-2z"/><path fill="#17f" d="M52 220h2v2h-2zM52 222h2v2h-2z"/><path fill="#76f" d="M68 220h2v2h-2zM66 222h2v2h-2zM68 222h2v2h-2zM64 224h2v2h-2zM66 224h2v2h-2zM68 224h2v2h-2zM64 226h2v2h-2zM66 226h2v2h-2z"/><path fill="#86f" d="M70 220h2v2h-2zM72 220h2v2h-2zM70 222h2v2h-2zM72 222h2v2h-2zM70 224h2v2h-2zM72 224h2v2h-2z"/><path fill="#b5f" d="M86 220h2v2h-2zM88 220h2v2h-2zM84 222h2v2h-2zM86 222h2v2h-2zM88 222h2v2h-2zM84 224h2v2h-2zM86 224h2v2h-2z"/><path fill="#d4f" d="M98 220h2v2h-2zM100 220h2v2h-2zM96 222h2v2h-2zM98 222h2v2h-2zM100 222h2v2h-2zM96 224h2v2h-2z"/><path fill="#e3f" d="M108 220h2v2h-2zM104 222h2v2h-2zM106 222h2v2h-2z"/><path fill="#f2f" d="M112 220h2v2h-2zM114 220h2v2h-2zM110 222h2v2h-2z"/><path fill="#f0e" d="M118 220h2v2h-2zM120 220h2v2h-2zM116 222h2v2h-2zM118 222h2v2h-2zM120 222h2v2h-2zM116 224h2v2h-2z"/><path fill="#56f" d="M60 222h2v2h-2zM58 224h2v2h-2zM60 224h2v2h-2zM58 226h2v2h-2zM60 226h2v2h-2zM58 228h2v2h-2z"/><path fill="#66f" d="M62 222h2v2h-2zM64 222h2v2h-2zM62 224h2v2h-2zM62 226h2v2h-2zM60 228h2v2h-2z"/><path fill="#a5f" d="M80 222h2v2h-2zM82 222h2v2h-2zM80 224h2v2h-2zM82 224h2v2h-2zM80 226h2v2h-2z"/><path fill="#c4f" d="M94 222h2v2h-2zM90 224h2v2h-2zM92 224h2v2h-2zM94 224h2v2h-2zM90 226h2v2h-2z"/><path fill="#d3f" d="M102 222h2v2h-2zM98 224h2v2h-2zM100 224h2v2h-2zM102 224h2v2h-2z"/><path fill="#e2f" d="M108 222h2v2h-2zM104 224h2v2h-2zM106 224h2v2h-2z"/><path fill="#f1f" d="M112 222h2v2h-2z"/><path fill="#f0f" d="M114 222h2v2h-2zM110 224h2v2h-2zM112 224h2v2h-2zM114 224h2v2h-2zM110 226h2v2h-2zM112 226h2v2h-2z"/><path fill="#36f" d="M54 224h2v2h-2zM54 226h2v2h-2zM54 228h2v2h-2zM54 230h2v2h-2z"/><path fill="#46f" d="M56 224h2v2h-2zM56 226h2v2h-2zM56 228h2v2h-2z"/><path fill="#95f" d="M74 224h2v2h-2zM76 224h2v2h-2zM78 224h2v2h-2zM74 226h2v2h-2zM76 226h2v2h-2zM78 226h2v2h-2zM74 228h2v2h-2zM76 228h2v2h-2z"/><path fill="#b4f" d="M88 224h2v2h-2zM84 226h2v2h-2zM86 226h2v2h-2zM88 226h2v2h-2zM84 228h2v2h-2zM86 228h2v2h-2z"/><path fill="#e1f" d="M108 224h2v2h-2z"/><path fill="#06f" d="M46 226h2v2h-2zM48 226h2v2h-2zM50 226h2v2h-2zM40 228h2v2h-2zM42 228h2v2h-2zM44 228h2v2h-2zM46 228h2v2h-2zM48 228h2v2h-2zM50 228h2v2h-2zM32 230h2v2h-2zM34 230h2v2h-2zM36 230h2v2h-2zM38 230h2v2h-2zM40 230h2v2h-2zM42 230h2v2h-2zM44 230h2v2h-2zM46 230h2v2h-2zM48 230h2v2h-2zM50 230h2v2h-2zM30 232h2v2h-2zM32 232h2v2h-2zM34 232h2v2h-2zM36 232h2v2h-2zM38 232h2v2h-2zM40 232h2v2h-2zM42 232h2v2h-2zM44 232h2v2h-2zM46 232h2v2h-2zM48 232h2v2h-2zM32 234h2v2h-2zM34 234h2v2h-2zM36 234h2v2h-2zM38 234h2v2h-2zM40 234h2v2h-2zM42 234h2v2h-2zM32 236h2v2h-2zM34 236h2v2h-2zM36 236h2v2h-2z"/><path fill="#26f" d="M52 226h2v2h-2zM52 228h2v2h-2zM52 230h2v2h-2z"/><path fill="#85f" d="M68 226h2v2h-2zM70 226h2v2h-2zM72 226h2v2h-2zM68 228h2v2h-2zM70 228h2v2h-2zM72 228h2v2h-2zM68 230h2v2h-2zM70 230h2v2h-2z"/><path fill="#a4f" d="M82 226h2v2h-2zM80 228h2v2h-2zM82 228h2v2h-2zM80 230h2v2h-2z"/><path fill="#c3f" d="M92 226h2v2h-2zM94 226h2v2h-2zM96 226h2v2h-2zM92 228h2v2h-2z"/><path fill="#d2f" d="M98 226h2v2h-2zM100 226h2v2h-2z"/><path fill="#d1f" d="M102 226h2v2h-2zM98 228h2v2h-2z"/><path fill="#e0f" d="M104 226h2v2h-2zM106 226h2v2h-2zM108 226h2v2h-2zM104 228h2v2h-2zM106 228h2v2h-2z"/><path fill="#65f" d="M62 228h2v2h-2zM60 230h2v2h-2zM62 230h2v2h-2zM60 232h2v2h-2zM62 232h2v2h-2z"/><path fill="#75f" d="M64 228h2v2h-2zM66 228h2v2h-2zM64 230h2v2h-2zM66 230h2v2h-2zM64 232h2v2h-2z"/><path fill="#94f" d="M78 228h2v2h-2zM74 230h2v2h-2zM76 230h2v2h-2zM78 230h2v2h-2zM74 232h2v2h-2zM76 232h2v2h-2z"/><path fill="#b3f" d="M88 228h2v2h-2zM90 228h2v2h-2zM86 230h2v2h-2zM88 230h2v2h-2z"/><path fill="#c2f" d="M94 228h2v2h-2zM96 228h2v2h-2zM92 230h2v2h-2z"/><path fill="#d0f" d="M100 228h2v2h-2zM102 228h2v2h-2zM98 230h2v2h-2zM100 230h2v2h-2zM102 230h2v2h-2zM98 232h2v2h-2z"/><path fill="#45f" d="M56 230h2v2h-2zM54 232h2v2h-2zM56 232h2v2h-2zM54 234h2v2h-2zM56 234h2v2h-2zM54 236h2v2h-2z"/><path fill="#55f" d="M58 230h2v2h-2zM58 232h2v2h-2zM58 234h2v2h-2z"/><path fill="#84f" d="M72 230h2v2h-2zM68 232h2v2h-2zM70 232h2v2h-2zM72 232h2v2h-2zM68 234h2v2h-2zM70 234h2v2h-2z"/><path fill="#a3f" d="M82 230h2v2h-2zM84 230h2v2h-2zM80 232h2v2h-2zM82 232h2v2h-2z"/><path fill="#b2f" d="M90 230h2v2h-2zM86 232h2v2h-2z"/><path fill="#c1f" d="M94 230h2v2h-2z"/><path fill="#c0f" d="M96 230h2v2h-2zM92 232h2v2h-2zM94 232h2v2h-2zM96 232h2v2h-2zM92 234h2v2h-2zM94 234h2v2h-2z"/><path fill="#15f" d="M50 232h2v2h-2zM50 234h2v2h-2zM50 236h2v2h-2z"/><path fill="#35f" d="M52 232h2v2h-2zM52 234h2v2h-2zM52 236h2v2h-2z"/><path fill="#74f" d="M66 232h2v2h-2zM64 234h2v2h-2zM66 234h2v2h-2zM64 236h2v2h-2zM66 236h2v2h-2z"/><path fill="#93f" d="M78 232h2v2h-2zM74 234h2v2h-2zM76 234h2v2h-2zM78 234h2v2h-2zM74 236h2v2h-2z"/><path fill="#a2f" d="M84 232h2v2h-2zM80 234h2v2h-2zM82 234h2v2h-2z"/><path fill="#b1f" d="M88 232h2v2h-2zM90 232h2v2h-2z"/><path fill="#05f" d="M44 234h2v2h-2zM46 234h2v2h-2zM48 234h2v2h-2zM38 236h2v2h-2zM40 236h2v2h-2zM42 236h2v2h-2zM44 236h2v2h-2zM46 236h2v2h-2zM48 236h2v2h-2zM34 238h2v2h-2zM36 238h2v2h-2zM38 238h2v2h-2zM40 238h2v2h-2zM42 238h2v2h-2zM44 238h2v2h-2zM46 238h2v2h-2zM48 238h2v2h-2zM34 240h2v2h-2zM36 240h2v2h-2zM38 240h2v2h-2zM40 240h2v2h-2zM42 240h2v2h-2zM36 242h2v2h-2zM38 242h2v2h-2z"/><path fill="#64f" d="M60 234h2v2h-2zM62 234h2v2h-2zM60 236h2v2h-2zM62 236h2v2h-2zM60 238h2v2h-2z"/><path fill="#83f" d="M72 234h2v2h-2zM68 236h2v2h-2zM70 236h2v2h-2zM72 236h2v2h-2zM68 238h2v2h-2z"/><path fill="#a1f" d="M84 234h2v2h-2zM80 236h2v2h-2z"/><path fill="#b0f" d="M86 234h2v2h-2zM88 234h2v2h-2zM90 234h2v2h-2zM86 236h2v2h-2zM88 236h2v2h-2zM90 236h2v2h-2zM86 238h2v2h-2z"/><path fill="#54f" d="M56 236h2v2h-2zM58 236h2v2h-2zM56 238h2v2h-2zM58 238h2v2h-2zM56 240h2v2h-2z"/><path fill="#92f" d="M76 236h2v2h-2zM78 236h2v2h-2zM74 238h2v2h-2z"/><path fill="#a0f" d="M82 236h2v2h-2zM84 236h2v2h-2zM80 238h2v2h-2zM82 238h2v2h-2zM84 238h2v2h-2zM80 240h2v2h-2z"/><path fill="#24f" d="M50 238h2v2h-2zM50 240h2v2h-2zM50 242h2v2h-2z"/><path fill="#34f" d="M52 238h2v2h-2zM52 240h2v2h-2z"/><path fill="#44f" d="M54 238h2v2h-2zM54 240h2v2h-2z"/><path fill="#63f" d="M62 238h2v2h-2zM60 240h2v2h-2zM62 240h2v2h-2z"/><path fill="#73f" d="M64 238h2v2h-2zM66 238h2v2h-2zM64 240h2v2h-2z"/><path fill="#82f" d="M70 238h2v2h-2zM72 238h2v2h-2zM68 240h2v2h-2z"/><path fill="#91f" d="M76 238h2v2h-2z"/><path fill="#90f" d="M78 238h2v2h-2zM74 240h2v2h-2zM76 240h2v2h-2zM78 240h2v2h-2zM74 242h2v2h-2zM76 242h2v2h-2z"/><path fill="#04f" d="M44 240h2v2h-2zM46 240h2v2h-2zM48 240h2v2h-2zM40 242h2v2h-2zM42 242h2v2h-2zM44 242h2v2h-2zM46 242h2v2h-2zM48 242h2v2h-2zM38 244h2v2h-2zM40 244h2v2h-2zM42 244h2v2h-2zM44 244h2v2h-2zM46 244h2v2h-2zM38 246h2v2h-2zM40 246h2v2h-2z"/><path fill="#53f" d="M58 240h2v2h-2zM56 242h2v2h-2zM58 242h2v2h-2z"/><path fill="#72f" d="M66 240h2v2h-2zM64 242h2v2h-2z"/><path fill="#81f" d="M70 240h2v2h-2zM72 240h2v2h-2z"/><path fill="#33f" d="M52 242h2v2h-2zM52 244h2v2h-2zM50 246h2v2h-2z"/><path fill="#43f" d="M54 242h2v2h-2zM54 244h2v2h-2z"/><path fill="#62f" d="M60 242h2v2h-2zM62 242h2v2h-2zM60 244h2v2h-2z"/><path fill="#71f" d="M66 242h2v2h-2z"/><path fill="#80f" d="M68 242h2v2h-2zM70 242h2v2h-2zM72 242h2v2h-2zM68 244h2v2h-2zM70 244h2v2h-2zM72 244h2v2h-2zM68 246h2v2h-2z"/><path fill="#03f" d="M48 244h2v2h-2zM42 246h2v2h-2zM44 246h2v2h-2zM46 246h2v2h-2zM40 248h2v2h-2zM42 248h2v2h-2zM44 248h2v2h-2z"/><path fill="#23f" d="M50 244h2v2h-2z"/><path fill="#52f" d="M56 244h2v2h-2zM58 244h2v2h-2zM56 246h2v2h-2z"/><path fill="#61f" d="M62 244h2v2h-2z"/><path fill="#70f" d="M64 244h2v2h-2zM66 244h2v2h-2zM64 246h2v2h-2zM66 246h2v2h-2zM64 248h2v2h-2z"/><path fill="#13f" d="M48 246h2v2h-2z"/><path fill="#42f" d="M52 246h2v2h-2zM54 246h2v2h-2z"/><path fill="#51f" d="M58 246h2v2h-2z"/><path fill="#60f" d="M60 246h2v2h-2zM62 246h2v2h-2zM58 248h2v2h-2zM60 248h2v2h-2zM62 248h2v2h-2zM58 250h2v2h-2zM60 250h2v2h-2z"/><path fill="#02f" d="M46 248h2v2h-2zM42 250h2v2h-2zM44 250h2v2h-2zM46 250h2v2h-2z"/><path fill="#12f" d="M48 248h2v2h-2z"/><path fill="#32f" d="M50 248h2v2h-2z"/><path fill="#41f" d="M52 248h2v2h-2zM54 248h2v2h-2z"/><path fill="#50f" d="M56 248h2v2h-2zM56 250h2v2h-2zM54 252h2v2h-2zM56 252h2v2h-2z"/><path fill="#11f" d="M48 250h2v2h-2z"/><path fill="#31f" d="M50 250h2v2h-2z"/><path fill="#40f" d="M52 250h2v2h-2zM54 250h2v2h-2zM52 252h2v2h-2z"/><path fill="#01f" d="M44 252h2v2h-2z"/><path fill="#00f" d="M46 252h2v2h-2zM46 254h2v2h-2z"/><path fill="#20f" d="M48 252h2v2h-2zM48 254h2v2h-2z"/><path fill="#30f" d="M50 252h2v2h-2zM50 254h2v2h-2z"/></g></svg>
<canvas id="cie" class="b" style="left:0;top:0" width="251" height="256"></canvas>
<svg class="b" style="left:0;top:0" width="251" height="256" shape-rendering="crispEdges">
<g fill="rgba(0,0,0,0.035)"><rect x="28" y="1" width="1" height="254"/><rect x="1" y="227" width="251" height="1"/><rect x="57" y="1" width="1" height="254"/><rect x="1" y="198" width="251" height="1"/><rect x="85" y="1" width="1" height="254"/><rect x="1" y="170" width="251" height="1"/><rect x="113" y="1" width="1" height="254"/><rect x="1" y="142" width="251" height="1"/><rect x="142" y="1" width="1" height="254"/><rect x="1" y="113" width="251" height="1"/><rect x="170" y="1" width="1" height="254"/><rect x="1" y="85" width="251" height="1"/><rect x="198" y="1" width="1" height="254"/><rect x="1" y="57" width="251" height="1"/><rect x="227" y="1" width="1" height="254"/><rect x="1" y="28" width="251" height="1"/></g>
<rect x="0" y="0" width="251" height="1" fill="#a0a0a0"/>
<rect x="0" y="0" width="1" height="256" fill="#555"/>
<rect x="0" y="255" width="251" height="1" fill="#555"/>
</svg>
<svg class="b" style="left:0;top:0" width="251" height="256" shape-rendering="crispEdges">
<polygon points="88.5,75.5 41,236 202.5,180.5" fill="none" stroke="#000" stroke-width="1"/>
<polygon points="87.5,85.5 46,231.5 177,160.5" fill="none" stroke="#f0a030" stroke-opacity="0.8" stroke-width="1"/>
</svg>
<div class="a" style="left:167px;top:49px;font-size:14px;font-weight:bold;color:#000;transform:scaleX(0.93);transform-origin:0 0">Monitor</div>
<div class="a" style="left:167px;top:65px;font-size:14px;font-weight:bold;color:#f0a533;transform:scaleX(0.95);transform-origin:0 0">sRGB</div>
<div class="a" style="font-size:8.5px;color:#111;left:3px;top:2px">y</div><div class="a" style="font-size:8.5px;color:#111;left:3px;top:194px">0.2</div><div class="a" style="font-size:8.5px;color:#111;left:3px;top:138px">0.4</div><div class="a" style="font-size:8.5px;color:#111;left:3px;top:81px">0.6</div><div class="a" style="font-size:8.5px;color:#111;left:3px;top:24px">0.8</div><div class="a" style="font-size:8.5px;color:#111;left:3px;top:246px">0</div><div class="a" style="font-size:8.5px;color:#111;left:249px;top:245px">x</div><div class="a" style="font-size:8.5px;color:#111;left:37px;width:41px;text-align:center;top:246px">0.2</div><div class="a" style="font-size:8.5px;color:#111;left:93px;width:41px;text-align:center;top:246px">0.4</div><div class="a" style="font-size:8.5px;color:#111;left:150px;width:41px;text-align:center;top:246px">0.6</div><div class="a" style="font-size:8.5px;color:#111;left:207px;width:41px;text-align:center;top:246px">0.8</div>
</div>

<!-- Bar chart -->
<div class="b" style="left:321px;top:111px;width:258px;height:258px;background:#fff"></div>
<div class="b" style="left:322px;top:112px;width:256px;height:256px;box-sizing:border-box;border:1px solid #000;background:linear-gradient(#e24e1a 0%,#ec9c1c 20%,#e8d01c 35%,#e0e61c 42%,#c4dc16 52%,#a8cc12 60%,#6eac14 80%,#3a8a18 100%);overflow:hidden">
<div class="b" style="left:0;top:50px;width:254px;height:1px;background:rgba(60,30,0,0.08)"></div><div class="b" style="left:0;top:101px;width:254px;height:1px;background:rgba(60,30,0,0.08)"></div><div class="b" style="left:0;top:152px;width:254px;height:1px;background:rgba(60,30,0,0.08)"></div><div class="b" style="left:0;top:203px;width:254px;height:1px;background:rgba(60,30,0,0.08)"></div><div class="a" style="left:1px;top:0px;font-size:8.5px;color:rgba(0,0,0,0.85);letter-spacing:-0.25px">10 d E 94</div><div class="a" style="left:1px;top:45px;font-size:8.5px;color:rgba(0,0,0,0.85);letter-spacing:-0.25px">8 d E 94</div><div class="a" style="left:1px;top:96px;font-size:8.5px;color:rgba(0,0,0,0.85);letter-spacing:-0.25px">6 d E 94</div><div class="a" style="left:1px;top:147px;font-size:8.5px;color:rgba(0,0,0,0.85);letter-spacing:-0.25px">4 d E 94</div><div class="a" style="left:1px;top:198px;font-size:8.5px;color:rgba(0,0,0,0.85);letter-spacing:-0.25px">2 d E 94</div><div class="b" style="left:44px;top:102px;width:8px;height:152px;border:1px solid #000;border-bottom:0;background:#2d2d2d"></div><div class="b" style="left:56px;top:94px;width:8px;height:160px;border:1px solid #000;border-bottom:0;background:#414141"></div><div class="b" style="left:68px;top:181px;width:8px;height:73px;border:1px solid #000;border-bottom:0;background:#808080"></div><div class="b" style="left:80px;top:222px;width:8px;height:32px;border:1px solid #000;border-bottom:0;background:#c8c8c8"></div><div class="b" style="left:104px;top:122px;width:8px;height:132px;border:1px solid #000;border-bottom:0;background:#ff0000"></div><div class="b" style="left:116px;top:135px;width:8px;height:119px;border:1px solid #000;border-bottom:0;background:#00ff00"></div><div class="b" style="left:128px;top:74px;width:8px;height:180px;border:1px solid #000;border-bottom:0;background:#0000ff"></div><div class="b" style="left:140px;top:107px;width:8px;height:147px;border:1px solid #000;border-bottom:0;background:#00ffff"></div><div class="b" style="left:152px;top:184px;width:8px;height:70px;border:1px solid #000;border-bottom:0;background:#ff00ff"></div><div class="b" style="left:164px;top:133px;width:8px;height:121px;border:1px solid #000;border-bottom:0;background:#ffff00"></div><div class="b" style="left:176px;top:145px;width:8px;height:109px;border:1px solid #000;border-bottom:0;background:#a85454"></div><div class="b" style="left:188px;top:186px;width:8px;height:68px;border:1px solid #000;border-bottom:0;background:#54a854"></div><div class="b" style="left:200px;top:94px;width:8px;height:160px;border:1px solid #000;border-bottom:0;background:#5454a8"></div><div class="b" style="left:212px;top:153px;width:8px;height:101px;border:1px solid #000;border-bottom:0;background:#54a8a8"></div><div class="b" style="left:224px;top:158px;width:8px;height:96px;border:1px solid #000;border-bottom:0;background:#a854a8"></div><div class="b" style="left:236px;top:207px;width:8px;height:47px;border:1px solid #000;border-bottom:0;background:#a8a854"></div>
</div>

<!-- table -->
<div class="a t12" style="left:110px;top:380px">Target</div>
<div class="a t12" style="left:174px;top:380px">Current</div>
<div class="a t12" style="left:238px;top:380px">Deviation</div>
<div class="a t12" style="left:47px;top:395px">Gamma</div>
<div class="a t12" style="left:47px;top:410px">Kelvin</div>
<div class="a t12" style="left:47px;top:425px">cd/m2</div>
<div class="a t12" style="left:110px;top:395px">1.8</div>
<div class="a t12" style="left:110px;top:410px">5500</div>
<div class="a t12" style="left:110px;top:425px">120</div>
<div class="a t12 or" style="left:174px;top:395px">2.1</div>
<div class="a t12 or" style="left:174px;top:410px">4435</div>
<div class="a t12 or" style="left:174px;top:425px">226</div>
<div class="a t12 or" style="left:238px;top:395px">16%</div>
<div class="a t12 or" style="left:238px;top:410px">19%</div>
<div class="a t12 or" style="left:238px;top:425px">88%</div>
<div class="a t12" style="left:322px;top:380px">Delta E Average</div>
<div class="a t12" style="left:322px;top:395px">Delta E Maximum</div>
<div class="a t12 or" style="left:435px;top:380px">4.0</div>
<div class="a t12 or" style="left:435px;top:395px">7.1</div>

<!-- buttons -->
<div class="btn" style="left:19px;border:2px solid #0a72cc;width:69px;height:17px"><span style="top:4px;letter-spacing:-0.35px">Main Menu</span><div class="b" style="left:0;top:0;right:0;bottom:0;border:1px dotted #000"></div></div>
<div class="btn" style="left:104px"><span style="letter-spacing:-0.2px">Calibration</span></div>
<div class="btn" style="left:447px"><span style="letter-spacing:-0.3px;left:-1px">Save</span></div>
<div class="btn" style="left:532px"><span style="left:-1px">Quit</span></div>


<script>
(function(){
var L=[[0.1741,0.005],[0.1738,0.0049],[0.1733,0.0048],[0.1726,0.0048],[0.1714,0.0051],[0.1689,0.0069],[0.1644,0.0109],[0.1566,0.0177],[0.144,0.0297],[0.1241,0.0578],[0.1096,0.0868],[0.0913,0.1327],[0.0687,0.2007],[0.0454,0.295],[0.0235,0.4127],[0.0082,0.5384],[0.0039,0.6548],[0.0139,0.7502],[0.0389,0.812],[0.0743,0.8338],[0.1142,0.8262],[0.1547,0.8059],[0.1929,0.7816],[0.2296,0.7543],[0.2658,0.7243],[0.3016,0.6923],[0.3373,0.6589],[0.3731,0.6245],[0.4087,0.5896],[0.4441,0.5547],[0.4788,0.5202],[0.5125,0.4866],[0.5448,0.4544],[0.5752,0.4242],[0.6029,0.3965],[0.627,0.3725],[0.6482,0.3514],[0.6658,0.334],[0.6801,0.3197],[0.6915,0.3083],[0.7006,0.2993],[0.7079,0.292],[0.714,0.2859],[0.719,0.2809],[0.723,0.277],[0.726,0.274],[0.7283,0.2717],[0.73,0.27],[0.7311,0.2689],[0.732,0.268],[0.7327,0.2673],[0.7334,0.2666],[0.734,0.266],[0.7344,0.2656],[0.7346,0.2654],[0.7347,0.2653]];
var cv=document.getElementById('cie'); if(!cv||!cv.getContext) return;
var c=cv.getContext('2d'), W=251,H=256, S=283.5;
var P=[]; for(var i=0;i<L.length-1;i++){var p0=L[Math.max(0,i-1)],p1=L[i],p2=L[i+1],p3=L[Math.min(L.length-1,i+2)]; for(var k=0;k<10;k++){var t=k/10,t2=t*t,t3=t2*t; var f=function(a,b,c2,d2){return 0.5*((2*b)+(-a+c2)*t+(2*a-5*b+4*c2-d2)*t2+(-a+3*b-3*c2+d2)*t3);}; P.push([f(p0[0],p1[0],p2[0],p3[0]),f(p0[1],p1[1],p2[1],p3[1])]);}} P.push(L[L.length-1]);
c.beginPath(); for(var i=0;i<P.length;i++){var px=P[i][0]*S+0.5, py=255.5-P[i][1]*S; if(i==0)c.moveTo(px,py); else c.lineTo(px,py);} c.closePath(); c.fillStyle='#fff'; c.fill();
var img=c.getImageData(0,0,W,H), d=img.data, m=[2.1290927,-0.8074107,-0.4214929,-0.5271806,1.4599305,0.0907640,0.0056904,-0.0157586,1.1076331];
function gam(v){v=Math.max(0,Math.min(1,v));return v<=0.0031308?12.92*v:1.055*Math.pow(v,1/2.4)-0.055;}
for(var yy=0;yy<H;yy++){for(var xx=0;xx<W;xx++){
  var o=(yy*W+xx)*4; if(d[o+3]==0) continue;
  var x=xx/S, y=Math.max(0.002,(255-yy)/S);
  var X=x/y, Y=1, Z=(1-x-y)/y;
  var r=m[0]*X+m[1]*Y+m[2]*Z, g=m[3]*X+m[4]*Y+m[5]*Z, b=m[6]*X+m[7]*Y+m[8]*Z;
  if(r<0)r=0;if(g<0)g=0;if(b<0)b=0;
  var M=Math.max(r,g,b); r/=M; g/=M; b/=M;
  d[o]=255*gam(r); d[o+1]=255*gam(g); d[o+2]=255*gam(b);
}}
c.putImageData(img,0,0);
})();
</script>
</body></html>
